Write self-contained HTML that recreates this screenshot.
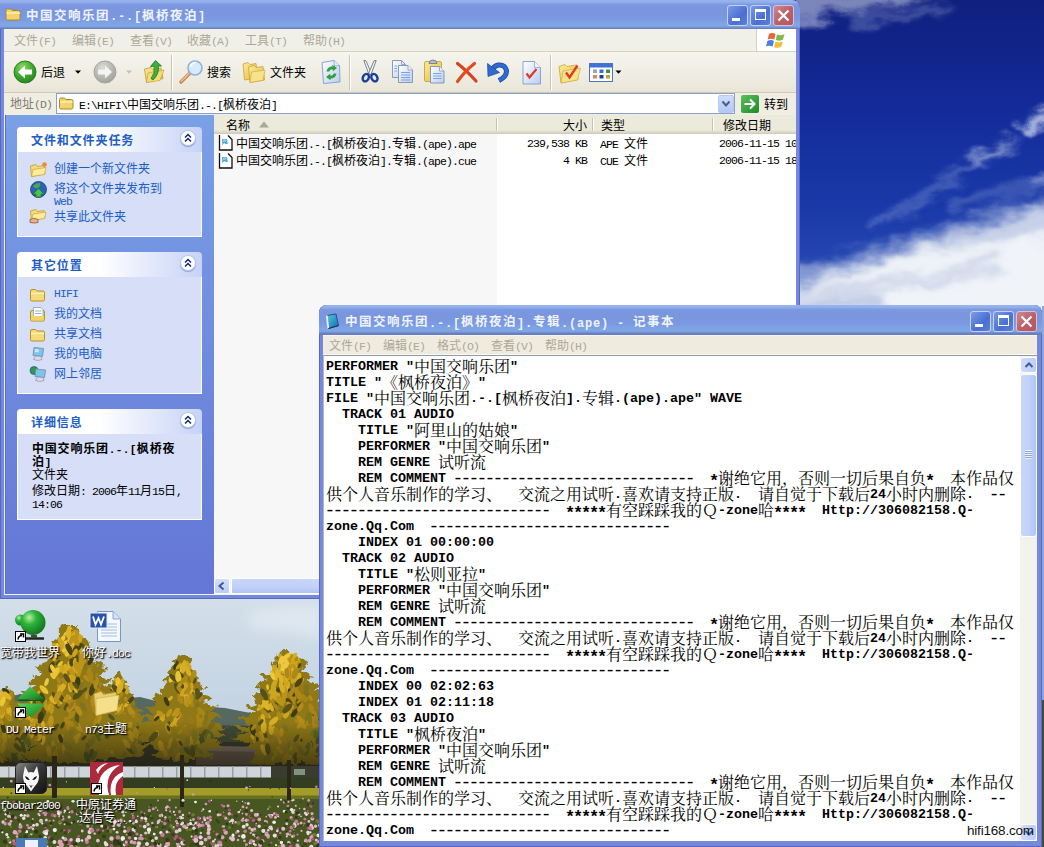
<!DOCTYPE html>
<html lang="zh-CN"><head><meta charset="utf-8"><title>desktop</title>
<style>
*{box-sizing:border-box;margin:0;padding:0}
html,body{width:1044px;height:847px;overflow:hidden;background:#1f3a9c}
body{position:relative;font:12px/16px "Liberation Sans","Noto Sans CJK SC",sans-serif;color:#000}
.abs{position:absolute}
.l{font-family:"Liberation Mono",monospace;font-size:11.500px;letter-spacing:-.9px}
.lb{font:bold 11px "Liberation Mono",monospace;letter-spacing:.4px}
.m{font:bold 12px "Liberation Mono",monospace;letter-spacing:.8px;position:relative;top:.5px}
#bg{position:absolute;left:0;top:0;width:1044px;height:847px}
/* window chrome */
.win{position:absolute;background:#7488dc;box-shadow:inset 1px 0 0 #5a66c4,inset -1px 0 0 #5a66c4,inset 0 -1px 0 #5a66c4;border-radius:8px 8px 0 0;overflow:hidden}
.tb{position:absolute;left:0;top:0;right:0;height:29px;background:linear-gradient(#98b5ef 0,#94b0ec 2px,#7d9ae0 4.500px,#7a96df 8px,#7a96df 15px,#7c9be5 20px,#80a6e3 24px,#7ca3e1 27px,#6c7ec2 28px,#6c7ec2 30px);border-radius:8px 8px 0 0}
.tt{position:absolute;top:7px;font:bold 12.500px/16px "Liberation Sans","Noto Sans CJK SC",sans-serif;color:#eef3ff;white-space:nowrap;letter-spacing:1.500px}
.cb{position:absolute;top:5px;width:21px;height:21px;border-radius:3px;border:1px solid #c5d3f3;background:linear-gradient(135deg,#7c9ae6,#4a6fd4 60%,#5b80dc)}
.cb.x{background:linear-gradient(135deg,#cc8890,#bb5f66 55%,#b8565e);border-color:#d8c0dc}
.menu{position:absolute;background:#efebde;color:#aca899;white-space:nowrap}
.menu span{position:absolute;top:4px}
.beige{background:#efebde}
</style></head><body>
<style>
.ph{position:absolute;left:17px;width:185px;height:25px;border-radius:4px 4px 0 0;background:linear-gradient(90deg,#fff 0,#fff 45%,#c6d3f7 100%);color:#215dc6;font-weight:bold;padding:6px 0 0 14px;letter-spacing:.9px;white-space:nowrap}
.pb{position:absolute;left:17px;width:185px;background:#d6dff7;border:1px solid #fff;border-top:0}
.chev{position:absolute;left:180px;width:16px;height:16px;border-radius:50%;background:#fff;border:1px solid #b9c8ee;box-shadow:0 1px 1px rgba(60,80,160,.4)}
.lk{position:absolute;left:54px;color:#215dc6;white-space:nowrap}
</style>
<style>
#nptext{position:absolute;left:7px;top:53px;width:690px;height:484px;overflow:hidden;font:bold 13.333px/16px "Liberation Mono","DejaVu Sans Mono",monospace;color:#000}
#nptext i{margin:0 1.400px 0 -1.400px;font-style:normal;font-weight:normal;font-size:18px;letter-spacing:-2.800px;color:#000;display:inline-block;vertical-align:top;height:16px;line-height:16px}
#nptext u{text-decoration:none;font-size:17px;letter-spacing:-2.200px;margin:0 1.100px 0 -1.100px;display:inline-block;vertical-align:top;height:16px;line-height:16px;position:relative;top:2.500px}
#nptext p{height:16px;line-height:16px;white-space:pre}
#nptext b{font:normal 16px/16px "Liberation Serif","Noto Serif CJK SC",serif;display:inline-block;vertical-align:top;height:16px;position:relative;top:0}
</style>
<style>
.dl{position:absolute;color:#fff;text-align:center;white-space:nowrap;text-shadow:1px 1px 1px #000,1px 1px 2px rgba(0,0,0,.8);line-height:13px}
.sc{position:absolute;width:11px;height:11px;background:#fff;border:1px solid #000}
</style>
<svg id="bg" width="1044" height="847" viewBox="0 0 1044 847">
<defs>
<linearGradient id="sky" x1="0" y1="0" x2="0" y2="1">
<stop offset="0" stop-color="#101f7e"/><stop offset=".12" stop-color="#132a98"/><stop offset=".25" stop-color="#1a3aa9"/><stop offset=".34" stop-color="#2a4db6"/><stop offset=".4" stop-color="#4a68c0"/><stop offset=".7" stop-color="#c9d8e6"/><stop offset="1" stop-color="#c9d8e6"/>
</linearGradient>
<linearGradient id="sky2" x1="0" y1="0" x2="0" y2="1"><stop offset="0" stop-color="#d3dfe9"/><stop offset="1" stop-color="#c2d2e2"/></linearGradient>
<filter id="b12" x="-30%" y="-30%" width="160%" height="160%"><feGaussianBlur stdDeviation="12"/></filter>
<filter id="b6" x="-30%" y="-30%" width="160%" height="160%"><feGaussianBlur stdDeviation="6"/></filter>
<filter id="b3" x="-30%" y="-30%" width="160%" height="160%"><feGaussianBlur stdDeviation="3"/></filter>
<filter id="b1" x="-10%" y="-10%" width="120%" height="120%"><feGaussianBlur stdDeviation="0.7"/></filter>
<filter id="leaf" x="-10%" y="-10%" width="120%" height="120%"><feTurbulence type="fractalNoise" baseFrequency="0.09" numOctaves="3" seed="4" result="n"/><feDisplacementMap in="SourceGraphic" in2="n" scale="14" xChannelSelector="R" yChannelSelector="G"/></filter>
<clipPath id="dl"><rect x="0" y="597" width="322" height="250"/></clipPath>
<clipPath id="tr"><rect x="796" y="0" width="248" height="847"/></clipPath>
</defs>
<rect width="1044" height="847" fill="url(#sky)"/>
<filter id="cl" filterUnits="userSpaceOnUse" x="700" y="-60" width="420" height="460"><feTurbulence type="fractalNoise" baseFrequency="0.018 0.03" numOctaves="4" seed="9" result="n"/><feGaussianBlur in="SourceGraphic" stdDeviation="5" result="g"/><feDisplacementMap in="g" in2="n" scale="38" xChannelSelector="R" yChannelSelector="G"/></filter>
<filter id="cl2" filterUnits="userSpaceOnUse" x="700" y="-60" width="420" height="460"><feTurbulence type="fractalNoise" baseFrequency="0.03 0.05" numOctaves="4" seed="3" result="n"/><feGaussianBlur in="SourceGraphic" stdDeviation="3.5" result="g"/><feDisplacementMap in="g" in2="n" scale="26" xChannelSelector="R" yChannelSelector="G"/></filter>
<g clip-path="url(#tr)">
<g filter="url(#cl2)">
<path d="M780 -12 L945 -12 Q920 4 890 8 Q862 16 836 13 Q812 20 780 30 Z" fill="#e6ebf6" opacity=".5"/>
<path d="M850 22 Q900 20 945 6" stroke="#9fb0dc" stroke-width="8" fill="none" opacity=".4"/>
</g>
<g filter="url(#cl)">
<path d="M760 300 Q830 268 880 256 Q940 240 990 226 Q1020 216 1080 196 L1080 360 L760 360 Z" fill="#f0f3f8"/>
<path d="M760 276 Q850 252 900 240 Q960 218 1080 190 L1080 232 Q960 246 880 264 Q830 276 760 304 Z" fill="#aebce0" opacity=".6"/>
</g>
<g filter="url(#cl)"><path d="M770 300 Q840 286 900 282 Q960 276 1000 262" stroke="#a9b8da" stroke-width="9" fill="none" opacity=".55"/><path d="M770 318 Q830 300 880 300" stroke="#8ea2d2" stroke-width="14" fill="none" opacity=".5"/><path d="M960 250 Q1010 240 1060 222" stroke="#c3cde6" stroke-width="7" fill="none" opacity=".6"/></g>
<g filter="url(#cl2)">
<path d="M872 226 Q910 208 940 186 Q970 162 1012 144" stroke="#a9b9e2" stroke-width="10" fill="none" opacity=".32"/>
<path d="M972 160 Q995 148 1018 143" stroke="#c9d3ee" stroke-width="8" fill="none" opacity=".5"/>
<path d="M1022 130 Q1036 122 1060 112" stroke="#d3dcf2" stroke-width="12" fill="none" opacity=".8"/>
<path d="M950 206 Q1000 192 1060 180" stroke="#8fa2d8" stroke-width="14" fill="none" opacity=".3"/>
<path d="M1030 184 Q1040 180 1060 176" stroke="#c3cdea" stroke-width="10" fill="none" opacity=".45"/>
</g>
</g>
<g clip-path="url(#dl)">
<rect x="0" y="598" width="322" height="130" fill="url(#sky2)"/>
<path d="M250 612 Q290 604 322 606 L322 640 Q290 630 250 628 Z" fill="#e3ebf2" opacity=".7" filter="url(#b6)"/>
<path d="M0 700 L20 694 L60 700 L110 700 L140 697 L160 702 L195 706 L225 708 L245 712 L270 716 L322 716 L322 770 L0 770 Z" fill="#56685f"/>
<path d="M0 720 L322 728 L322 770 L0 770 Z" fill="#3f4a38"/>
<rect x="0" y="742" width="322" height="55" fill="#34362a"/>
<path d="M196 754 L214 746 L258 747 L272 756 L272 765 L196 765 Z" fill="#66564f"/>
<path d="M214 746 L258 747 L266 752 L205 751 Z" fill="#7d6d66"/>
<path d="M116.5 676.0 L112.1 679.7 L114.0 683.5 L105.6 687.2 L109.3 690.9 L105.0 694.6 L108.6 698.4 L99.4 702.1 L105.0 705.8 L94.9 709.5 L102.4 713.3 L91.9 717.0 L98.3 720.7 L88.5 724.5 L97.4 728.2 L84.2 731.9 L93.8 735.6 L82.9 739.4 L98.0 743.1 L86.3 746.8 L102.2 750.5 L94.8 754.3 L105.4 758.0 L132.2 758.0 L142.9 754.3 L137.4 750.5 L149.1 746.8 L139.9 743.1 L156.6 739.4 L145.0 735.6 L156.3 731.9 L143.0 728.2 L150.8 724.5 L137.1 720.7 L147.5 717.0 L134.5 713.3 L144.2 709.5 L135.0 705.8 L137.8 702.1 L130.6 698.4 L134.8 694.6 L126.7 690.9 L131.8 687.2 L122.8 683.5 L125.8 679.7 L120.7 676.0 Z" fill="#8f7818" filter="url(#leaf)"/><ellipse cx="121.5" cy="706.6" rx="2.3" ry="5.0" fill="#cfa41f" transform="rotate(-15 121.5 706.6)"/><ellipse cx="124.3" cy="754.9" rx="1.6" ry="3.5" fill="#7a6c1c" transform="rotate(41 124.3 754.9)"/><ellipse cx="125.0" cy="729.6" rx="3.0" ry="6.5" fill="#a88416" transform="rotate(-42 125.0 729.6)"/><ellipse cx="124.0" cy="716.5" rx="2.1" ry="4.6" fill="#a88416" transform="rotate(2 124.0 716.5)"/><ellipse cx="100.0" cy="747.8" rx="2.0" ry="4.4" fill="#cfa41f" transform="rotate(-45 100.0 747.8)"/><ellipse cx="130.1" cy="725.7" rx="2.0" ry="4.2" fill="#b08c1a" transform="rotate(14 130.1 725.7)"/><ellipse cx="108.5" cy="697.9" rx="1.3" ry="2.9" fill="#4a4416" transform="rotate(-25 108.5 697.9)"/><ellipse cx="112.1" cy="753.4" rx="1.8" ry="3.8" fill="#b08c1a" transform="rotate(-10 112.1 753.4)"/><ellipse cx="108.3" cy="707.3" rx="2.8" ry="6.0" fill="#cca620" transform="rotate(32 108.3 707.3)"/><ellipse cx="126.6" cy="745.5" rx="1.5" ry="3.2" fill="#b08c1a" transform="rotate(5 126.6 745.5)"/><ellipse cx="128.5" cy="728.0" rx="2.9" ry="6.3" fill="#b08c1a" transform="rotate(16 128.5 728.0)"/><ellipse cx="114.8" cy="703.0" rx="2.6" ry="5.7" fill="#ac8818" transform="rotate(-48 114.8 703.0)"/><ellipse cx="121.7" cy="708.5" rx="1.5" ry="3.3" fill="#ac8818" transform="rotate(9 121.7 708.5)"/><ellipse cx="131.2" cy="706.7" rx="2.3" ry="5.1" fill="#7e7420" transform="rotate(-48 131.2 706.7)"/><ellipse cx="137.9" cy="724.6" rx="1.4" ry="2.9" fill="#7e7420" transform="rotate(-12 137.9 724.6)"/><ellipse cx="111.5" cy="724.8" rx="1.9" ry="4.2" fill="#ac8818" transform="rotate(26 111.5 724.8)"/><ellipse cx="126.0" cy="700.0" rx="1.5" ry="3.2" fill="#bc941a" transform="rotate(-11 126.0 700.0)"/><ellipse cx="124.7" cy="717.8" rx="1.8" ry="3.8" fill="#7e7420" transform="rotate(33 124.7 717.8)"/><ellipse cx="100.2" cy="732.8" rx="1.9" ry="4.0" fill="#bc941a" transform="rotate(6 100.2 732.8)"/><ellipse cx="140.0" cy="741.2" rx="1.5" ry="3.2" fill="#5f6420" transform="rotate(22 140.0 741.2)"/><ellipse cx="109.5" cy="714.1" rx="1.5" ry="3.3" fill="#bc941a" transform="rotate(-10 109.5 714.1)"/><ellipse cx="134.5" cy="741.0" rx="1.6" ry="3.5" fill="#7a6c1c" transform="rotate(29 134.5 741.0)"/><ellipse cx="108.4" cy="706.1" rx="1.8" ry="3.9" fill="#ecc83e" transform="rotate(9 108.4 706.1)"/><ellipse cx="116.6" cy="706.2" rx="2.0" ry="4.4" fill="#d8ae24" transform="rotate(-31 116.6 706.2)"/><ellipse cx="118.5" cy="695.2" rx="2.7" ry="5.9" fill="#d8ae24" transform="rotate(21 118.5 695.2)"/><ellipse cx="134.0" cy="751.8" rx="1.7" ry="3.7" fill="#8a7a1c" transform="rotate(19 134.0 751.8)"/><ellipse cx="111.2" cy="705.8" rx="1.4" ry="3.1" fill="#ecc83e" transform="rotate(-35 111.2 705.8)"/><ellipse cx="98.3" cy="741.2" rx="2.8" ry="6.1" fill="#bc941a" transform="rotate(5 98.3 741.2)"/><ellipse cx="99.1" cy="723.6" rx="2.6" ry="5.6" fill="#ac8818" transform="rotate(-20 99.1 723.6)"/><ellipse cx="120.1" cy="730.1" rx="2.0" ry="4.4" fill="#a88416" transform="rotate(-7 120.1 730.1)"/><ellipse cx="126.6" cy="689.6" rx="2.2" ry="4.8" fill="#cfa41f" transform="rotate(-5 126.6 689.6)"/><ellipse cx="110.8" cy="696.8" rx="2.8" ry="6.1" fill="#3e3c14" transform="rotate(-15 110.8 696.8)"/><ellipse cx="130.5" cy="749.6" rx="2.7" ry="5.9" fill="#54501c" transform="rotate(-44 130.5 749.6)"/><ellipse cx="106.9" cy="737.2" rx="2.4" ry="5.1" fill="#cfa41f" transform="rotate(10 106.9 737.2)"/><ellipse cx="127.8" cy="704.5" rx="2.8" ry="6.0" fill="#a88416" transform="rotate(-35 127.8 704.5)"/><ellipse cx="118.8" cy="683.9" rx="1.4" ry="3.0" fill="#cca620" transform="rotate(-10 118.8 683.9)"/><ellipse cx="111.3" cy="691.9" rx="2.0" ry="4.3" fill="#ecc83e" transform="rotate(-4 111.3 691.9)"/><ellipse cx="130.8" cy="700.1" rx="2.0" ry="4.4" fill="#4a4416" transform="rotate(41 130.8 700.1)"/><ellipse cx="133.3" cy="734.6" rx="2.3" ry="4.9" fill="#54501c" transform="rotate(27 133.3 734.6)"/><ellipse cx="120.8" cy="729.2" rx="2.4" ry="5.2" fill="#54501c" transform="rotate(-44 120.8 729.2)"/><ellipse cx="118.9" cy="708.2" rx="2.5" ry="5.4" fill="#d8ae24" transform="rotate(8 118.9 708.2)"/><ellipse cx="116.5" cy="681.5" rx="1.8" ry="3.8" fill="#cca620" transform="rotate(-22 116.5 681.5)"/><ellipse cx="131.6" cy="712.2" rx="2.9" ry="6.3" fill="#b08c1a" transform="rotate(-35 131.6 712.2)"/><ellipse cx="105.8" cy="715.1" rx="2.7" ry="5.8" fill="#cca620" transform="rotate(35 105.8 715.1)"/><ellipse cx="116.3" cy="688.3" rx="2.2" ry="4.8" fill="#e8c432" transform="rotate(10 116.3 688.3)"/><ellipse cx="123.7" cy="690.9" rx="1.4" ry="3.0" fill="#4a4416" transform="rotate(34 123.7 690.9)"/><ellipse cx="105.9" cy="746.5" rx="1.4" ry="2.9" fill="#a88416" transform="rotate(-47 105.9 746.5)"/><ellipse cx="126.5" cy="743.8" rx="2.7" ry="5.9" fill="#b08c1a" transform="rotate(-39 126.5 743.8)"/><ellipse cx="121.7" cy="682.8" rx="2.2" ry="4.7" fill="#cfa41f" transform="rotate(20 121.7 682.8)"/><ellipse cx="140.0" cy="736.6" rx="1.4" ry="3.1" fill="#5f6420" transform="rotate(-41 140.0 736.6)"/><ellipse cx="111.7" cy="698.4" rx="1.7" ry="3.8" fill="#cca620" transform="rotate(-18 111.7 698.4)"/><ellipse cx="115.9" cy="707.8" rx="1.9" ry="4.1" fill="#cfa41f" transform="rotate(-2 115.9 707.8)"/><ellipse cx="136.5" cy="717.8" rx="2.0" ry="4.4" fill="#98781a" transform="rotate(3 136.5 717.8)"/><ellipse cx="131.0" cy="732.2" rx="2.5" ry="5.3" fill="#7e7420" transform="rotate(-31 131.0 732.2)"/><ellipse cx="136.6" cy="728.6" rx="1.6" ry="3.4" fill="#54501c" transform="rotate(39 136.6 728.6)"/><ellipse cx="116.8" cy="719.1" rx="2.5" ry="5.5" fill="#ac8818" transform="rotate(46 116.8 719.1)"/><ellipse cx="120.8" cy="695.1" rx="1.8" ry="4.0" fill="#ac8818" transform="rotate(35 120.8 695.1)"/><ellipse cx="114.9" cy="733.3" rx="2.8" ry="6.0" fill="#b08c1a" transform="rotate(-23 114.9 733.3)"/><ellipse cx="112.8" cy="703.3" rx="2.7" ry="5.8" fill="#ecc83e" transform="rotate(-20 112.8 703.3)"/><ellipse cx="126.5" cy="704.4" rx="1.6" ry="3.4" fill="#d8ae24" transform="rotate(39 126.5 704.4)"/><ellipse cx="117.7" cy="725.3" rx="2.7" ry="5.9" fill="#cfa41f" transform="rotate(11 117.7 725.3)"/><ellipse cx="105.8" cy="755.0" rx="2.9" ry="6.3" fill="#a88416" transform="rotate(9 105.8 755.0)"/><ellipse cx="134.0" cy="748.8" rx="2.4" ry="5.2" fill="#7a6c1c" transform="rotate(-23 134.0 748.8)"/><ellipse cx="108.0" cy="744.5" rx="1.6" ry="3.6" fill="#98781a" transform="rotate(29 108.0 744.5)"/><ellipse cx="136.0" cy="733.3" rx="2.8" ry="6.1" fill="#a88416" transform="rotate(-10 136.0 733.3)"/><ellipse cx="111.0" cy="693.9" rx="2.7" ry="5.8" fill="#5a5218" transform="rotate(-13 111.0 693.9)"/><ellipse cx="118.5" cy="682.8" rx="2.6" ry="5.5" fill="#e8c432" transform="rotate(-8 118.5 682.8)"/><ellipse cx="115.6" cy="705.1" rx="1.5" ry="3.1" fill="#d8ae24" transform="rotate(0 115.6 705.1)"/><ellipse cx="116.1" cy="689.6" rx="2.8" ry="6.1" fill="#54501c" transform="rotate(-36 116.1 689.6)"/><ellipse cx="119.9" cy="713.2" rx="1.7" ry="3.8" fill="#ac8818" transform="rotate(36 119.9 713.2)"/><ellipse cx="131.2" cy="738.4" rx="1.8" ry="3.9" fill="#b08c1a" transform="rotate(-37 131.2 738.4)"/><ellipse cx="141.2" cy="737.0" rx="2.5" ry="5.3" fill="#7a6c1c" transform="rotate(35 141.2 737.0)"/><ellipse cx="113.6" cy="717.4" rx="2.5" ry="5.5" fill="#bc941a" transform="rotate(32 113.6 717.4)"/><ellipse cx="124.8" cy="728.8" rx="1.6" ry="3.5" fill="#7e7420" transform="rotate(-35 124.8 728.8)"/><ellipse cx="119.9" cy="688.3" rx="2.9" ry="6.2" fill="#d8ae24" transform="rotate(21 119.9 688.3)"/><ellipse cx="110.8" cy="702.8" rx="2.1" ry="4.6" fill="#e8c432" transform="rotate(-37 110.8 702.8)"/><ellipse cx="131.2" cy="734.1" rx="2.2" ry="4.8" fill="#b08c1a" transform="rotate(-38 131.2 734.1)"/><ellipse cx="116.2" cy="700.2" rx="2.8" ry="6.0" fill="#5a5218" transform="rotate(-19 116.2 700.2)"/><ellipse cx="119.7" cy="732.6" rx="2.8" ry="6.0" fill="#7e7420" transform="rotate(19 119.7 732.6)"/>
<path d="M65.8 624.0 L60.0 630.3 L59.8 636.5 L50.3 642.8 L52.2 649.1 L42.7 655.4 L49.3 661.6 L33.3 667.9 L42.0 674.2 L27.6 680.5 L36.1 686.7 L20.5 693.0 L32.0 699.3 L9.9 705.5 L28.1 711.8 L3.8 718.1 L23.0 724.4 L3.6 730.6 L29.6 736.9 L13.6 743.2 L37.5 749.5 L23.6 755.7 L45.6 762.0 L96.1 762.0 L114.2 755.7 L106.0 749.5 L125.7 743.2 L111.9 736.9 L133.6 730.6 L115.8 724.4 L134.1 718.1 L111.7 711.8 L127.1 705.5 L106.6 699.3 L120.7 693.0 L102.2 686.7 L112.1 680.5 L98.7 674.2 L107.4 667.9 L89.7 661.6 L98.4 655.4 L84.3 649.1 L91.5 642.8 L80.0 636.5 L80.1 630.3 L74.1 624.0 Z" fill="#8f7818" filter="url(#leaf)"/><ellipse cx="64.8" cy="749.8" rx="2.7" ry="5.9" fill="#b08c1a" transform="rotate(-14 64.8 749.8)"/><ellipse cx="99.4" cy="705.5" rx="2.7" ry="5.9" fill="#a88416" transform="rotate(11 99.4 705.5)"/><ellipse cx="82.7" cy="661.7" rx="2.0" ry="4.4" fill="#ac8818" transform="rotate(-39 82.7 661.7)"/><ellipse cx="70.5" cy="686.6" rx="2.6" ry="5.7" fill="#d8ae24" transform="rotate(-3 70.5 686.6)"/><ellipse cx="38.2" cy="693.1" rx="1.4" ry="3.0" fill="#cca620" transform="rotate(32 38.2 693.1)"/><ellipse cx="70.1" cy="652.5" rx="3.0" ry="6.4" fill="#bc941a" transform="rotate(1 70.1 652.5)"/><ellipse cx="101.6" cy="696.1" rx="2.3" ry="5.0" fill="#b08c1a" transform="rotate(34 101.6 696.1)"/><ellipse cx="103.4" cy="700.5" rx="1.3" ry="2.9" fill="#98781a" transform="rotate(16 103.4 700.5)"/><ellipse cx="44.3" cy="729.6" rx="2.9" ry="6.3" fill="#ac8818" transform="rotate(22 44.3 729.6)"/><ellipse cx="102.5" cy="701.3" rx="2.0" ry="4.4" fill="#7e7420" transform="rotate(-6 102.5 701.3)"/><ellipse cx="70.6" cy="631.1" rx="2.6" ry="5.7" fill="#e8c432" transform="rotate(-21 70.6 631.1)"/><ellipse cx="74.1" cy="711.6" rx="1.6" ry="3.5" fill="#5a5218" transform="rotate(-46 74.1 711.6)"/><ellipse cx="84.0" cy="737.8" rx="1.5" ry="3.2" fill="#4a4416" transform="rotate(46 84.0 737.8)"/><ellipse cx="47.7" cy="726.8" rx="1.5" ry="3.3" fill="#ac8818" transform="rotate(-13 47.7 726.8)"/><ellipse cx="62.2" cy="639.7" rx="2.2" ry="4.8" fill="#ecc83e" transform="rotate(32 62.2 639.7)"/><ellipse cx="66.0" cy="721.2" rx="1.9" ry="4.0" fill="#a88416" transform="rotate(-11 66.0 721.2)"/><ellipse cx="65.5" cy="680.0" rx="1.6" ry="3.5" fill="#3e3c14" transform="rotate(27 65.5 680.0)"/><ellipse cx="99.4" cy="685.7" rx="1.7" ry="3.7" fill="#a88416" transform="rotate(42 99.4 685.7)"/><ellipse cx="66.6" cy="752.8" rx="2.2" ry="4.7" fill="#98781a" transform="rotate(30 66.6 752.8)"/><ellipse cx="71.4" cy="732.2" rx="1.7" ry="3.7" fill="#7e7420" transform="rotate(36 71.4 732.2)"/><ellipse cx="56.5" cy="704.0" rx="2.4" ry="5.2" fill="#5a5218" transform="rotate(-34 56.5 704.0)"/><ellipse cx="93.2" cy="753.8" rx="1.8" ry="4.0" fill="#8a7a1c" transform="rotate(-12 93.2 753.8)"/><ellipse cx="62.5" cy="725.3" rx="1.7" ry="3.8" fill="#4a4416" transform="rotate(25 62.5 725.3)"/><ellipse cx="108.5" cy="734.9" rx="2.3" ry="4.9" fill="#7a6c1c" transform="rotate(-2 108.5 734.9)"/><ellipse cx="54.8" cy="656.3" rx="2.3" ry="4.9" fill="#deb428" transform="rotate(13 54.8 656.3)"/><ellipse cx="74.5" cy="644.2" rx="1.8" ry="3.9" fill="#ac8818" transform="rotate(28 74.5 644.2)"/><ellipse cx="100.7" cy="741.6" rx="1.4" ry="2.9" fill="#8a7a1c" transform="rotate(22 100.7 741.6)"/><ellipse cx="56.0" cy="730.3" rx="1.7" ry="3.6" fill="#7e7420" transform="rotate(20 56.0 730.3)"/><ellipse cx="90.3" cy="674.6" rx="2.5" ry="5.4" fill="#98781a" transform="rotate(-42 90.3 674.6)"/><ellipse cx="32.7" cy="723.0" rx="1.6" ry="3.5" fill="#bc941a" transform="rotate(-16 32.7 723.0)"/><ellipse cx="78.9" cy="727.3" rx="2.7" ry="5.9" fill="#b08c1a" transform="rotate(-36 78.9 727.3)"/><ellipse cx="87.5" cy="667.9" rx="2.3" ry="5.1" fill="#7e7420" transform="rotate(-33 87.5 667.9)"/><ellipse cx="90.6" cy="704.5" rx="1.9" ry="4.0" fill="#7e7420" transform="rotate(50 90.6 704.5)"/><ellipse cx="58.0" cy="649.6" rx="1.5" ry="3.3" fill="#cca620" transform="rotate(-41 58.0 649.6)"/><ellipse cx="49.2" cy="703.4" rx="1.5" ry="3.2" fill="#ac8818" transform="rotate(22 49.2 703.4)"/><ellipse cx="42.3" cy="698.7" rx="2.8" ry="6.1" fill="#4a4416" transform="rotate(-13 42.3 698.7)"/><ellipse cx="72.7" cy="632.5" rx="1.5" ry="3.2" fill="#4a4416" transform="rotate(-26 72.7 632.5)"/><ellipse cx="90.6" cy="661.3" rx="2.0" ry="4.4" fill="#3e3c14" transform="rotate(37 90.6 661.3)"/><ellipse cx="80.3" cy="661.6" rx="1.5" ry="3.2" fill="#d8ae24" transform="rotate(19 80.3 661.6)"/><ellipse cx="55.3" cy="746.3" rx="1.7" ry="3.8" fill="#a88416" transform="rotate(-24 55.3 746.3)"/><ellipse cx="31.8" cy="713.7" rx="1.3" ry="2.9" fill="#ac8818" transform="rotate(42 31.8 713.7)"/><ellipse cx="66.1" cy="706.6" rx="1.8" ry="4.0" fill="#5a5218" transform="rotate(26 66.1 706.6)"/><ellipse cx="46.2" cy="754.0" rx="1.7" ry="3.6" fill="#7e7420" transform="rotate(34 46.2 754.0)"/><ellipse cx="52.8" cy="676.1" rx="1.7" ry="3.6" fill="#ecc83e" transform="rotate(-40 52.8 676.1)"/><ellipse cx="35.8" cy="735.0" rx="2.6" ry="5.6" fill="#5a5218" transform="rotate(-21 35.8 735.0)"/><ellipse cx="58.8" cy="680.5" rx="1.9" ry="4.1" fill="#ac8818" transform="rotate(-19 58.8 680.5)"/><ellipse cx="72.3" cy="673.3" rx="2.3" ry="5.0" fill="#bc941a" transform="rotate(-22 72.3 673.3)"/><ellipse cx="65.7" cy="633.5" rx="1.4" ry="3.1" fill="#e8c432" transform="rotate(43 65.7 633.5)"/><ellipse cx="73.2" cy="640.4" rx="1.8" ry="3.9" fill="#d8ae24" transform="rotate(10 73.2 640.4)"/><ellipse cx="43.0" cy="740.4" rx="2.2" ry="4.7" fill="#cfa41f" transform="rotate(15 43.0 740.4)"/><ellipse cx="48.8" cy="751.4" rx="2.6" ry="5.7" fill="#b08c1a" transform="rotate(-11 48.8 751.4)"/><ellipse cx="70.4" cy="644.5" rx="2.9" ry="6.2" fill="#deb428" transform="rotate(-32 70.4 644.5)"/><ellipse cx="86.2" cy="700.2" rx="2.6" ry="5.7" fill="#98781a" transform="rotate(-28 86.2 700.2)"/><ellipse cx="71.8" cy="668.9" rx="1.4" ry="3.0" fill="#bc941a" transform="rotate(-18 71.8 668.9)"/><ellipse cx="85.9" cy="729.6" rx="2.1" ry="4.5" fill="#b08c1a" transform="rotate(19 85.9 729.6)"/><ellipse cx="72.4" cy="686.7" rx="1.3" ry="2.9" fill="#bc941a" transform="rotate(-17 72.4 686.7)"/><ellipse cx="89.7" cy="692.6" rx="2.9" ry="6.3" fill="#a88416" transform="rotate(-43 89.7 692.6)"/><ellipse cx="76.9" cy="718.7" rx="2.3" ry="5.0" fill="#5a5218" transform="rotate(0 76.9 718.7)"/><ellipse cx="45.5" cy="702.5" rx="1.5" ry="3.2" fill="#bc941a" transform="rotate(17 45.5 702.5)"/><ellipse cx="89.8" cy="671.2" rx="2.9" ry="6.2" fill="#98781a" transform="rotate(-20 89.8 671.2)"/><ellipse cx="79.3" cy="670.6" rx="2.9" ry="6.3" fill="#ac8818" transform="rotate(21 79.3 670.6)"/><ellipse cx="88.1" cy="708.5" rx="2.4" ry="5.2" fill="#98781a" transform="rotate(-44 88.1 708.5)"/><ellipse cx="88.3" cy="747.9" rx="2.4" ry="5.2" fill="#5f6420" transform="rotate(-11 88.3 747.9)"/><ellipse cx="60.3" cy="668.8" rx="2.2" ry="4.9" fill="#cca620" transform="rotate(26 60.3 668.8)"/><ellipse cx="60.6" cy="641.7" rx="2.3" ry="5.1" fill="#cca620" transform="rotate(-28 60.6 641.7)"/><ellipse cx="67.6" cy="650.7" rx="2.9" ry="6.3" fill="#e8c432" transform="rotate(13 67.6 650.7)"/><ellipse cx="88.6" cy="717.4" rx="1.9" ry="4.1" fill="#98781a" transform="rotate(19 88.6 717.4)"/><ellipse cx="28.7" cy="723.6" rx="3.0" ry="6.4" fill="#cfa41f" transform="rotate(-16 28.7 723.6)"/><ellipse cx="32.6" cy="724.5" rx="3.0" ry="6.4" fill="#cfa41f" transform="rotate(6 32.6 724.5)"/><ellipse cx="49.4" cy="738.9" rx="2.7" ry="6.0" fill="#7e7420" transform="rotate(0 49.4 738.9)"/><ellipse cx="64.1" cy="651.8" rx="1.5" ry="3.3" fill="#deb428" transform="rotate(-35 64.1 651.8)"/><ellipse cx="72.1" cy="685.7" rx="2.8" ry="6.2" fill="#ac8818" transform="rotate(-19 72.1 685.7)"/><ellipse cx="73.4" cy="679.0" rx="2.9" ry="6.4" fill="#cfa41f" transform="rotate(-47 73.4 679.0)"/><ellipse cx="78.5" cy="710.6" rx="2.7" ry="5.9" fill="#b08c1a" transform="rotate(-32 78.5 710.6)"/><ellipse cx="53.5" cy="699.8" rx="2.3" ry="5.0" fill="#d8ae24" transform="rotate(-29 53.5 699.8)"/><ellipse cx="69.3" cy="700.1" rx="2.8" ry="6.0" fill="#d8ae24" transform="rotate(-24 69.3 700.1)"/><ellipse cx="51.6" cy="667.0" rx="2.7" ry="5.8" fill="#4a4416" transform="rotate(19 51.6 667.0)"/><ellipse cx="78.4" cy="668.5" rx="2.5" ry="5.5" fill="#cfa41f" transform="rotate(14 78.4 668.5)"/><ellipse cx="87.1" cy="678.3" rx="2.1" ry="4.5" fill="#b08c1a" transform="rotate(-50 87.1 678.3)"/><ellipse cx="76.4" cy="646.6" rx="1.9" ry="4.1" fill="#ac8818" transform="rotate(50 76.4 646.6)"/><ellipse cx="76.4" cy="723.7" rx="1.5" ry="3.3" fill="#7e7420" transform="rotate(-24 76.4 723.7)"/><ellipse cx="106.6" cy="701.6" rx="2.4" ry="5.2" fill="#98781a" transform="rotate(9 106.6 701.6)"/><ellipse cx="71.3" cy="707.2" rx="2.9" ry="6.3" fill="#b08c1a" transform="rotate(39 71.3 707.2)"/><ellipse cx="74.2" cy="652.5" rx="2.2" ry="4.8" fill="#cfa41f" transform="rotate(36 74.2 652.5)"/><ellipse cx="65.7" cy="680.3" rx="2.0" ry="4.3" fill="#cfa41f" transform="rotate(13 65.7 680.3)"/><ellipse cx="55.3" cy="756.3" rx="2.9" ry="6.4" fill="#a88416" transform="rotate(2 55.3 756.3)"/><ellipse cx="39.3" cy="722.5" rx="2.6" ry="5.7" fill="#ac8818" transform="rotate(-28 39.3 722.5)"/><ellipse cx="97.8" cy="728.3" rx="2.3" ry="5.1" fill="#8a7a1c" transform="rotate(40 97.8 728.3)"/><ellipse cx="81.1" cy="683.1" rx="1.8" ry="4.0" fill="#ac8818" transform="rotate(12 81.1 683.1)"/><ellipse cx="70.4" cy="652.4" rx="1.8" ry="3.8" fill="#54501c" transform="rotate(-42 70.4 652.4)"/><ellipse cx="78.5" cy="676.0" rx="1.4" ry="2.9" fill="#bc941a" transform="rotate(38 78.5 676.0)"/><ellipse cx="73.5" cy="642.7" rx="1.8" ry="3.9" fill="#bc941a" transform="rotate(-20 73.5 642.7)"/><ellipse cx="52.7" cy="743.4" rx="1.4" ry="3.1" fill="#b08c1a" transform="rotate(9 52.7 743.4)"/><ellipse cx="86.5" cy="695.8" rx="1.6" ry="3.5" fill="#b08c1a" transform="rotate(-5 86.5 695.8)"/><ellipse cx="48.8" cy="708.3" rx="2.3" ry="4.9" fill="#ac8818" transform="rotate(28 48.8 708.3)"/><ellipse cx="55.7" cy="672.8" rx="2.9" ry="6.4" fill="#e8c432" transform="rotate(29 55.7 672.8)"/><ellipse cx="95.2" cy="682.0" rx="2.9" ry="6.3" fill="#b08c1a" transform="rotate(-26 95.2 682.0)"/><ellipse cx="75.4" cy="640.1" rx="2.8" ry="6.0" fill="#bc941a" transform="rotate(27 75.4 640.1)"/><ellipse cx="67.3" cy="750.9" rx="1.6" ry="3.5" fill="#7e7420" transform="rotate(-4 67.3 750.9)"/><ellipse cx="65.1" cy="670.2" rx="1.5" ry="3.3" fill="#ac8818" transform="rotate(-42 65.1 670.2)"/><ellipse cx="67.2" cy="644.4" rx="2.1" ry="4.7" fill="#3e3c14" transform="rotate(-45 67.2 644.4)"/><ellipse cx="72.1" cy="637.9" rx="2.8" ry="6.1" fill="#cfa41f" transform="rotate(13 72.1 637.9)"/><ellipse cx="97.6" cy="720.3" rx="2.9" ry="6.4" fill="#b08c1a" transform="rotate(34 97.6 720.3)"/><ellipse cx="39.0" cy="737.3" rx="2.5" ry="5.4" fill="#54501c" transform="rotate(-21 39.0 737.3)"/><ellipse cx="61.7" cy="693.7" rx="1.6" ry="3.5" fill="#ac8818" transform="rotate(9 61.7 693.7)"/><ellipse cx="61.9" cy="700.3" rx="2.1" ry="4.5" fill="#d8ae24" transform="rotate(25 61.9 700.3)"/><ellipse cx="62.0" cy="645.0" rx="1.5" ry="3.1" fill="#4a4416" transform="rotate(11 62.0 645.0)"/><ellipse cx="64.1" cy="671.5" rx="2.3" ry="5.0" fill="#d8ae24" transform="rotate(-30 64.1 671.5)"/><ellipse cx="89.6" cy="742.6" rx="1.6" ry="3.4" fill="#7a6c1c" transform="rotate(-1 89.6 742.6)"/><ellipse cx="75.3" cy="649.3" rx="1.4" ry="3.1" fill="#bc941a" transform="rotate(-40 75.3 649.3)"/><ellipse cx="92.1" cy="689.7" rx="2.8" ry="6.2" fill="#4a4416" transform="rotate(17 92.1 689.7)"/><ellipse cx="33.0" cy="737.6" rx="1.8" ry="3.9" fill="#4a4416" transform="rotate(-26 33.0 737.6)"/><ellipse cx="72.5" cy="634.4" rx="2.6" ry="5.6" fill="#bc941a" transform="rotate(34 72.5 634.4)"/><ellipse cx="59.2" cy="687.7" rx="1.8" ry="3.8" fill="#bc941a" transform="rotate(-19 59.2 687.7)"/><ellipse cx="79.5" cy="638.5" rx="2.3" ry="5.0" fill="#cfa41f" transform="rotate(-5 79.5 638.5)"/><ellipse cx="72.8" cy="700.3" rx="2.5" ry="5.5" fill="#a88416" transform="rotate(41 72.8 700.3)"/><ellipse cx="75.0" cy="664.8" rx="3.0" ry="6.4" fill="#3e3c14" transform="rotate(-38 75.0 664.8)"/><ellipse cx="83.6" cy="650.1" rx="2.8" ry="6.0" fill="#cfa41f" transform="rotate(31 83.6 650.1)"/><ellipse cx="78.0" cy="642.5" rx="2.1" ry="4.6" fill="#ac8818" transform="rotate(-45 78.0 642.5)"/><ellipse cx="56.1" cy="647.0" rx="2.4" ry="5.3" fill="#cca620" transform="rotate(-47 56.1 647.0)"/><ellipse cx="49.3" cy="724.4" rx="1.7" ry="3.8" fill="#ac8818" transform="rotate(-46 49.3 724.4)"/><ellipse cx="35.3" cy="740.0" rx="1.8" ry="3.8" fill="#ac8818" transform="rotate(-2 35.3 740.0)"/><ellipse cx="100.1" cy="733.3" rx="1.8" ry="4.0" fill="#5f6420" transform="rotate(14 100.1 733.3)"/><ellipse cx="57.4" cy="701.6" rx="1.9" ry="4.1" fill="#d8ae24" transform="rotate(-37 57.4 701.6)"/><ellipse cx="79.5" cy="647.4" rx="2.2" ry="4.8" fill="#cfa41f" transform="rotate(-13 79.5 647.4)"/><ellipse cx="43.1" cy="725.3" rx="2.0" ry="4.3" fill="#d8ae24" transform="rotate(-6 43.1 725.3)"/><ellipse cx="57.1" cy="646.9" rx="1.8" ry="4.0" fill="#ecc83e" transform="rotate(3 57.1 646.9)"/><ellipse cx="62.9" cy="668.8" rx="1.9" ry="4.0" fill="#cfa41f" transform="rotate(17 62.9 668.8)"/><ellipse cx="64.7" cy="646.4" rx="2.5" ry="5.5" fill="#e8c432" transform="rotate(7 64.7 646.4)"/><ellipse cx="68.8" cy="755.2" rx="2.9" ry="6.2" fill="#7e7420" transform="rotate(-40 68.8 755.2)"/><ellipse cx="90.9" cy="748.0" rx="1.5" ry="3.3" fill="#8a7a1c" transform="rotate(50 90.9 748.0)"/><ellipse cx="73.2" cy="662.1" rx="1.9" ry="4.1" fill="#ac8818" transform="rotate(1 73.2 662.1)"/><ellipse cx="74.8" cy="669.9" rx="1.9" ry="4.1" fill="#cfa41f" transform="rotate(-32 74.8 669.9)"/><ellipse cx="57.9" cy="662.7" rx="1.5" ry="3.3" fill="#54501c" transform="rotate(43 57.9 662.7)"/><ellipse cx="94.9" cy="709.6" rx="3.0" ry="6.4" fill="#a88416" transform="rotate(-24 94.9 709.6)"/><ellipse cx="75.9" cy="664.1" rx="2.2" ry="4.8" fill="#4a4416" transform="rotate(-23 75.9 664.1)"/><ellipse cx="43.2" cy="712.6" rx="2.8" ry="6.0" fill="#5a5218" transform="rotate(12 43.2 712.6)"/><ellipse cx="50.9" cy="721.1" rx="2.8" ry="6.1" fill="#bc941a" transform="rotate(4 50.9 721.1)"/><ellipse cx="61.5" cy="688.3" rx="2.9" ry="6.2" fill="#d8ae24" transform="rotate(42 61.5 688.3)"/><ellipse cx="78.0" cy="640.1" rx="3.0" ry="6.4" fill="#cfa41f" transform="rotate(45 78.0 640.1)"/><ellipse cx="61.5" cy="698.4" rx="2.8" ry="6.0" fill="#54501c" transform="rotate(-45 61.5 698.4)"/><ellipse cx="96.3" cy="675.6" rx="1.3" ry="2.9" fill="#a88416" transform="rotate(19 96.3 675.6)"/><ellipse cx="64.3" cy="646.1" rx="2.8" ry="6.1" fill="#ecc83e" transform="rotate(17 64.3 646.1)"/><ellipse cx="96.3" cy="683.1" rx="2.9" ry="6.2" fill="#b08c1a" transform="rotate(7 96.3 683.1)"/><ellipse cx="70.3" cy="669.2" rx="2.3" ry="5.0" fill="#bc941a" transform="rotate(-18 70.3 669.2)"/><ellipse cx="110.3" cy="711.7" rx="2.6" ry="5.5" fill="#8a7a1c" transform="rotate(3 110.3 711.7)"/><ellipse cx="95.7" cy="682.0" rx="2.8" ry="6.1" fill="#a88416" transform="rotate(-39 95.7 682.0)"/><ellipse cx="60.6" cy="738.4" rx="2.1" ry="4.6" fill="#b08c1a" transform="rotate(31 60.6 738.4)"/><ellipse cx="68.3" cy="726.0" rx="1.9" ry="4.1" fill="#a88416" transform="rotate(11 68.3 726.0)"/><ellipse cx="65.4" cy="675.9" rx="1.4" ry="2.9" fill="#ac8818" transform="rotate(-3 65.4 675.9)"/><ellipse cx="77.1" cy="739.8" rx="1.8" ry="3.9" fill="#b08c1a" transform="rotate(15 77.1 739.8)"/><ellipse cx="66.3" cy="667.4" rx="1.8" ry="3.9" fill="#d8ae24" transform="rotate(-23 66.3 667.4)"/><ellipse cx="69.2" cy="721.7" rx="3.0" ry="6.4" fill="#a88416" transform="rotate(-42 69.2 721.7)"/><ellipse cx="84.0" cy="647.3" rx="1.7" ry="3.7" fill="#5a5218" transform="rotate(-31 84.0 647.3)"/><ellipse cx="100.1" cy="691.8" rx="2.0" ry="4.3" fill="#a88416" transform="rotate(-39 100.1 691.8)"/><ellipse cx="97.9" cy="685.2" rx="1.4" ry="3.0" fill="#7e7420" transform="rotate(-6 97.9 685.2)"/><ellipse cx="73.1" cy="636.9" rx="2.9" ry="6.2" fill="#d8ae24" transform="rotate(35 73.1 636.9)"/><ellipse cx="114.4" cy="725.0" rx="2.5" ry="5.4" fill="#7a6c1c" transform="rotate(50 114.4 725.0)"/><ellipse cx="75.7" cy="658.1" rx="2.8" ry="6.0" fill="#54501c" transform="rotate(-13 75.7 658.1)"/><ellipse cx="69.8" cy="717.5" rx="2.0" ry="4.3" fill="#7e7420" transform="rotate(-37 69.8 717.5)"/><ellipse cx="73.7" cy="649.8" rx="2.5" ry="5.4" fill="#ac8818" transform="rotate(3 73.7 649.8)"/><ellipse cx="109.0" cy="725.3" rx="2.2" ry="4.8" fill="#5f6420" transform="rotate(50 109.0 725.3)"/><ellipse cx="55.6" cy="727.3" rx="2.1" ry="4.6" fill="#5a5218" transform="rotate(40 55.6 727.3)"/><ellipse cx="71.8" cy="664.9" rx="2.1" ry="4.5" fill="#cfa41f" transform="rotate(-21 71.8 664.9)"/><ellipse cx="54.1" cy="695.4" rx="1.7" ry="3.8" fill="#5a5218" transform="rotate(-26 54.1 695.4)"/><ellipse cx="77.7" cy="682.7" rx="2.8" ry="6.1" fill="#3e3c14" transform="rotate(2 77.7 682.7)"/><ellipse cx="69.1" cy="665.2" rx="1.8" ry="4.0" fill="#d8ae24" transform="rotate(-3 69.1 665.2)"/><ellipse cx="49.9" cy="706.9" rx="1.6" ry="3.5" fill="#d8ae24" transform="rotate(18 49.9 706.9)"/><ellipse cx="70.1" cy="649.9" rx="2.2" ry="4.8" fill="#3e3c14" transform="rotate(-10 70.1 649.9)"/><ellipse cx="68.4" cy="709.9" rx="1.5" ry="3.3" fill="#b08c1a" transform="rotate(-22 68.4 709.9)"/><ellipse cx="71.0" cy="642.1" rx="2.5" ry="5.4" fill="#e8c432" transform="rotate(-22 71.0 642.1)"/><ellipse cx="70.2" cy="702.4" rx="2.4" ry="5.3" fill="#ac8818" transform="rotate(-50 70.2 702.4)"/><ellipse cx="98.2" cy="729.1" rx="2.7" ry="5.9" fill="#5f6420" transform="rotate(-15 98.2 729.1)"/><ellipse cx="111.5" cy="717.3" rx="1.9" ry="4.1" fill="#4c5420" transform="rotate(-48 111.5 717.3)"/><ellipse cx="65.5" cy="646.3" rx="1.5" ry="3.3" fill="#deb428" transform="rotate(37 65.5 646.3)"/><ellipse cx="58.4" cy="703.8" rx="1.5" ry="3.2" fill="#ac8818" transform="rotate(-10 58.4 703.8)"/><ellipse cx="71.3" cy="662.5" rx="1.9" ry="4.2" fill="#54501c" transform="rotate(-3 71.3 662.5)"/><ellipse cx="79.3" cy="749.4" rx="1.7" ry="3.7" fill="#8a7a1c" transform="rotate(-49 79.3 749.4)"/><ellipse cx="57.5" cy="696.3" rx="2.9" ry="6.3" fill="#bc941a" transform="rotate(27 57.5 696.3)"/><ellipse cx="54.3" cy="748.6" rx="1.5" ry="3.2" fill="#7e7420" transform="rotate(22 54.3 748.6)"/><ellipse cx="96.3" cy="684.1" rx="1.8" ry="4.0" fill="#b08c1a" transform="rotate(20 96.3 684.1)"/><ellipse cx="73.1" cy="647.8" rx="1.5" ry="3.3" fill="#d8ae24" transform="rotate(-15 73.1 647.8)"/><ellipse cx="51.8" cy="700.2" rx="1.8" ry="3.8" fill="#d8ae24" transform="rotate(-34 51.8 700.2)"/><ellipse cx="46.6" cy="682.1" rx="1.9" ry="4.2" fill="#ecc83e" transform="rotate(19 46.6 682.1)"/><ellipse cx="92.5" cy="701.4" rx="2.2" ry="4.7" fill="#b08c1a" transform="rotate(7 92.5 701.4)"/><ellipse cx="40.5" cy="717.5" rx="2.9" ry="6.2" fill="#3e3c14" transform="rotate(11 40.5 717.5)"/><ellipse cx="98.1" cy="737.7" rx="1.9" ry="4.1" fill="#5f6420" transform="rotate(-31 98.1 737.7)"/><ellipse cx="60.6" cy="738.7" rx="2.1" ry="4.5" fill="#3e3c14" transform="rotate(-16 60.6 738.7)"/><ellipse cx="79.0" cy="668.4" rx="2.4" ry="5.2" fill="#cfa41f" transform="rotate(32 79.0 668.4)"/><ellipse cx="77.5" cy="647.7" rx="2.9" ry="6.3" fill="#4a4416" transform="rotate(49 77.5 647.7)"/><ellipse cx="81.1" cy="685.7" rx="1.8" ry="3.9" fill="#7e7420" transform="rotate(27 81.1 685.7)"/><ellipse cx="44.0" cy="689.6" rx="2.6" ry="5.7" fill="#e8c432" transform="rotate(-45 44.0 689.6)"/><ellipse cx="77.2" cy="736.5" rx="2.2" ry="4.8" fill="#b08c1a" transform="rotate(50 77.2 736.5)"/><ellipse cx="94.1" cy="755.8" rx="2.4" ry="5.2" fill="#5f6420" transform="rotate(29 94.1 755.8)"/><ellipse cx="72.6" cy="661.3" rx="1.9" ry="4.2" fill="#4a4416" transform="rotate(40 72.6 661.3)"/><ellipse cx="89.0" cy="670.7" rx="1.9" ry="4.1" fill="#a88416" transform="rotate(28 89.0 670.7)"/><ellipse cx="62.3" cy="686.1" rx="1.8" ry="3.9" fill="#d8ae24" transform="rotate(39 62.3 686.1)"/><ellipse cx="74.6" cy="661.1" rx="1.6" ry="3.4" fill="#cfa41f" transform="rotate(15 74.6 661.1)"/><ellipse cx="75.0" cy="652.8" rx="2.1" ry="4.6" fill="#cfa41f" transform="rotate(24 75.0 652.8)"/><ellipse cx="76.8" cy="633.7" rx="2.0" ry="4.3" fill="#bc941a" transform="rotate(0 76.8 633.7)"/><ellipse cx="34.4" cy="721.9" rx="1.9" ry="4.1" fill="#bc941a" transform="rotate(50 34.4 721.9)"/><ellipse cx="90.7" cy="716.8" rx="1.9" ry="4.2" fill="#98781a" transform="rotate(5 90.7 716.8)"/><ellipse cx="72.6" cy="686.8" rx="2.3" ry="4.9" fill="#bc941a" transform="rotate(-31 72.6 686.8)"/><ellipse cx="68.7" cy="632.4" rx="2.7" ry="5.8" fill="#deb428" transform="rotate(8 68.7 632.4)"/><ellipse cx="84.8" cy="728.2" rx="2.7" ry="5.8" fill="#98781a" transform="rotate(-31 84.8 728.2)"/><ellipse cx="89.9" cy="754.3" rx="2.9" ry="6.3" fill="#54501c" transform="rotate(31 89.9 754.3)"/><ellipse cx="95.7" cy="720.4" rx="1.7" ry="3.7" fill="#a88416" transform="rotate(19 95.7 720.4)"/><ellipse cx="111.0" cy="733.0" rx="2.8" ry="6.2" fill="#8a7a1c" transform="rotate(34 111.0 733.0)"/><ellipse cx="81.6" cy="661.3" rx="2.9" ry="6.3" fill="#bc941a" transform="rotate(-2 81.6 661.3)"/><ellipse cx="71.0" cy="705.2" rx="2.0" ry="4.4" fill="#98781a" transform="rotate(39 71.0 705.2)"/><ellipse cx="77.7" cy="694.9" rx="3.0" ry="6.5" fill="#54501c" transform="rotate(49 77.7 694.9)"/><ellipse cx="74.4" cy="689.9" rx="1.4" ry="3.0" fill="#4a4416" transform="rotate(32 74.4 689.9)"/><ellipse cx="31.9" cy="734.4" rx="2.2" ry="4.7" fill="#cfa41f" transform="rotate(-11 31.9 734.4)"/><ellipse cx="84.5" cy="690.1" rx="1.6" ry="3.5" fill="#5a5218" transform="rotate(48 84.5 690.1)"/><ellipse cx="66.3" cy="698.8" rx="2.2" ry="4.7" fill="#bc941a" transform="rotate(39 66.3 698.8)"/><ellipse cx="63.5" cy="681.1" rx="1.7" ry="3.6" fill="#ac8818" transform="rotate(-31 63.5 681.1)"/><ellipse cx="60.2" cy="663.8" rx="1.6" ry="3.5" fill="#e8c432" transform="rotate(43 60.2 663.8)"/><ellipse cx="93.4" cy="676.7" rx="1.8" ry="3.8" fill="#7e7420" transform="rotate(-15 93.4 676.7)"/><ellipse cx="33.6" cy="702.7" rx="2.9" ry="6.3" fill="#deb428" transform="rotate(-25 33.6 702.7)"/><ellipse cx="71.8" cy="639.8" rx="2.4" ry="5.1" fill="#bc941a" transform="rotate(23 71.8 639.8)"/><ellipse cx="68.8" cy="648.6" rx="2.5" ry="5.4" fill="#4a4416" transform="rotate(-31 68.8 648.6)"/><ellipse cx="31.7" cy="730.7" rx="2.6" ry="5.6" fill="#bc941a" transform="rotate(25 31.7 730.7)"/><ellipse cx="83.4" cy="706.7" rx="2.2" ry="4.8" fill="#7e7420" transform="rotate(-33 83.4 706.7)"/><ellipse cx="77.6" cy="667.2" rx="3.0" ry="6.5" fill="#bc941a" transform="rotate(-22 77.6 667.2)"/><ellipse cx="52.8" cy="668.7" rx="2.1" ry="4.7" fill="#ecc83e" transform="rotate(-24 52.8 668.7)"/><ellipse cx="28.0" cy="720.5" rx="2.7" ry="5.8" fill="#cfa41f" transform="rotate(28 28.0 720.5)"/><ellipse cx="66.8" cy="678.2" rx="2.4" ry="5.1" fill="#5a5218" transform="rotate(-30 66.8 678.2)"/><ellipse cx="108.4" cy="734.0" rx="2.4" ry="5.2" fill="#54501c" transform="rotate(31 108.4 734.0)"/><ellipse cx="88.8" cy="705.4" rx="2.2" ry="4.7" fill="#98781a" transform="rotate(-1 88.8 705.4)"/><ellipse cx="71.5" cy="714.8" rx="2.7" ry="5.8" fill="#a88416" transform="rotate(41 71.5 714.8)"/><ellipse cx="61.3" cy="646.2" rx="2.6" ry="5.6" fill="#cca620" transform="rotate(19 61.3 646.2)"/><ellipse cx="51.6" cy="708.8" rx="2.4" ry="5.2" fill="#bc941a" transform="rotate(2 51.6 708.8)"/><ellipse cx="86.6" cy="753.8" rx="2.0" ry="4.4" fill="#7a6c1c" transform="rotate(35 86.6 753.8)"/><ellipse cx="39.6" cy="736.4" rx="2.3" ry="4.9" fill="#cfa41f" transform="rotate(12 39.6 736.4)"/><ellipse cx="82.8" cy="658.1" rx="2.2" ry="4.8" fill="#bc941a" transform="rotate(-38 82.8 658.1)"/><ellipse cx="75.9" cy="640.7" rx="2.7" ry="5.9" fill="#bc941a" transform="rotate(-28 75.9 640.7)"/><ellipse cx="45.9" cy="706.5" rx="2.2" ry="4.7" fill="#bc941a" transform="rotate(-21 45.9 706.5)"/><ellipse cx="90.6" cy="676.6" rx="3.0" ry="6.4" fill="#a88416" transform="rotate(-7 90.6 676.6)"/><ellipse cx="67.0" cy="745.9" rx="2.7" ry="5.9" fill="#98781a" transform="rotate(-14 67.0 745.9)"/><ellipse cx="75.5" cy="690.5" rx="1.4" ry="3.1" fill="#d8ae24" transform="rotate(-39 75.5 690.5)"/><ellipse cx="86.9" cy="757.0" rx="2.7" ry="5.9" fill="#4c5420" transform="rotate(-16 86.9 757.0)"/><ellipse cx="67.9" cy="745.9" rx="2.9" ry="6.3" fill="#7e7420" transform="rotate(-48 67.9 745.9)"/><ellipse cx="75.4" cy="685.1" rx="1.9" ry="4.0" fill="#5a5218" transform="rotate(-42 75.4 685.1)"/><ellipse cx="92.3" cy="740.7" rx="2.6" ry="5.7" fill="#7a6c1c" transform="rotate(23 92.3 740.7)"/><ellipse cx="34.7" cy="704.8" rx="2.2" ry="4.8" fill="#5a5218" transform="rotate(-7 34.7 704.8)"/><ellipse cx="86.9" cy="749.3" rx="1.4" ry="3.0" fill="#7a6c1c" transform="rotate(12 86.9 749.3)"/>
<path d="M5.2 688.0 L1.4 691.4 L2.1 694.7 L-6.2 698.1 L0.0 701.5 L-6.7 704.8 L-4.5 708.2 L-11.9 711.5 L-8.9 714.9 L-16.5 718.3 L-8.3 721.6 L-17.9 725.0 L-11.2 728.4 L-24.5 731.7 L-15.2 735.1 L-23.9 738.5 L-16.9 741.8 L-25.8 745.2 L-15.2 748.5 L-21.1 751.9 L-9.0 755.3 L-16.6 758.6 L-7.6 762.0 L16.4 762.0 L26.7 758.6 L21.8 755.3 L35.7 751.9 L27.8 748.5 L38.7 745.2 L29.9 741.8 L39.3 738.5 L24.9 735.1 L36.0 731.7 L22.2 728.4 L29.7 725.0 L20.0 721.6 L29.3 718.3 L17.8 714.9 L24.3 711.5 L15.4 708.2 L18.7 704.8 L14.4 701.5 L16.1 698.1 L12.6 694.7 L13.6 691.4 L8.3 688.0 Z" fill="#8f7818" filter="url(#leaf)"/><ellipse cx="8.4" cy="712.2" rx="1.3" ry="2.9" fill="#ac8818" transform="rotate(-42 8.4 712.2)"/><ellipse cx="13.6" cy="712.8" rx="2.1" ry="4.6" fill="#7e7420" transform="rotate(10 13.6 712.8)"/><ellipse cx="-12.7" cy="739.7" rx="3.0" ry="6.4" fill="#5a5218" transform="rotate(1 -12.7 739.7)"/><ellipse cx="8.3" cy="692.9" rx="1.9" ry="4.2" fill="#cfa41f" transform="rotate(7 8.3 692.9)"/><ellipse cx="2.9" cy="694.9" rx="2.9" ry="6.3" fill="#deb428" transform="rotate(9 2.9 694.9)"/><ellipse cx="2.3" cy="715.1" rx="2.2" ry="4.8" fill="#cfa41f" transform="rotate(25 2.3 715.1)"/><ellipse cx="18.7" cy="742.7" rx="2.8" ry="6.0" fill="#4a4416" transform="rotate(-24 18.7 742.7)"/><ellipse cx="8.8" cy="714.9" rx="2.9" ry="6.2" fill="#cfa41f" transform="rotate(-11 8.8 714.9)"/><ellipse cx="-2.0" cy="738.4" rx="2.7" ry="5.8" fill="#ac8818" transform="rotate(11 -2.0 738.4)"/><ellipse cx="-1.3" cy="702.7" rx="3.0" ry="6.5" fill="#cca620" transform="rotate(-46 -1.3 702.7)"/><ellipse cx="7.9" cy="707.9" rx="2.7" ry="5.9" fill="#d8ae24" transform="rotate(-32 7.9 707.9)"/><ellipse cx="10.3" cy="695.5" rx="1.4" ry="3.0" fill="#bc941a" transform="rotate(-34 10.3 695.5)"/><ellipse cx="7.8" cy="758.5" rx="1.5" ry="3.3" fill="#4c5420" transform="rotate(-37 7.8 758.5)"/><ellipse cx="3.9" cy="703.2" rx="1.4" ry="3.1" fill="#deb428" transform="rotate(8 3.9 703.2)"/><ellipse cx="10.0" cy="754.5" rx="1.6" ry="3.5" fill="#7e7420" transform="rotate(38 10.0 754.5)"/><ellipse cx="5.1" cy="741.4" rx="1.8" ry="3.9" fill="#98781a" transform="rotate(-36 5.1 741.4)"/><ellipse cx="19.2" cy="717.4" rx="2.9" ry="6.4" fill="#7e7420" transform="rotate(-7 19.2 717.4)"/><ellipse cx="5.9" cy="704.0" rx="2.2" ry="4.7" fill="#ac8818" transform="rotate(-42 5.9 704.0)"/><ellipse cx="17.4" cy="745.2" rx="2.5" ry="5.4" fill="#8a7a1c" transform="rotate(-4 17.4 745.2)"/><ellipse cx="12.0" cy="729.8" rx="2.7" ry="5.9" fill="#b08c1a" transform="rotate(-7 12.0 729.8)"/><ellipse cx="9.2" cy="735.9" rx="1.3" ry="2.9" fill="#b08c1a" transform="rotate(-9 9.2 735.9)"/><ellipse cx="4.5" cy="737.4" rx="2.7" ry="5.8" fill="#b08c1a" transform="rotate(-6 4.5 737.4)"/><ellipse cx="2.6" cy="710.3" rx="2.9" ry="6.3" fill="#bc941a" transform="rotate(38 2.6 710.3)"/><ellipse cx="1.9" cy="722.3" rx="1.9" ry="4.1" fill="#3e3c14" transform="rotate(-25 1.9 722.3)"/><ellipse cx="23.1" cy="748.7" rx="2.1" ry="4.6" fill="#4c5420" transform="rotate(-29 23.1 748.7)"/><ellipse cx="22.7" cy="733.7" rx="2.2" ry="4.7" fill="#b08c1a" transform="rotate(29 22.7 733.7)"/><ellipse cx="19.0" cy="729.4" rx="1.8" ry="3.8" fill="#98781a" transform="rotate(-30 19.0 729.4)"/><ellipse cx="10.6" cy="731.6" rx="1.6" ry="3.5" fill="#98781a" transform="rotate(30 10.6 731.6)"/><ellipse cx="26.8" cy="740.6" rx="3.0" ry="6.4" fill="#5f6420" transform="rotate(-36 26.8 740.6)"/><ellipse cx="-1.7" cy="713.3" rx="1.6" ry="3.6" fill="#54501c" transform="rotate(-6 -1.7 713.3)"/><ellipse cx="9.0" cy="717.6" rx="2.3" ry="5.0" fill="#ac8818" transform="rotate(-50 9.0 717.6)"/><ellipse cx="17.7" cy="715.6" rx="2.8" ry="6.0" fill="#b08c1a" transform="rotate(-46 17.7 715.6)"/><ellipse cx="-1.0" cy="729.1" rx="1.8" ry="3.9" fill="#ac8818" transform="rotate(-5 -1.0 729.1)"/><ellipse cx="2.8" cy="747.4" rx="2.7" ry="5.8" fill="#b08c1a" transform="rotate(9 2.8 747.4)"/><ellipse cx="7.5" cy="701.4" rx="2.3" ry="4.9" fill="#bc941a" transform="rotate(27 7.5 701.4)"/><ellipse cx="9.9" cy="697.9" rx="2.4" ry="5.3" fill="#ac8818" transform="rotate(22 9.9 697.9)"/><ellipse cx="7.3" cy="754.1" rx="1.9" ry="4.0" fill="#7e7420" transform="rotate(4 7.3 754.1)"/><ellipse cx="-2.1" cy="721.1" rx="1.8" ry="3.9" fill="#d8ae24" transform="rotate(-1 -2.1 721.1)"/><ellipse cx="18.5" cy="757.1" rx="2.3" ry="5.0" fill="#8a7a1c" transform="rotate(13 18.5 757.1)"/><ellipse cx="-4.0" cy="708.8" rx="2.9" ry="6.3" fill="#ecc83e" transform="rotate(-32 -4.0 708.8)"/><ellipse cx="-6.0" cy="724.2" rx="2.4" ry="5.1" fill="#ac8818" transform="rotate(-45 -6.0 724.2)"/><ellipse cx="19.7" cy="744.9" rx="1.3" ry="2.9" fill="#8a7a1c" transform="rotate(-19 19.7 744.9)"/><ellipse cx="15.1" cy="755.4" rx="1.7" ry="3.8" fill="#5f6420" transform="rotate(42 15.1 755.4)"/><ellipse cx="0.3" cy="759.0" rx="2.3" ry="5.1" fill="#a88416" transform="rotate(-48 0.3 759.0)"/><ellipse cx="-2.5" cy="743.5" rx="2.2" ry="4.8" fill="#b08c1a" transform="rotate(43 -2.5 743.5)"/><ellipse cx="4.8" cy="727.8" rx="1.9" ry="4.2" fill="#bc941a" transform="rotate(-46 4.8 727.8)"/><ellipse cx="6.4" cy="691.9" rx="2.5" ry="5.4" fill="#3e3c14" transform="rotate(-49 6.4 691.9)"/><ellipse cx="15.1" cy="721.0" rx="2.3" ry="5.0" fill="#7e7420" transform="rotate(-1 15.1 721.0)"/><ellipse cx="11.8" cy="724.1" rx="2.5" ry="5.5" fill="#7e7420" transform="rotate(47 11.8 724.1)"/><ellipse cx="9.7" cy="696.2" rx="2.5" ry="5.4" fill="#ac8818" transform="rotate(32 9.7 696.2)"/><ellipse cx="23.2" cy="744.9" rx="1.6" ry="3.4" fill="#4c5420" transform="rotate(-8 23.2 744.9)"/><ellipse cx="3.4" cy="728.3" rx="2.2" ry="4.8" fill="#3e3c14" transform="rotate(-16 3.4 728.3)"/><ellipse cx="17.7" cy="747.5" rx="2.4" ry="5.3" fill="#54501c" transform="rotate(-42 17.7 747.5)"/><ellipse cx="11.4" cy="759.7" rx="1.4" ry="3.0" fill="#5f6420" transform="rotate(28 11.4 759.7)"/><ellipse cx="23.9" cy="735.7" rx="2.5" ry="5.5" fill="#5a5218" transform="rotate(40 23.9 735.7)"/><ellipse cx="-5.8" cy="754.2" rx="2.3" ry="5.1" fill="#98781a" transform="rotate(-42 -5.8 754.2)"/><ellipse cx="-11.6" cy="734.1" rx="1.5" ry="3.3" fill="#cfa41f" transform="rotate(-15 -11.6 734.1)"/><ellipse cx="6.8" cy="695.6" rx="2.6" ry="5.6" fill="#deb428" transform="rotate(-49 6.8 695.6)"/><ellipse cx="0.5" cy="721.1" rx="2.3" ry="5.0" fill="#ac8818" transform="rotate(-43 0.5 721.1)"/><ellipse cx="2.9" cy="701.1" rx="2.3" ry="4.9" fill="#ecc83e" transform="rotate(21 2.9 701.1)"/><ellipse cx="-3.8" cy="729.1" rx="1.4" ry="3.1" fill="#ac8818" transform="rotate(16 -3.8 729.1)"/><ellipse cx="14.9" cy="758.1" rx="2.8" ry="6.0" fill="#4c5420" transform="rotate(-28 14.9 758.1)"/><ellipse cx="-1.0" cy="700.6" rx="1.9" ry="4.1" fill="#e8c432" transform="rotate(-39 -1.0 700.6)"/>
<path d="M181.9 656.0 L172.2 660.7 L176.2 665.5 L168.1 670.2 L171.1 674.9 L162.0 679.6 L166.5 684.4 L157.1 689.1 L164.9 693.8 L150.7 698.5 L157.7 703.3 L145.7 708.0 L155.7 712.7 L141.0 717.5 L151.8 722.2 L135.4 726.9 L149.9 731.6 L136.5 736.4 L154.4 741.1 L142.8 745.8 L158.9 750.5 L149.7 755.3 L166.1 760.0 L198.4 760.0 L215.6 755.3 L207.3 750.5 L223.8 745.8 L212.4 741.1 L226.9 736.4 L216.1 731.6 L226.5 726.9 L209.3 722.2 L223.3 717.5 L209.4 712.7 L217.4 708.0 L202.5 703.3 L212.2 698.5 L201.0 693.8 L209.8 689.1 L196.8 684.4 L201.0 679.6 L193.8 674.9 L195.8 670.2 L190.1 665.5 L188.4 660.7 L185.7 656.0 Z" fill="#8f7818" filter="url(#leaf)"/><ellipse cx="195.4" cy="733.3" rx="2.1" ry="4.5" fill="#7e7420" transform="rotate(-15 195.4 733.3)"/><ellipse cx="182.0" cy="749.7" rx="2.7" ry="5.9" fill="#7e7420" transform="rotate(9 182.0 749.7)"/><ellipse cx="190.5" cy="694.8" rx="2.3" ry="4.9" fill="#bc941a" transform="rotate(-9 190.5 694.8)"/><ellipse cx="201.7" cy="739.1" rx="2.8" ry="6.1" fill="#4c5420" transform="rotate(-11 201.7 739.1)"/><ellipse cx="192.2" cy="690.2" rx="2.7" ry="5.9" fill="#d8ae24" transform="rotate(-11 192.2 690.2)"/><ellipse cx="181.3" cy="731.1" rx="1.9" ry="4.2" fill="#a88416" transform="rotate(50 181.3 731.1)"/><ellipse cx="195.2" cy="739.7" rx="2.8" ry="6.2" fill="#a88416" transform="rotate(-43 195.2 739.7)"/><ellipse cx="158.1" cy="716.2" rx="2.3" ry="5.0" fill="#cfa41f" transform="rotate(46 158.1 716.2)"/><ellipse cx="199.5" cy="711.2" rx="1.7" ry="3.8" fill="#a88416" transform="rotate(4 199.5 711.2)"/><ellipse cx="195.3" cy="747.1" rx="1.4" ry="3.1" fill="#5f6420" transform="rotate(36 195.3 747.1)"/><ellipse cx="177.3" cy="663.4" rx="1.4" ry="3.1" fill="#4a4416" transform="rotate(-3 177.3 663.4)"/><ellipse cx="191.6" cy="685.7" rx="1.6" ry="3.4" fill="#cfa41f" transform="rotate(-1 191.6 685.7)"/><ellipse cx="197.9" cy="717.6" rx="1.7" ry="3.8" fill="#a88416" transform="rotate(-6 197.9 717.6)"/><ellipse cx="188.0" cy="751.0" rx="2.6" ry="5.6" fill="#4c5420" transform="rotate(-47 188.0 751.0)"/><ellipse cx="183.8" cy="690.7" rx="2.3" ry="5.1" fill="#5a5218" transform="rotate(46 183.8 690.7)"/><ellipse cx="187.0" cy="699.6" rx="1.6" ry="3.4" fill="#cfa41f" transform="rotate(34 187.0 699.6)"/><ellipse cx="202.4" cy="727.0" rx="1.4" ry="2.9" fill="#98781a" transform="rotate(16 202.4 727.0)"/><ellipse cx="176.3" cy="717.2" rx="2.2" ry="4.7" fill="#5a5218" transform="rotate(-17 176.3 717.2)"/><ellipse cx="196.7" cy="686.3" rx="2.4" ry="5.2" fill="#98781a" transform="rotate(35 196.7 686.3)"/><ellipse cx="175.0" cy="666.6" rx="1.6" ry="3.4" fill="#3e3c14" transform="rotate(15 175.0 666.6)"/><ellipse cx="192.2" cy="748.9" rx="1.4" ry="3.0" fill="#4c5420" transform="rotate(-41 192.2 748.9)"/><ellipse cx="184.8" cy="685.2" rx="2.4" ry="5.1" fill="#ac8818" transform="rotate(-18 184.8 685.2)"/><ellipse cx="168.7" cy="726.7" rx="2.6" ry="5.6" fill="#54501c" transform="rotate(2 168.7 726.7)"/><ellipse cx="182.3" cy="676.5" rx="1.5" ry="3.2" fill="#4a4416" transform="rotate(-27 182.3 676.5)"/><ellipse cx="157.4" cy="733.0" rx="1.4" ry="2.9" fill="#d8ae24" transform="rotate(-11 157.4 733.0)"/><ellipse cx="176.0" cy="712.4" rx="2.5" ry="5.4" fill="#bc941a" transform="rotate(43 176.0 712.4)"/><ellipse cx="177.6" cy="738.3" rx="1.4" ry="2.9" fill="#7e7420" transform="rotate(17 177.6 738.3)"/><ellipse cx="204.5" cy="716.8" rx="2.4" ry="5.3" fill="#a88416" transform="rotate(16 204.5 716.8)"/><ellipse cx="165.2" cy="753.1" rx="1.9" ry="4.2" fill="#b08c1a" transform="rotate(-11 165.2 753.1)"/><ellipse cx="184.2" cy="663.0" rx="1.5" ry="3.2" fill="#cfa41f" transform="rotate(7 184.2 663.0)"/><ellipse cx="184.1" cy="666.9" rx="2.1" ry="4.5" fill="#cfa41f" transform="rotate(-50 184.1 666.9)"/><ellipse cx="177.8" cy="688.4" rx="2.9" ry="6.3" fill="#54501c" transform="rotate(-26 177.8 688.4)"/><ellipse cx="179.5" cy="672.3" rx="2.5" ry="5.5" fill="#5a5218" transform="rotate(0 179.5 672.3)"/><ellipse cx="169.2" cy="746.1" rx="1.5" ry="3.3" fill="#b08c1a" transform="rotate(32 169.2 746.1)"/><ellipse cx="170.3" cy="698.6" rx="1.5" ry="3.2" fill="#d8ae24" transform="rotate(49 170.3 698.6)"/><ellipse cx="184.9" cy="665.3" rx="1.8" ry="3.9" fill="#bc941a" transform="rotate(-3 184.9 665.3)"/><ellipse cx="182.8" cy="686.9" rx="2.1" ry="4.6" fill="#d8ae24" transform="rotate(12 182.8 686.9)"/><ellipse cx="170.4" cy="741.2" rx="1.7" ry="3.7" fill="#b08c1a" transform="rotate(20 170.4 741.2)"/><ellipse cx="189.7" cy="702.1" rx="2.9" ry="6.2" fill="#a88416" transform="rotate(-41 189.7 702.1)"/><ellipse cx="200.9" cy="695.3" rx="1.6" ry="3.4" fill="#a88416" transform="rotate(-39 200.9 695.3)"/><ellipse cx="191.0" cy="748.4" rx="2.7" ry="5.8" fill="#5a5218" transform="rotate(-1 191.0 748.4)"/><ellipse cx="186.9" cy="683.4" rx="2.5" ry="5.3" fill="#ac8818" transform="rotate(-36 186.9 683.4)"/><ellipse cx="193.3" cy="676.1" rx="2.9" ry="6.4" fill="#b08c1a" transform="rotate(16 193.3 676.1)"/><ellipse cx="182.4" cy="685.0" rx="1.6" ry="3.5" fill="#3e3c14" transform="rotate(1 182.4 685.0)"/><ellipse cx="174.4" cy="744.9" rx="2.6" ry="5.6" fill="#7e7420" transform="rotate(6 174.4 744.9)"/><ellipse cx="201.3" cy="730.0" rx="2.0" ry="4.3" fill="#7e7420" transform="rotate(15 201.3 730.0)"/><ellipse cx="178.7" cy="666.3" rx="1.7" ry="3.8" fill="#cca620" transform="rotate(40 178.7 666.3)"/><ellipse cx="173.9" cy="723.2" rx="2.2" ry="4.9" fill="#cfa41f" transform="rotate(47 173.9 723.2)"/><ellipse cx="195.2" cy="739.6" rx="2.2" ry="4.8" fill="#7e7420" transform="rotate(31 195.2 739.6)"/><ellipse cx="172.8" cy="748.7" rx="2.2" ry="4.8" fill="#7e7420" transform="rotate(33 172.8 748.7)"/><ellipse cx="171.9" cy="678.2" rx="2.0" ry="4.3" fill="#cca620" transform="rotate(-23 171.9 678.2)"/><ellipse cx="161.0" cy="745.8" rx="2.7" ry="5.8" fill="#bc941a" transform="rotate(-15 161.0 745.8)"/><ellipse cx="187.4" cy="732.4" rx="1.6" ry="3.6" fill="#98781a" transform="rotate(-49 187.4 732.4)"/><ellipse cx="178.4" cy="719.8" rx="1.7" ry="3.8" fill="#d8ae24" transform="rotate(41 178.4 719.8)"/><ellipse cx="194.6" cy="680.8" rx="1.4" ry="3.1" fill="#54501c" transform="rotate(18 194.6 680.8)"/><ellipse cx="191.0" cy="741.3" rx="2.6" ry="5.6" fill="#b08c1a" transform="rotate(8 191.0 741.3)"/><ellipse cx="182.1" cy="686.7" rx="1.4" ry="3.0" fill="#5a5218" transform="rotate(-28 182.1 686.7)"/><ellipse cx="209.2" cy="733.9" rx="3.0" ry="6.5" fill="#5f6420" transform="rotate(-44 209.2 733.9)"/><ellipse cx="179.2" cy="676.8" rx="2.1" ry="4.6" fill="#e8c432" transform="rotate(-14 179.2 676.8)"/><ellipse cx="206.2" cy="714.5" rx="1.9" ry="4.2" fill="#7e7420" transform="rotate(22 206.2 714.5)"/><ellipse cx="198.3" cy="703.6" rx="1.8" ry="4.0" fill="#7e7420" transform="rotate(38 198.3 703.6)"/><ellipse cx="203.0" cy="712.7" rx="1.4" ry="3.1" fill="#b08c1a" transform="rotate(-8 203.0 712.7)"/><ellipse cx="199.1" cy="723.0" rx="2.4" ry="5.2" fill="#a88416" transform="rotate(15 199.1 723.0)"/><ellipse cx="175.8" cy="721.8" rx="2.2" ry="4.8" fill="#cfa41f" transform="rotate(-11 175.8 721.8)"/><ellipse cx="188.1" cy="665.1" rx="2.3" ry="4.9" fill="#cfa41f" transform="rotate(-36 188.1 665.1)"/><ellipse cx="188.3" cy="671.9" rx="2.0" ry="4.2" fill="#ac8818" transform="rotate(-5 188.3 671.9)"/><ellipse cx="181.3" cy="668.6" rx="1.6" ry="3.5" fill="#ecc83e" transform="rotate(9 181.3 668.6)"/><ellipse cx="203.7" cy="746.8" rx="2.1" ry="4.5" fill="#8a7a1c" transform="rotate(-9 203.7 746.8)"/><ellipse cx="191.1" cy="676.4" rx="2.1" ry="4.6" fill="#ac8818" transform="rotate(-27 191.1 676.4)"/><ellipse cx="193.2" cy="695.3" rx="1.7" ry="3.7" fill="#7e7420" transform="rotate(1 193.2 695.3)"/><ellipse cx="196.8" cy="738.6" rx="1.8" ry="3.9" fill="#8a7a1c" transform="rotate(45 196.8 738.6)"/><ellipse cx="190.8" cy="699.4" rx="2.5" ry="5.4" fill="#b08c1a" transform="rotate(18 190.8 699.4)"/><ellipse cx="191.6" cy="720.8" rx="1.9" ry="4.2" fill="#98781a" transform="rotate(-17 191.6 720.8)"/><ellipse cx="175.5" cy="752.8" rx="2.1" ry="4.6" fill="#98781a" transform="rotate(-10 175.5 752.8)"/><ellipse cx="165.6" cy="753.1" rx="1.4" ry="3.0" fill="#b08c1a" transform="rotate(-41 165.6 753.1)"/><ellipse cx="200.8" cy="749.0" rx="2.6" ry="5.6" fill="#8a7a1c" transform="rotate(-20 200.8 749.0)"/><ellipse cx="187.5" cy="740.1" rx="2.2" ry="4.8" fill="#98781a" transform="rotate(-4 187.5 740.1)"/><ellipse cx="197.0" cy="691.5" rx="1.5" ry="3.2" fill="#3e3c14" transform="rotate(-8 197.0 691.5)"/><ellipse cx="179.6" cy="685.2" rx="1.7" ry="3.8" fill="#bc941a" transform="rotate(40 179.6 685.2)"/><ellipse cx="185.3" cy="684.2" rx="1.9" ry="4.1" fill="#cfa41f" transform="rotate(-32 185.3 684.2)"/><ellipse cx="171.1" cy="678.2" rx="2.1" ry="4.5" fill="#ecc83e" transform="rotate(16 171.1 678.2)"/><ellipse cx="161.6" cy="716.4" rx="2.4" ry="5.2" fill="#d8ae24" transform="rotate(-21 161.6 716.4)"/><ellipse cx="177.8" cy="756.6" rx="2.1" ry="4.6" fill="#b08c1a" transform="rotate(19 177.8 756.6)"/><ellipse cx="187.5" cy="741.3" rx="2.3" ry="5.0" fill="#7e7420" transform="rotate(1 187.5 741.3)"/><ellipse cx="179.4" cy="741.6" rx="2.0" ry="4.4" fill="#a88416" transform="rotate(-37 179.4 741.6)"/><ellipse cx="186.1" cy="704.4" rx="1.5" ry="3.3" fill="#bc941a" transform="rotate(-41 186.1 704.4)"/><ellipse cx="180.3" cy="698.8" rx="2.5" ry="5.4" fill="#ac8818" transform="rotate(-22 180.3 698.8)"/><ellipse cx="173.3" cy="677.8" rx="2.4" ry="5.3" fill="#54501c" transform="rotate(-44 173.3 677.8)"/><ellipse cx="180.6" cy="743.3" rx="1.4" ry="3.1" fill="#4a4416" transform="rotate(-33 180.6 743.3)"/><ellipse cx="184.6" cy="727.8" rx="1.4" ry="3.0" fill="#a88416" transform="rotate(16 184.6 727.8)"/><ellipse cx="183.0" cy="693.5" rx="1.7" ry="3.7" fill="#cfa41f" transform="rotate(-34 183.0 693.5)"/><ellipse cx="169.2" cy="712.9" rx="2.1" ry="4.6" fill="#bc941a" transform="rotate(30 169.2 712.9)"/><ellipse cx="186.9" cy="697.5" rx="2.8" ry="6.0" fill="#bc941a" transform="rotate(15 186.9 697.5)"/><ellipse cx="188.1" cy="671.3" rx="2.4" ry="5.1" fill="#d8ae24" transform="rotate(-25 188.1 671.3)"/><ellipse cx="179.7" cy="689.7" rx="2.0" ry="4.4" fill="#ac8818" transform="rotate(-38 179.7 689.7)"/><ellipse cx="180.6" cy="715.0" rx="1.8" ry="3.9" fill="#ac8818" transform="rotate(-21 180.6 715.0)"/><ellipse cx="166.6" cy="701.5" rx="2.2" ry="4.9" fill="#3e3c14" transform="rotate(-23 166.6 701.5)"/><ellipse cx="184.1" cy="679.8" rx="2.4" ry="5.2" fill="#ac8818" transform="rotate(39 184.1 679.8)"/><ellipse cx="184.5" cy="730.3" rx="2.6" ry="5.5" fill="#98781a" transform="rotate(-32 184.5 730.3)"/><ellipse cx="156.8" cy="718.4" rx="1.6" ry="3.6" fill="#3e3c14" transform="rotate(47 156.8 718.4)"/><ellipse cx="203.4" cy="752.7" rx="2.8" ry="6.1" fill="#8a7a1c" transform="rotate(-24 203.4 752.7)"/><ellipse cx="177.9" cy="676.3" rx="2.7" ry="5.8" fill="#e8c432" transform="rotate(2 177.9 676.3)"/><ellipse cx="190.6" cy="747.1" rx="1.4" ry="3.0" fill="#7a6c1c" transform="rotate(31 190.6 747.1)"/><ellipse cx="168.0" cy="728.4" rx="2.8" ry="6.2" fill="#ac8818" transform="rotate(-17 168.0 728.4)"/><ellipse cx="176.6" cy="712.7" rx="2.2" ry="4.8" fill="#bc941a" transform="rotate(5 176.6 712.7)"/><ellipse cx="193.9" cy="735.1" rx="2.6" ry="5.7" fill="#7e7420" transform="rotate(-6 193.9 735.1)"/><ellipse cx="186.5" cy="697.8" rx="2.4" ry="5.1" fill="#d8ae24" transform="rotate(-26 186.5 697.8)"/><ellipse cx="203.8" cy="733.5" rx="1.9" ry="4.1" fill="#5a5218" transform="rotate(27 203.8 733.5)"/><ellipse cx="180.4" cy="721.1" rx="2.6" ry="5.7" fill="#98781a" transform="rotate(37 180.4 721.1)"/><ellipse cx="199.4" cy="750.6" rx="2.2" ry="4.8" fill="#7a6c1c" transform="rotate(-49 199.4 750.6)"/><ellipse cx="153.5" cy="736.7" rx="3.0" ry="6.5" fill="#5a5218" transform="rotate(42 153.5 736.7)"/><ellipse cx="201.0" cy="724.8" rx="1.4" ry="3.1" fill="#a88416" transform="rotate(-14 201.0 724.8)"/><ellipse cx="162.4" cy="716.7" rx="1.6" ry="3.4" fill="#d8ae24" transform="rotate(42 162.4 716.7)"/><ellipse cx="183.4" cy="667.4" rx="2.9" ry="6.2" fill="#d8ae24" transform="rotate(11 183.4 667.4)"/><ellipse cx="206.8" cy="737.8" rx="1.6" ry="3.4" fill="#5f6420" transform="rotate(-25 206.8 737.8)"/><ellipse cx="205.6" cy="720.4" rx="1.9" ry="4.1" fill="#7e7420" transform="rotate(17 205.6 720.4)"/><ellipse cx="188.0" cy="700.1" rx="2.3" ry="4.9" fill="#bc941a" transform="rotate(-33 188.0 700.1)"/><ellipse cx="192.7" cy="751.4" rx="2.7" ry="5.9" fill="#54501c" transform="rotate(0 192.7 751.4)"/><ellipse cx="200.8" cy="699.0" rx="1.8" ry="3.9" fill="#a88416" transform="rotate(18 200.8 699.0)"/><ellipse cx="201.2" cy="711.4" rx="2.3" ry="5.1" fill="#a88416" transform="rotate(-44 201.2 711.4)"/><ellipse cx="179.2" cy="698.3" rx="1.7" ry="3.7" fill="#ac8818" transform="rotate(15 179.2 698.3)"/><ellipse cx="199.0" cy="695.8" rx="2.1" ry="4.7" fill="#54501c" transform="rotate(44 199.0 695.8)"/><ellipse cx="168.5" cy="728.4" rx="1.4" ry="3.0" fill="#3e3c14" transform="rotate(-24 168.5 728.4)"/><ellipse cx="183.3" cy="692.0" rx="2.4" ry="5.1" fill="#cfa41f" transform="rotate(32 183.3 692.0)"/><ellipse cx="160.6" cy="714.6" rx="2.4" ry="5.3" fill="#bc941a" transform="rotate(-46 160.6 714.6)"/><ellipse cx="187.6" cy="690.9" rx="2.1" ry="4.6" fill="#ac8818" transform="rotate(47 187.6 690.9)"/><ellipse cx="197.6" cy="693.7" rx="2.3" ry="5.1" fill="#5a5218" transform="rotate(-4 197.6 693.7)"/><ellipse cx="208.5" cy="737.3" rx="1.8" ry="3.9" fill="#8a7a1c" transform="rotate(15 208.5 737.3)"/><ellipse cx="162.9" cy="718.6" rx="1.4" ry="3.0" fill="#cfa41f" transform="rotate(-6 162.9 718.6)"/><ellipse cx="211.6" cy="725.5" rx="2.5" ry="5.5" fill="#7a6c1c" transform="rotate(38 211.6 725.5)"/>
<path d="M284.5 650.0 L277.8 655.2 L277.3 660.4 L271.7 665.5 L274.8 670.7 L262.8 675.9 L267.6 681.1 L254.6 686.3 L265.6 691.5 L250.4 696.6 L259.1 701.8 L243.7 707.0 L257.0 712.2 L237.0 717.4 L251.3 722.5 L230.4 727.7 L249.3 732.9 L230.4 738.1 L252.9 743.3 L239.3 748.5 L257.7 753.6 L248.8 758.8 L264.4 764.0 L309.5 764.0 L327.3 758.8 L318.0 753.6 L339.6 748.5 L325.0 743.3 L345.0 738.1 L329.9 732.9 L343.8 727.7 L323.4 722.5 L340.1 717.4 L318.8 712.2 L334.6 707.0 L316.7 701.8 L325.6 696.6 L312.9 691.5 L321.9 686.3 L305.5 681.1 L312.4 675.9 L301.1 670.7 L307.2 665.5 L296.6 660.4 L296.5 655.2 L288.8 650.0 Z" fill="#8f7818" filter="url(#leaf)"/><ellipse cx="254.2" cy="740.9" rx="1.4" ry="3.0" fill="#ac8818" transform="rotate(16 254.2 740.9)"/><ellipse cx="286.2" cy="711.8" rx="1.9" ry="4.1" fill="#bc941a" transform="rotate(-42 286.2 711.8)"/><ellipse cx="272.3" cy="699.0" rx="2.4" ry="5.2" fill="#ac8818" transform="rotate(5 272.3 699.0)"/><ellipse cx="273.9" cy="734.0" rx="2.3" ry="4.9" fill="#a88416" transform="rotate(-43 273.9 734.0)"/><ellipse cx="270.7" cy="730.0" rx="2.3" ry="5.0" fill="#cfa41f" transform="rotate(-8 270.7 730.0)"/><ellipse cx="275.6" cy="753.7" rx="1.4" ry="3.0" fill="#a88416" transform="rotate(-14 275.6 753.7)"/><ellipse cx="324.4" cy="732.8" rx="1.4" ry="2.9" fill="#5f6420" transform="rotate(49 324.4 732.8)"/><ellipse cx="314.4" cy="724.1" rx="2.8" ry="6.0" fill="#a88416" transform="rotate(-13 314.4 724.1)"/><ellipse cx="315.6" cy="720.5" rx="1.8" ry="3.9" fill="#98781a" transform="rotate(-8 315.6 720.5)"/><ellipse cx="278.9" cy="715.8" rx="2.1" ry="4.5" fill="#ac8818" transform="rotate(-13 278.9 715.8)"/><ellipse cx="284.0" cy="715.6" rx="1.7" ry="3.6" fill="#cfa41f" transform="rotate(-43 284.0 715.6)"/><ellipse cx="292.6" cy="662.2" rx="2.3" ry="5.0" fill="#cfa41f" transform="rotate(19 292.6 662.2)"/><ellipse cx="273.1" cy="707.2" rx="3.0" ry="6.5" fill="#5a5218" transform="rotate(49 273.1 707.2)"/><ellipse cx="295.5" cy="760.3" rx="1.7" ry="3.6" fill="#4c5420" transform="rotate(2 295.5 760.3)"/><ellipse cx="271.3" cy="707.3" rx="2.1" ry="4.5" fill="#d8ae24" transform="rotate(-23 271.3 707.3)"/><ellipse cx="259.8" cy="708.0" rx="1.7" ry="3.8" fill="#deb428" transform="rotate(48 259.8 708.0)"/><ellipse cx="301.4" cy="680.0" rx="1.6" ry="3.4" fill="#5a5218" transform="rotate(22 301.4 680.0)"/><ellipse cx="289.8" cy="668.0" rx="2.9" ry="6.4" fill="#cfa41f" transform="rotate(13 289.8 668.0)"/><ellipse cx="284.5" cy="696.3" rx="2.9" ry="6.2" fill="#bc941a" transform="rotate(-7 284.5 696.3)"/><ellipse cx="286.8" cy="686.8" rx="2.8" ry="6.1" fill="#d8ae24" transform="rotate(17 286.8 686.8)"/><ellipse cx="298.5" cy="678.3" rx="2.7" ry="5.8" fill="#d8ae24" transform="rotate(13 298.5 678.3)"/><ellipse cx="297.8" cy="663.5" rx="2.9" ry="6.4" fill="#cfa41f" transform="rotate(0 297.8 663.5)"/><ellipse cx="264.1" cy="750.0" rx="2.9" ry="6.4" fill="#cfa41f" transform="rotate(-29 264.1 750.0)"/><ellipse cx="285.3" cy="727.8" rx="2.1" ry="4.6" fill="#7e7420" transform="rotate(-23 285.3 727.8)"/><ellipse cx="266.3" cy="739.4" rx="1.6" ry="3.4" fill="#ac8818" transform="rotate(-36 266.3 739.4)"/><ellipse cx="301.8" cy="697.2" rx="2.0" ry="4.2" fill="#a88416" transform="rotate(-25 301.8 697.2)"/><ellipse cx="291.2" cy="672.7" rx="2.7" ry="5.8" fill="#d8ae24" transform="rotate(17 291.2 672.7)"/><ellipse cx="264.8" cy="701.8" rx="2.5" ry="5.4" fill="#5a5218" transform="rotate(27 264.8 701.8)"/><ellipse cx="252.6" cy="736.9" rx="1.5" ry="3.2" fill="#cfa41f" transform="rotate(-12 252.6 736.9)"/><ellipse cx="311.4" cy="743.6" rx="1.5" ry="3.2" fill="#4c5420" transform="rotate(-24 311.4 743.6)"/><ellipse cx="273.6" cy="738.3" rx="1.7" ry="3.7" fill="#7e7420" transform="rotate(-38 273.6 738.3)"/><ellipse cx="296.8" cy="663.8" rx="2.7" ry="5.8" fill="#d8ae24" transform="rotate(3 296.8 663.8)"/><ellipse cx="307.2" cy="745.7" rx="1.4" ry="3.1" fill="#5f6420" transform="rotate(31 307.2 745.7)"/><ellipse cx="302.4" cy="687.4" rx="2.0" ry="4.4" fill="#98781a" transform="rotate(-3 302.4 687.4)"/><ellipse cx="266.2" cy="747.4" rx="1.6" ry="3.4" fill="#b08c1a" transform="rotate(-17 266.2 747.4)"/><ellipse cx="313.8" cy="712.5" rx="2.5" ry="5.4" fill="#5a5218" transform="rotate(-35 313.8 712.5)"/><ellipse cx="287.1" cy="712.9" rx="2.5" ry="5.5" fill="#cfa41f" transform="rotate(16 287.1 712.9)"/><ellipse cx="301.1" cy="681.4" rx="1.9" ry="4.2" fill="#cfa41f" transform="rotate(36 301.1 681.4)"/><ellipse cx="295.5" cy="661.3" rx="2.2" ry="4.8" fill="#ac8818" transform="rotate(14 295.5 661.3)"/><ellipse cx="296.6" cy="738.2" rx="2.1" ry="4.5" fill="#5a5218" transform="rotate(34 296.6 738.2)"/><ellipse cx="284.9" cy="691.4" rx="2.3" ry="5.1" fill="#bc941a" transform="rotate(-14 284.9 691.4)"/><ellipse cx="279.8" cy="750.3" rx="2.3" ry="5.0" fill="#a88416" transform="rotate(-41 279.8 750.3)"/><ellipse cx="310.6" cy="697.9" rx="1.6" ry="3.5" fill="#b08c1a" transform="rotate(-28 310.6 697.9)"/><ellipse cx="267.6" cy="687.2" rx="1.4" ry="2.9" fill="#e8c432" transform="rotate(-5 267.6 687.2)"/><ellipse cx="321.8" cy="740.4" rx="1.6" ry="3.4" fill="#4c5420" transform="rotate(34 321.8 740.4)"/><ellipse cx="317.1" cy="715.9" rx="2.6" ry="5.6" fill="#a88416" transform="rotate(-28 317.1 715.9)"/><ellipse cx="300.8" cy="724.0" rx="2.6" ry="5.6" fill="#b08c1a" transform="rotate(38 300.8 724.0)"/><ellipse cx="293.2" cy="698.3" rx="2.8" ry="6.1" fill="#ac8818" transform="rotate(-3 293.2 698.3)"/><ellipse cx="281.7" cy="679.9" rx="2.4" ry="5.1" fill="#cca620" transform="rotate(14 281.7 679.9)"/><ellipse cx="304.4" cy="697.7" rx="1.8" ry="3.9" fill="#a88416" transform="rotate(-18 304.4 697.7)"/><ellipse cx="289.3" cy="675.0" rx="2.5" ry="5.4" fill="#ac8818" transform="rotate(1 289.3 675.0)"/><ellipse cx="295.0" cy="755.4" rx="1.6" ry="3.4" fill="#5a5218" transform="rotate(27 295.0 755.4)"/><ellipse cx="318.9" cy="739.2" rx="2.6" ry="5.6" fill="#4c5420" transform="rotate(27 318.9 739.2)"/><ellipse cx="261.0" cy="737.3" rx="1.7" ry="3.7" fill="#cfa41f" transform="rotate(-30 261.0 737.3)"/><ellipse cx="292.2" cy="697.4" rx="2.4" ry="5.1" fill="#ac8818" transform="rotate(-48 292.2 697.4)"/><ellipse cx="266.6" cy="710.7" rx="1.5" ry="3.2" fill="#5a5218" transform="rotate(-40 266.6 710.7)"/><ellipse cx="276.7" cy="668.5" rx="3.0" ry="6.5" fill="#deb428" transform="rotate(43 276.7 668.5)"/><ellipse cx="285.6" cy="671.3" rx="1.5" ry="3.3" fill="#e8c432" transform="rotate(21 285.6 671.3)"/><ellipse cx="263.9" cy="693.9" rx="2.8" ry="6.1" fill="#54501c" transform="rotate(-31 263.9 693.9)"/><ellipse cx="281.0" cy="678.3" rx="2.2" ry="4.7" fill="#deb428" transform="rotate(-18 281.0 678.3)"/><ellipse cx="290.3" cy="709.7" rx="1.8" ry="4.0" fill="#bc941a" transform="rotate(-1 290.3 709.7)"/><ellipse cx="297.4" cy="662.2" rx="1.8" ry="3.9" fill="#ac8818" transform="rotate(-31 297.4 662.2)"/><ellipse cx="279.5" cy="664.7" rx="2.3" ry="5.1" fill="#3e3c14" transform="rotate(20 279.5 664.7)"/><ellipse cx="293.5" cy="656.6" rx="2.2" ry="4.8" fill="#d8ae24" transform="rotate(43 293.5 656.6)"/><ellipse cx="320.6" cy="729.8" rx="2.9" ry="6.3" fill="#5f6420" transform="rotate(17 320.6 729.8)"/><ellipse cx="261.4" cy="717.3" rx="2.4" ry="5.1" fill="#ac8818" transform="rotate(32 261.4 717.3)"/><ellipse cx="281.8" cy="742.9" rx="2.6" ry="5.5" fill="#98781a" transform="rotate(-18 281.8 742.9)"/><ellipse cx="308.2" cy="716.4" rx="2.3" ry="5.0" fill="#7e7420" transform="rotate(30 308.2 716.4)"/><ellipse cx="310.1" cy="743.1" rx="1.5" ry="3.2" fill="#8a7a1c" transform="rotate(-37 310.1 743.1)"/><ellipse cx="302.6" cy="724.7" rx="2.3" ry="5.1" fill="#b08c1a" transform="rotate(-40 302.6 724.7)"/><ellipse cx="273.8" cy="674.3" rx="2.2" ry="4.7" fill="#deb428" transform="rotate(-46 273.8 674.3)"/><ellipse cx="273.7" cy="676.8" rx="2.6" ry="5.7" fill="#ecc83e" transform="rotate(-36 273.7 676.8)"/><ellipse cx="311.7" cy="708.9" rx="2.7" ry="5.9" fill="#a88416" transform="rotate(-22 311.7 708.9)"/><ellipse cx="296.6" cy="721.1" rx="1.4" ry="2.9" fill="#a88416" transform="rotate(-49 296.6 721.1)"/><ellipse cx="267.3" cy="705.8" rx="1.9" ry="4.2" fill="#ac8818" transform="rotate(-12 267.3 705.8)"/><ellipse cx="297.2" cy="745.7" rx="2.0" ry="4.3" fill="#7e7420" transform="rotate(-42 297.2 745.7)"/><ellipse cx="316.4" cy="734.8" rx="1.8" ry="3.9" fill="#5f6420" transform="rotate(40 316.4 734.8)"/><ellipse cx="274.2" cy="729.5" rx="1.7" ry="3.6" fill="#d8ae24" transform="rotate(-15 274.2 729.5)"/><ellipse cx="306.6" cy="690.5" rx="2.9" ry="6.3" fill="#7e7420" transform="rotate(-9 306.6 690.5)"/><ellipse cx="265.2" cy="734.4" rx="1.8" ry="3.9" fill="#54501c" transform="rotate(-17 265.2 734.4)"/><ellipse cx="300.2" cy="719.6" rx="2.4" ry="5.2" fill="#b08c1a" transform="rotate(-39 300.2 719.6)"/><ellipse cx="304.7" cy="753.8" rx="2.4" ry="5.1" fill="#8a7a1c" transform="rotate(35 304.7 753.8)"/><ellipse cx="293.0" cy="678.4" rx="2.6" ry="5.6" fill="#cfa41f" transform="rotate(8 293.0 678.4)"/><ellipse cx="268.4" cy="715.5" rx="1.5" ry="3.2" fill="#cfa41f" transform="rotate(-36 268.4 715.5)"/><ellipse cx="274.1" cy="739.3" rx="2.8" ry="6.0" fill="#98781a" transform="rotate(45 274.1 739.3)"/><ellipse cx="295.3" cy="663.6" rx="1.6" ry="3.5" fill="#cfa41f" transform="rotate(46 295.3 663.6)"/><ellipse cx="263.3" cy="736.1" rx="1.7" ry="3.6" fill="#5a5218" transform="rotate(30 263.3 736.1)"/><ellipse cx="309.9" cy="690.1" rx="2.3" ry="5.1" fill="#98781a" transform="rotate(-29 309.9 690.1)"/><ellipse cx="252.7" cy="734.9" rx="1.4" ry="3.1" fill="#cfa41f" transform="rotate(36 252.7 734.9)"/><ellipse cx="301.0" cy="750.5" rx="2.4" ry="5.3" fill="#7a6c1c" transform="rotate(-25 301.0 750.5)"/><ellipse cx="279.9" cy="739.4" rx="2.3" ry="5.0" fill="#b08c1a" transform="rotate(-4 279.9 739.4)"/><ellipse cx="282.9" cy="700.8" rx="1.4" ry="3.0" fill="#bc941a" transform="rotate(-31 282.9 700.8)"/><ellipse cx="278.3" cy="693.3" rx="1.9" ry="4.2" fill="#ac8818" transform="rotate(-1 278.3 693.3)"/><ellipse cx="298.1" cy="693.8" rx="2.9" ry="6.3" fill="#ac8818" transform="rotate(-27 298.1 693.8)"/><ellipse cx="273.0" cy="758.6" rx="1.4" ry="3.0" fill="#b08c1a" transform="rotate(19 273.0 758.6)"/><ellipse cx="260.5" cy="707.9" rx="1.8" ry="4.0" fill="#cca620" transform="rotate(-30 260.5 707.9)"/><ellipse cx="284.6" cy="670.3" rx="2.1" ry="4.5" fill="#cca620" transform="rotate(39 284.6 670.3)"/><ellipse cx="275.2" cy="670.0" rx="2.6" ry="5.7" fill="#cca620" transform="rotate(-23 275.2 670.0)"/><ellipse cx="282.9" cy="667.8" rx="2.3" ry="4.9" fill="#cca620" transform="rotate(-30 282.9 667.8)"/><ellipse cx="289.4" cy="757.8" rx="1.6" ry="3.5" fill="#b08c1a" transform="rotate(26 289.4 757.8)"/><ellipse cx="290.4" cy="657.8" rx="2.0" ry="4.3" fill="#bc941a" transform="rotate(29 290.4 657.8)"/><ellipse cx="282.5" cy="660.2" rx="1.8" ry="3.9" fill="#ecc83e" transform="rotate(19 282.5 660.2)"/><ellipse cx="264.4" cy="722.2" rx="1.9" ry="4.1" fill="#ac8818" transform="rotate(-17 264.4 722.2)"/><ellipse cx="319.8" cy="718.3" rx="1.4" ry="3.0" fill="#3e3c14" transform="rotate(13 319.8 718.3)"/><ellipse cx="266.0" cy="705.1" rx="2.8" ry="6.1" fill="#deb428" transform="rotate(-32 266.0 705.1)"/><ellipse cx="264.7" cy="713.5" rx="2.7" ry="5.9" fill="#ac8818" transform="rotate(-40 264.7 713.5)"/><ellipse cx="252.8" cy="730.1" rx="2.7" ry="5.9" fill="#3e3c14" transform="rotate(-17 252.8 730.1)"/><ellipse cx="273.5" cy="721.2" rx="2.8" ry="6.1" fill="#d8ae24" transform="rotate(47 273.5 721.2)"/><ellipse cx="295.9" cy="685.3" rx="2.9" ry="6.4" fill="#ac8818" transform="rotate(3 295.9 685.3)"/><ellipse cx="285.3" cy="660.4" rx="2.3" ry="5.1" fill="#ecc83e" transform="rotate(-41 285.3 660.4)"/><ellipse cx="293.9" cy="676.7" rx="2.7" ry="5.8" fill="#cfa41f" transform="rotate(-14 293.9 676.7)"/><ellipse cx="293.9" cy="676.6" rx="1.6" ry="3.6" fill="#cfa41f" transform="rotate(-39 293.9 676.6)"/><ellipse cx="281.2" cy="656.8" rx="1.8" ry="3.9" fill="#cca620" transform="rotate(-42 281.2 656.8)"/><ellipse cx="291.2" cy="665.4" rx="2.4" ry="5.3" fill="#cfa41f" transform="rotate(38 291.2 665.4)"/><ellipse cx="281.0" cy="662.2" rx="2.9" ry="6.4" fill="#ecc83e" transform="rotate(15 281.0 662.2)"/><ellipse cx="277.7" cy="691.3" rx="2.3" ry="5.0" fill="#4a4416" transform="rotate(27 277.7 691.3)"/><ellipse cx="268.7" cy="755.9" rx="2.6" ry="5.7" fill="#7e7420" transform="rotate(49 268.7 755.9)"/><ellipse cx="281.9" cy="687.6" rx="2.6" ry="5.6" fill="#d8ae24" transform="rotate(-19 281.9 687.6)"/><ellipse cx="285.6" cy="759.1" rx="3.0" ry="6.4" fill="#a88416" transform="rotate(24 285.6 759.1)"/><ellipse cx="318.4" cy="714.2" rx="1.8" ry="3.8" fill="#7e7420" transform="rotate(-8 318.4 714.2)"/><ellipse cx="277.9" cy="672.7" rx="2.9" ry="6.3" fill="#deb428" transform="rotate(18 277.9 672.7)"/><ellipse cx="275.7" cy="706.5" rx="1.9" ry="4.2" fill="#ac8818" transform="rotate(-38 275.7 706.5)"/><ellipse cx="308.4" cy="746.3" rx="1.9" ry="4.1" fill="#5f6420" transform="rotate(6 308.4 746.3)"/><ellipse cx="299.4" cy="665.8" rx="1.4" ry="3.0" fill="#4a4416" transform="rotate(33 299.4 665.8)"/><ellipse cx="263.7" cy="727.4" rx="2.9" ry="6.2" fill="#d8ae24" transform="rotate(-1 263.7 727.4)"/><ellipse cx="285.8" cy="681.1" rx="2.6" ry="5.5" fill="#cfa41f" transform="rotate(-7 285.8 681.1)"/><ellipse cx="257.4" cy="738.6" rx="1.4" ry="3.1" fill="#3e3c14" transform="rotate(5 257.4 738.6)"/><ellipse cx="253.6" cy="727.4" rx="1.7" ry="3.7" fill="#ac8818" transform="rotate(37 253.6 727.4)"/><ellipse cx="283.9" cy="669.6" rx="1.5" ry="3.2" fill="#deb428" transform="rotate(12 283.9 669.6)"/><ellipse cx="291.5" cy="692.6" rx="2.2" ry="4.9" fill="#3e3c14" transform="rotate(-39 291.5 692.6)"/><ellipse cx="289.4" cy="702.8" rx="2.6" ry="5.6" fill="#4a4416" transform="rotate(-34 289.4 702.8)"/><ellipse cx="286.4" cy="669.0" rx="1.9" ry="4.1" fill="#cca620" transform="rotate(-10 286.4 669.0)"/><ellipse cx="278.1" cy="697.8" rx="2.6" ry="5.7" fill="#cfa41f" transform="rotate(-7 278.1 697.8)"/><ellipse cx="319.9" cy="748.1" rx="2.7" ry="5.9" fill="#4c5420" transform="rotate(41 319.9 748.1)"/><ellipse cx="274.7" cy="694.3" rx="2.8" ry="6.0" fill="#cca620" transform="rotate(-14 274.7 694.3)"/><ellipse cx="288.9" cy="668.7" rx="2.2" ry="4.8" fill="#bc941a" transform="rotate(28 288.9 668.7)"/><ellipse cx="287.3" cy="675.1" rx="2.8" ry="6.1" fill="#d8ae24" transform="rotate(6 287.3 675.1)"/><ellipse cx="306.3" cy="699.5" rx="1.5" ry="3.3" fill="#a88416" transform="rotate(39 306.3 699.5)"/><ellipse cx="280.3" cy="700.9" rx="2.8" ry="6.1" fill="#bc941a" transform="rotate(-32 280.3 700.9)"/><ellipse cx="272.1" cy="690.6" rx="2.2" ry="4.8" fill="#cca620" transform="rotate(48 272.1 690.6)"/><ellipse cx="263.0" cy="718.6" rx="2.1" ry="4.6" fill="#d8ae24" transform="rotate(-6 263.0 718.6)"/><ellipse cx="310.5" cy="720.9" rx="2.9" ry="6.3" fill="#a88416" transform="rotate(45 310.5 720.9)"/><ellipse cx="283.1" cy="739.3" rx="2.3" ry="5.0" fill="#98781a" transform="rotate(-48 283.1 739.3)"/><ellipse cx="298.6" cy="703.9" rx="2.3" ry="4.9" fill="#4a4416" transform="rotate(-21 298.6 703.9)"/><ellipse cx="261.3" cy="736.6" rx="2.7" ry="5.8" fill="#bc941a" transform="rotate(-15 261.3 736.6)"/><ellipse cx="300.7" cy="739.0" rx="1.4" ry="3.0" fill="#3e3c14" transform="rotate(-22 300.7 739.0)"/><ellipse cx="290.1" cy="705.3" rx="2.2" ry="4.8" fill="#bc941a" transform="rotate(-50 290.1 705.3)"/><ellipse cx="288.9" cy="745.2" rx="1.6" ry="3.6" fill="#7e7420" transform="rotate(-9 288.9 745.2)"/><ellipse cx="291.5" cy="692.3" rx="2.3" ry="5.0" fill="#ac8818" transform="rotate(34 291.5 692.3)"/><ellipse cx="260.7" cy="722.3" rx="1.7" ry="3.8" fill="#5a5218" transform="rotate(40 260.7 722.3)"/><ellipse cx="293.3" cy="661.6" rx="1.4" ry="3.1" fill="#cfa41f" transform="rotate(12 293.3 661.6)"/><ellipse cx="277.5" cy="732.6" rx="2.9" ry="6.3" fill="#a88416" transform="rotate(-32 277.5 732.6)"/><ellipse cx="313.6" cy="731.8" rx="2.5" ry="5.4" fill="#7e7420" transform="rotate(39 313.6 731.8)"/><ellipse cx="279.4" cy="667.0" rx="1.6" ry="3.5" fill="#cca620" transform="rotate(6 279.4 667.0)"/><ellipse cx="291.2" cy="694.1" rx="1.7" ry="3.8" fill="#ac8818" transform="rotate(23 291.2 694.1)"/><ellipse cx="286.6" cy="656.5" rx="2.3" ry="4.9" fill="#ecc83e" transform="rotate(50 286.6 656.5)"/><ellipse cx="306.8" cy="752.9" rx="1.6" ry="3.4" fill="#5f6420" transform="rotate(38 306.8 752.9)"/><ellipse cx="300.5" cy="737.0" rx="1.5" ry="3.3" fill="#98781a" transform="rotate(21 300.5 737.0)"/><ellipse cx="290.7" cy="748.5" rx="1.4" ry="3.1" fill="#a88416" transform="rotate(14 290.7 748.5)"/><ellipse cx="264.9" cy="704.0" rx="2.2" ry="4.8" fill="#deb428" transform="rotate(48 264.9 704.0)"/><ellipse cx="258.1" cy="735.5" rx="1.7" ry="3.8" fill="#ac8818" transform="rotate(-50 258.1 735.5)"/><ellipse cx="284.7" cy="666.4" rx="2.7" ry="5.8" fill="#ecc83e" transform="rotate(40 284.7 666.4)"/><ellipse cx="315.5" cy="734.2" rx="2.1" ry="4.6" fill="#5f6420" transform="rotate(-8 315.5 734.2)"/><ellipse cx="322.2" cy="732.5" rx="1.6" ry="3.5" fill="#8a7a1c" transform="rotate(-34 322.2 732.5)"/><ellipse cx="309.9" cy="719.6" rx="2.3" ry="5.0" fill="#7e7420" transform="rotate(-4 309.9 719.6)"/><ellipse cx="306.7" cy="690.1" rx="2.5" ry="5.4" fill="#7e7420" transform="rotate(12 306.7 690.1)"/><ellipse cx="274.1" cy="684.3" rx="2.5" ry="5.4" fill="#cca620" transform="rotate(26 274.1 684.3)"/><ellipse cx="287.3" cy="708.5" rx="2.9" ry="6.4" fill="#5a5218" transform="rotate(45 287.3 708.5)"/><ellipse cx="294.5" cy="712.9" rx="2.3" ry="5.1" fill="#3e3c14" transform="rotate(36 294.5 712.9)"/><ellipse cx="271.9" cy="696.0" rx="1.9" ry="4.0" fill="#cca620" transform="rotate(18 271.9 696.0)"/><ellipse cx="287.1" cy="673.3" rx="2.4" ry="5.3" fill="#ac8818" transform="rotate(-8 287.1 673.3)"/><ellipse cx="298.7" cy="701.4" rx="1.4" ry="3.0" fill="#a88416" transform="rotate(49 298.7 701.4)"/><ellipse cx="267.8" cy="749.0" rx="2.7" ry="5.9" fill="#54501c" transform="rotate(-8 267.8 749.0)"/><ellipse cx="298.7" cy="682.6" rx="2.6" ry="5.7" fill="#4a4416" transform="rotate(40 298.7 682.6)"/><ellipse cx="281.6" cy="732.3" rx="1.9" ry="4.2" fill="#b08c1a" transform="rotate(0 281.6 732.3)"/><ellipse cx="280.5" cy="716.2" rx="1.5" ry="3.3" fill="#ac8818" transform="rotate(48 280.5 716.2)"/><ellipse cx="295.1" cy="673.4" rx="2.9" ry="6.3" fill="#ac8818" transform="rotate(22 295.1 673.4)"/><ellipse cx="294.3" cy="666.5" rx="1.6" ry="3.4" fill="#bc941a" transform="rotate(-42 294.3 666.5)"/><ellipse cx="300.4" cy="707.4" rx="2.3" ry="4.9" fill="#b08c1a" transform="rotate(29 300.4 707.4)"/>
<linearGradient id="shade" x1="0" y1="0" x2="0" y2="1"><stop offset="0" stop-color="#1c1c0c" stop-opacity="0"/><stop offset="1" stop-color="#1c1c0c" stop-opacity=".62"/></linearGradient>
<rect x="0" y="722" width="322" height="44" fill="url(#shade)"/>
<rect x="0" y="766.5" width="271" height="12" fill="#cfd4da"/>
<rect x="271" y="766" width="51" height="12" fill="#3a3c30"/>
<rect x="294" y="769" width="11" height="6" fill="#7f947f"/>
<rect x="8" y="766" width="1.5" height="12" fill="#9aa0a6"/>
<rect x="22" y="766" width="1.5" height="12" fill="#9aa0a6"/>
<rect x="36" y="766" width="1.5" height="12" fill="#9aa0a6"/>
<rect x="50" y="766" width="1.5" height="12" fill="#9aa0a6"/>
<rect x="64" y="766" width="1.5" height="12" fill="#9aa0a6"/>
<rect x="78" y="766" width="1.5" height="12" fill="#9aa0a6"/>
<rect x="92" y="766" width="1.5" height="12" fill="#9aa0a6"/>
<rect x="106" y="766" width="1.5" height="12" fill="#9aa0a6"/>
<rect x="120" y="766" width="1.5" height="12" fill="#9aa0a6"/>
<rect x="134" y="766" width="1.5" height="12" fill="#9aa0a6"/>
<rect x="148" y="766" width="1.5" height="12" fill="#9aa0a6"/>
<rect x="162" y="766" width="1.5" height="12" fill="#9aa0a6"/>
<rect x="176" y="766" width="1.5" height="12" fill="#9aa0a6"/>
<rect x="190" y="766" width="1.5" height="12" fill="#9aa0a6"/>
<rect x="204" y="766" width="1.5" height="12" fill="#9aa0a6"/>
<rect x="218" y="766" width="1.5" height="12" fill="#9aa0a6"/>
<rect x="232" y="766" width="1.5" height="12" fill="#9aa0a6"/>
<rect x="246" y="766" width="1.5" height="12" fill="#9aa0a6"/>
<rect x="260" y="766" width="1.5" height="12" fill="#9aa0a6"/>
<rect x="0" y="777.5" width="322" height="10" fill="#333d1f"/>
<rect x="0" y="788" width="322" height="8" fill="#a39c28"/>
<rect x="0" y="795.5" width="322" height="4" fill="#66701f"/>
<rect x="0" y="799" width="322" height="48" fill="#485621"/>
<rect x="52" y="756" width="5" height="42" fill="#2a2618"/>
<rect x="180" y="755" width="4" height="52" fill="#2a2618"/>
<rect x="287" y="760" width="4" height="40" fill="#2a2618"/>
<g filter="url(#b1)" opacity=".95"><circle cx="145.7" cy="818.6" r="1.8" fill="#f2e4ec"/><circle cx="145.5" cy="839.0" r="1.2" fill="#6f7c32"/><circle cx="164.8" cy="823.5" r="1.8" fill="#cf7fa4"/><circle cx="286.7" cy="823.8" r="1.5" fill="#ecc5d7"/><circle cx="310.7" cy="825.1" r="1.6" fill="#f0d8e4"/><circle cx="200.6" cy="837.4" r="1.0" fill="#e3a6c0"/><circle cx="149.4" cy="810.4" r="1.6" fill="#d99ab8"/><circle cx="27.4" cy="825.2" r="1.3" fill="#d99ab8"/><circle cx="320.6" cy="838.0" r="2.0" fill="#e2b3cb"/><circle cx="244.1" cy="815.4" r="0.8" fill="#34421a"/><circle cx="246.7" cy="807.6" r="1.0" fill="#e3a6c0"/><circle cx="293.1" cy="812.4" r="1.7" fill="#ecc5d7"/><circle cx="135.2" cy="819.1" r="1.0" fill="#2a3616"/><circle cx="310.4" cy="832.3" r="1.1" fill="#fbf6f8"/><circle cx="156.8" cy="827.1" r="1.1" fill="#d99ab8"/><circle cx="61.4" cy="830.5" r="1.1" fill="#2a3616"/><circle cx="123.6" cy="807.2" r="0.7" fill="#3b4a1c"/><circle cx="312.6" cy="835.4" r="1.4" fill="#e3a6c0"/><circle cx="67.8" cy="807.2" r="1.3" fill="#cf7fa4"/><circle cx="3.1" cy="822.1" r="1.8" fill="#ecc5d7"/><circle cx="78.3" cy="821.5" r="1.2" fill="#f2e4ec"/><circle cx="41.0" cy="820.5" r="1.8" fill="#f0d8e4"/><circle cx="292.5" cy="836.4" r="1.3" fill="#fbf6f8"/><circle cx="51.0" cy="823.4" r="1.5" fill="#2a3616"/><circle cx="305.9" cy="840.9" r="1.9" fill="#ecc5d7"/><circle cx="82.2" cy="831.0" r="1.4" fill="#ecc5d7"/><circle cx="265.2" cy="821.2" r="1.1" fill="#f0d8e4"/><circle cx="299.2" cy="847.4" r="1.2" fill="#f2e4ec"/><circle cx="180.1" cy="838.8" r="1.8" fill="#b9588a"/><circle cx="68.4" cy="843.1" r="2.1" fill="#cf7fa4"/><circle cx="86.7" cy="810.8" r="0.8" fill="#f0d8e4"/><circle cx="90.8" cy="816.6" r="1.8" fill="#cf7fa4"/><circle cx="116.6" cy="841.5" r="2.4" fill="#2a3616"/><circle cx="236.0" cy="816.0" r="1.8" fill="#34421a"/><circle cx="11.3" cy="781.2" r="1.4" fill="#e3a6c0"/><circle cx="301.5" cy="830.9" r="1.1" fill="#e2b3cb"/><circle cx="113.3" cy="827.3" r="2.0" fill="#3b4a1c"/><circle cx="276.0" cy="845.2" r="1.1" fill="#f2e4ec"/><circle cx="184.4" cy="823.1" r="1.3" fill="#34421a"/><circle cx="106.3" cy="844.5" r="2.1" fill="#f2e4ec"/><circle cx="141.8" cy="837.8" r="1.1" fill="#6f7c32"/><circle cx="7.2" cy="846.1" r="1.2" fill="#6f7c32"/><circle cx="197.9" cy="843.5" r="1.4" fill="#e3a6c0"/><circle cx="166.9" cy="832.0" r="1.4" fill="#f2e4ec"/><circle cx="80.7" cy="823.8" r="1.8" fill="#6f7c32"/><circle cx="294.4" cy="840.7" r="1.5" fill="#34421a"/><circle cx="112.9" cy="841.8" r="1.1" fill="#cf7fa4"/><circle cx="133.3" cy="823.2" r="1.4" fill="#e2b3cb"/><circle cx="230.6" cy="838.1" r="1.8" fill="#e2b3cb"/><circle cx="228.2" cy="819.4" r="1.1" fill="#6f7c32"/><circle cx="181.6" cy="824.2" r="1.3" fill="#fbf6f8"/><circle cx="8.0" cy="837.2" r="1.3" fill="#f0d8e4"/><circle cx="256.6" cy="847.9" r="1.2" fill="#cf7fa4"/><circle cx="202.8" cy="825.2" r="1.8" fill="#cf7fa4"/><circle cx="111.3" cy="828.1" r="1.5" fill="#34421a"/><circle cx="287.4" cy="806.8" r="0.8" fill="#e3a6c0"/><circle cx="121.3" cy="819.2" r="1.8" fill="#6f7c32"/><circle cx="316.3" cy="786.8" r="1.3" fill="#cf7fa4"/><circle cx="68.7" cy="842.1" r="2.5" fill="#b9588a"/><circle cx="172.9" cy="834.6" r="1.4" fill="#2f3b18"/><circle cx="142.0" cy="818.0" r="1.6" fill="#f2e4ec"/><circle cx="11.3" cy="816.8" r="1.5" fill="#f0d8e4"/><circle cx="151.5" cy="849.0" r="2.5" fill="#d99ab8"/><circle cx="270.5" cy="827.6" r="2.1" fill="#f2e4ec"/><circle cx="186.4" cy="827.5" r="1.8" fill="#f2e4ec"/><circle cx="169.6" cy="800.0" r="1.2" fill="#d99ab8"/><circle cx="165.6" cy="842.6" r="1.4" fill="#2a3616"/><circle cx="122.8" cy="838.3" r="2.2" fill="#fbf6f8"/><circle cx="87.9" cy="814.3" r="1.2" fill="#cf7fa4"/><circle cx="162.0" cy="821.8" r="0.8" fill="#e3a6c0"/><circle cx="166.2" cy="807.6" r="1.2" fill="#f2e4ec"/><circle cx="30.0" cy="791.5" r="1.3" fill="#6f7c32"/><circle cx="40.9" cy="809.9" r="1.6" fill="#f2e4ec"/><circle cx="78.7" cy="814.4" r="1.3" fill="#34421a"/><circle cx="39.5" cy="815.2" r="1.0" fill="#fbf6f8"/><circle cx="225.8" cy="840.6" r="1.0" fill="#2a3616"/><circle cx="133.1" cy="816.5" r="0.9" fill="#fbf6f8"/><circle cx="278.2" cy="816.8" r="1.0" fill="#fbf6f8"/><circle cx="274.1" cy="822.2" r="1.8" fill="#fbf6f8"/><circle cx="294.6" cy="823.3" r="1.2" fill="#f0d8e4"/><circle cx="101.7" cy="801.7" r="0.8" fill="#fbf6f8"/><circle cx="268.0" cy="809.1" r="0.8" fill="#ecc5d7"/><circle cx="202.2" cy="835.1" r="1.1" fill="#34421a"/><circle cx="219.7" cy="842.9" r="2.5" fill="#cf7fa4"/><circle cx="226.9" cy="823.8" r="1.2" fill="#2a3616"/><circle cx="268.2" cy="835.4" r="1.6" fill="#e3a6c0"/><circle cx="12.1" cy="818.1" r="1.4" fill="#34421a"/><circle cx="216.7" cy="820.0" r="0.9" fill="#2a3616"/><circle cx="148.8" cy="832.8" r="1.3" fill="#f2e4ec"/><circle cx="120.2" cy="823.7" r="0.9" fill="#fbf6f8"/><circle cx="58.4" cy="811.3" r="1.5" fill="#ecc5d7"/><circle cx="296.8" cy="821.7" r="0.9" fill="#6f7c32"/><circle cx="5.0" cy="841.6" r="2.2" fill="#2f3b18"/><circle cx="282.0" cy="842.7" r="2.4" fill="#34421a"/><circle cx="193.1" cy="814.8" r="1.8" fill="#6f7c32"/><circle cx="106.2" cy="817.2" r="1.2" fill="#ecc5d7"/><circle cx="246.4" cy="808.0" r="0.7" fill="#e2b3cb"/><circle cx="97.1" cy="787.0" r="1.3" fill="#e3a6c0"/><circle cx="74.7" cy="845.2" r="2.0" fill="#e2b3cb"/><circle cx="24.7" cy="815.5" r="1.3" fill="#fbf6f8"/><circle cx="225.8" cy="832.6" r="2.2" fill="#e3a6c0"/><circle cx="142.9" cy="814.8" r="1.6" fill="#2a3616"/><circle cx="291.6" cy="818.0" r="1.3" fill="#d99ab8"/><circle cx="182.9" cy="848.7" r="2.1" fill="#6f7c32"/><circle cx="207.6" cy="817.9" r="1.5" fill="#e3a6c0"/><circle cx="124.4" cy="844.8" r="1.6" fill="#f0d8e4"/><circle cx="275.5" cy="817.4" r="1.4" fill="#ecc5d7"/><circle cx="304.4" cy="809.0" r="1.3" fill="#e2b3cb"/><circle cx="170.8" cy="813.3" r="1.0" fill="#b9588a"/><circle cx="213.7" cy="831.6" r="0.9" fill="#6f7c32"/><circle cx="243.0" cy="806.9" r="1.4" fill="#e3a6c0"/><circle cx="187.3" cy="829.9" r="1.3" fill="#6f7c32"/><circle cx="291.6" cy="809.6" r="1.7" fill="#fbf6f8"/><circle cx="38.0" cy="839.4" r="1.5" fill="#f0d8e4"/><circle cx="40.0" cy="810.6" r="1.4" fill="#f2e4ec"/><circle cx="193.5" cy="824.1" r="1.7" fill="#e2b3cb"/><circle cx="250.5" cy="816.6" r="1.9" fill="#b9588a"/><circle cx="287.4" cy="834.1" r="1.8" fill="#e2b3cb"/><circle cx="88.5" cy="822.1" r="1.7" fill="#2f3b18"/><circle cx="190.5" cy="823.7" r="1.7" fill="#fbf6f8"/><circle cx="306.5" cy="814.6" r="1.4" fill="#fbf6f8"/><circle cx="87.2" cy="809.3" r="0.8" fill="#d99ab8"/><circle cx="89.6" cy="832.1" r="2.1" fill="#f0d8e4"/><circle cx="177.3" cy="823.5" r="1.3" fill="#f2e4ec"/><circle cx="114.0" cy="803.3" r="0.7" fill="#3b4a1c"/><circle cx="200.8" cy="833.0" r="1.2" fill="#ecc5d7"/><circle cx="49.4" cy="837.7" r="1.8" fill="#b9588a"/><circle cx="176.7" cy="831.5" r="2.1" fill="#ecc5d7"/><circle cx="210.5" cy="820.1" r="1.3" fill="#e2b3cb"/><circle cx="156.1" cy="827.3" r="1.2" fill="#6f7c32"/><circle cx="3.0" cy="801.4" r="1.1" fill="#2f3b18"/><circle cx="97.8" cy="830.0" r="1.8" fill="#b9588a"/><circle cx="105.3" cy="842.5" r="1.5" fill="#f2e4ec"/><circle cx="183.3" cy="843.4" r="2.4" fill="#b9588a"/><circle cx="141.0" cy="835.4" r="1.4" fill="#e2b3cb"/><circle cx="71.2" cy="846.8" r="2.2" fill="#d99ab8"/><circle cx="62.8" cy="818.9" r="1.7" fill="#d99ab8"/><circle cx="49.8" cy="820.8" r="1.0" fill="#cf7fa4"/><circle cx="244.4" cy="840.8" r="1.4" fill="#e3a6c0"/><circle cx="136.1" cy="820.2" r="1.1" fill="#d99ab8"/><circle cx="46.3" cy="831.5" r="1.8" fill="#fbf6f8"/><circle cx="229.3" cy="813.7" r="1.7" fill="#e2b3cb"/><circle cx="311.8" cy="826.4" r="1.5" fill="#d99ab8"/><circle cx="14.9" cy="832.2" r="2.2" fill="#e2b3cb"/><circle cx="274.8" cy="835.6" r="2.1" fill="#f2e4ec"/><circle cx="308.4" cy="824.2" r="1.5" fill="#2f3b18"/><circle cx="3.3" cy="787.6" r="0.8" fill="#f0d8e4"/><circle cx="37.0" cy="824.7" r="1.8" fill="#f0d8e4"/><circle cx="293.7" cy="832.0" r="0.9" fill="#f2e4ec"/><circle cx="231.0" cy="821.0" r="1.1" fill="#f0d8e4"/><circle cx="288.0" cy="807.8" r="1.6" fill="#2a3616"/><circle cx="176.5" cy="836.4" r="1.6" fill="#b9588a"/><circle cx="156.1" cy="807.8" r="1.3" fill="#6f7c32"/><circle cx="308.2" cy="813.3" r="1.0" fill="#e3a6c0"/><circle cx="314.3" cy="834.8" r="2.0" fill="#6f7c32"/><circle cx="318.9" cy="825.4" r="1.1" fill="#e3a6c0"/><circle cx="281.4" cy="842.5" r="1.7" fill="#fbf6f8"/><circle cx="229.7" cy="821.8" r="1.0" fill="#f0d8e4"/><circle cx="248.6" cy="790.0" r="0.7" fill="#2f3b18"/><circle cx="48.5" cy="833.2" r="0.9" fill="#3b4a1c"/><circle cx="113.3" cy="822.4" r="1.4" fill="#f2e4ec"/><circle cx="175.0" cy="814.9" r="0.8" fill="#fbf6f8"/><circle cx="134.3" cy="843.3" r="1.1" fill="#3b4a1c"/><circle cx="159.1" cy="845.3" r="2.5" fill="#e2b3cb"/><circle cx="150.4" cy="829.3" r="1.3" fill="#2a3616"/><circle cx="45.3" cy="826.1" r="1.7" fill="#2f3b18"/><circle cx="311.3" cy="837.3" r="1.9" fill="#e3a6c0"/><circle cx="278.1" cy="829.1" r="1.5" fill="#b9588a"/><circle cx="181.6" cy="811.6" r="0.7" fill="#3b4a1c"/><circle cx="93.5" cy="805.9" r="0.9" fill="#e2b3cb"/><circle cx="243.1" cy="818.3" r="0.9" fill="#fbf6f8"/><circle cx="64.4" cy="830.5" r="1.3" fill="#b9588a"/><circle cx="181.2" cy="829.9" r="1.3" fill="#3b4a1c"/><circle cx="42.3" cy="823.5" r="1.0" fill="#fbf6f8"/><circle cx="129.5" cy="837.7" r="1.8" fill="#cf7fa4"/><circle cx="248.3" cy="803.6" r="1.5" fill="#f0d8e4"/><circle cx="208.4" cy="832.9" r="2.0" fill="#ecc5d7"/><circle cx="155.4" cy="843.6" r="1.9" fill="#2f3b18"/><circle cx="129.0" cy="828.3" r="2.1" fill="#6f7c32"/><circle cx="78.9" cy="848.0" r="1.9" fill="#b9588a"/><circle cx="106.6" cy="803.6" r="0.7" fill="#ecc5d7"/><circle cx="33.1" cy="829.2" r="1.2" fill="#d99ab8"/><circle cx="290.8" cy="817.8" r="1.2" fill="#d99ab8"/><circle cx="165.3" cy="819.6" r="1.0" fill="#d99ab8"/><circle cx="321.5" cy="828.8" r="2.1" fill="#34421a"/><circle cx="304.3" cy="823.3" r="1.1" fill="#cf7fa4"/><circle cx="43.9" cy="813.0" r="1.2" fill="#e2b3cb"/><circle cx="106.0" cy="844.1" r="1.6" fill="#f2e4ec"/><circle cx="284.3" cy="811.2" r="1.5" fill="#fbf6f8"/><circle cx="291.1" cy="817.5" r="1.4" fill="#d99ab8"/><circle cx="117.1" cy="832.3" r="1.4" fill="#f0d8e4"/><circle cx="59.8" cy="817.8" r="0.8" fill="#e3a6c0"/><circle cx="129.9" cy="834.0" r="2.2" fill="#2a3616"/><circle cx="44.5" cy="832.2" r="2.0" fill="#ecc5d7"/><circle cx="198.1" cy="824.2" r="1.8" fill="#f0d8e4"/><circle cx="64.3" cy="812.3" r="0.9" fill="#ecc5d7"/><circle cx="252.4" cy="829.8" r="1.9" fill="#ecc5d7"/><circle cx="308.9" cy="821.4" r="1.4" fill="#ecc5d7"/><circle cx="288.7" cy="843.0" r="1.9" fill="#ecc5d7"/><circle cx="242.1" cy="813.5" r="1.8" fill="#3b4a1c"/><circle cx="291.5" cy="827.6" r="1.9" fill="#cf7fa4"/><circle cx="182.2" cy="842.5" r="1.8" fill="#d99ab8"/><circle cx="292.1" cy="800.4" r="1.0" fill="#ecc5d7"/><circle cx="192.4" cy="831.9" r="1.3" fill="#34421a"/><circle cx="78.0" cy="840.2" r="2.4" fill="#f2e4ec"/><circle cx="223.8" cy="816.3" r="1.0" fill="#b9588a"/><circle cx="211.5" cy="844.9" r="2.4" fill="#2f3b18"/><circle cx="311.2" cy="825.9" r="1.9" fill="#ecc5d7"/><circle cx="167.3" cy="789.0" r="0.9" fill="#b9588a"/><circle cx="20.2" cy="841.8" r="2.2" fill="#ecc5d7"/><circle cx="45.5" cy="827.8" r="1.2" fill="#b9588a"/><circle cx="10.0" cy="842.0" r="1.5" fill="#f2e4ec"/><circle cx="46.1" cy="833.6" r="2.0" fill="#fbf6f8"/><circle cx="65.3" cy="839.3" r="2.0" fill="#e3a6c0"/><circle cx="63.0" cy="837.8" r="1.5" fill="#f2e4ec"/><circle cx="5.2" cy="823.8" r="1.7" fill="#d99ab8"/><circle cx="65.0" cy="823.6" r="1.1" fill="#e3a6c0"/><circle cx="209.3" cy="801.1" r="1.5" fill="#b9588a"/><circle cx="280.0" cy="829.2" r="1.0" fill="#2f3b18"/><circle cx="308.1" cy="833.7" r="1.5" fill="#f0d8e4"/><circle cx="71.9" cy="801.2" r="0.8" fill="#f0d8e4"/><circle cx="231.9" cy="814.6" r="1.1" fill="#b9588a"/><circle cx="120.0" cy="825.7" r="1.9" fill="#34421a"/><circle cx="166.1" cy="847.4" r="2.4" fill="#f0d8e4"/><circle cx="29.0" cy="847.8" r="1.7" fill="#d99ab8"/><circle cx="23.8" cy="842.6" r="1.0" fill="#34421a"/><circle cx="60.0" cy="841.9" r="2.5" fill="#e3a6c0"/><circle cx="200.3" cy="843.2" r="1.9" fill="#e3a6c0"/><circle cx="299.2" cy="814.5" r="0.9" fill="#d99ab8"/><circle cx="250.1" cy="842.8" r="1.5" fill="#f2e4ec"/><circle cx="252.1" cy="815.7" r="1.3" fill="#3b4a1c"/><circle cx="204.4" cy="847.9" r="2.2" fill="#d99ab8"/><circle cx="56.0" cy="833.8" r="1.1" fill="#34421a"/><circle cx="140.3" cy="826.1" r="1.5" fill="#b9588a"/><circle cx="253.3" cy="834.6" r="1.2" fill="#f2e4ec"/><circle cx="175.2" cy="838.8" r="1.8" fill="#b9588a"/><circle cx="11.4" cy="821.2" r="1.6" fill="#34421a"/><circle cx="144.4" cy="840.8" r="1.5" fill="#34421a"/><circle cx="5.7" cy="814.2" r="1.2" fill="#f2e4ec"/><circle cx="232.9" cy="839.1" r="1.0" fill="#cf7fa4"/><circle cx="292.2" cy="819.3" r="1.4" fill="#6f7c32"/><circle cx="232.6" cy="823.0" r="0.9" fill="#ecc5d7"/><circle cx="13.6" cy="801.7" r="1.1" fill="#b9588a"/><circle cx="246.4" cy="814.4" r="1.4" fill="#d99ab8"/><circle cx="222.4" cy="837.3" r="2.1" fill="#e3a6c0"/><circle cx="101.7" cy="812.2" r="1.4" fill="#2f3b18"/><circle cx="245.1" cy="848.0" r="1.3" fill="#f2e4ec"/><circle cx="168.0" cy="848.0" r="1.1" fill="#ecc5d7"/><circle cx="11.0" cy="848.7" r="2.3" fill="#2f3b18"/><circle cx="73.2" cy="801.3" r="1.4" fill="#fbf6f8"/><circle cx="12.8" cy="807.8" r="0.7" fill="#e2b3cb"/><circle cx="182.7" cy="842.9" r="2.3" fill="#f0d8e4"/><circle cx="149.0" cy="807.1" r="1.0" fill="#6f7c32"/><circle cx="255.4" cy="835.5" r="1.6" fill="#ecc5d7"/><circle cx="69.1" cy="812.3" r="1.0" fill="#f2e4ec"/><circle cx="157.8" cy="823.2" r="1.0" fill="#f2e4ec"/><circle cx="126.5" cy="843.7" r="2.1" fill="#b9588a"/><circle cx="270.3" cy="788.2" r="0.9" fill="#3b4a1c"/><circle cx="284.1" cy="802.4" r="1.1" fill="#e3a6c0"/><circle cx="97.3" cy="821.9" r="1.4" fill="#fbf6f8"/><circle cx="48.6" cy="821.1" r="0.8" fill="#b9588a"/><circle cx="132.2" cy="813.0" r="1.5" fill="#d99ab8"/><circle cx="90.3" cy="829.2" r="1.4" fill="#ecc5d7"/><circle cx="119.3" cy="822.2" r="1.0" fill="#3b4a1c"/><circle cx="7.9" cy="823.5" r="1.5" fill="#6f7c32"/><circle cx="245.2" cy="831.3" r="1.8" fill="#cf7fa4"/><circle cx="214.6" cy="845.9" r="2.4" fill="#fbf6f8"/><circle cx="38.6" cy="814.0" r="1.3" fill="#e2b3cb"/><circle cx="91.6" cy="828.5" r="1.1" fill="#ecc5d7"/><circle cx="65.0" cy="833.0" r="1.4" fill="#2f3b18"/><circle cx="225.8" cy="818.2" r="1.6" fill="#e3a6c0"/><circle cx="290.6" cy="788.3" r="0.8" fill="#ecc5d7"/><circle cx="159.6" cy="820.4" r="1.3" fill="#e2b3cb"/><circle cx="262.5" cy="841.2" r="1.9" fill="#ecc5d7"/><circle cx="198.1" cy="845.9" r="1.6" fill="#34421a"/><circle cx="15.4" cy="817.5" r="1.5" fill="#cf7fa4"/><circle cx="88.9" cy="837.2" r="2.2" fill="#ecc5d7"/><circle cx="311.2" cy="806.6" r="1.3" fill="#b9588a"/><circle cx="99.4" cy="804.9" r="0.8" fill="#fbf6f8"/><circle cx="167.6" cy="843.9" r="2.5" fill="#e3a6c0"/><circle cx="77.1" cy="814.1" r="1.4" fill="#d99ab8"/><circle cx="25.5" cy="836.8" r="2.2" fill="#2f3b18"/><circle cx="285.4" cy="801.6" r="1.2" fill="#2a3616"/><circle cx="107.2" cy="827.6" r="1.9" fill="#b9588a"/><circle cx="32.9" cy="828.6" r="1.0" fill="#f2e4ec"/><circle cx="165.0" cy="826.9" r="0.9" fill="#34421a"/><circle cx="278.9" cy="840.0" r="1.1" fill="#b9588a"/><circle cx="128.0" cy="831.0" r="1.8" fill="#b9588a"/><circle cx="105.2" cy="803.0" r="1.4" fill="#3b4a1c"/><circle cx="41.7" cy="847.9" r="2.1" fill="#f0d8e4"/><circle cx="200.6" cy="837.3" r="2.1" fill="#f0d8e4"/><circle cx="64.7" cy="822.9" r="1.2" fill="#2a3616"/><circle cx="303.0" cy="847.0" r="1.2" fill="#2f3b18"/><circle cx="124.5" cy="826.9" r="1.0" fill="#f0d8e4"/><circle cx="92.1" cy="830.5" r="2.2" fill="#cf7fa4"/><circle cx="130.3" cy="842.4" r="2.2" fill="#3b4a1c"/><circle cx="257.8" cy="837.9" r="1.4" fill="#ecc5d7"/><circle cx="185.6" cy="826.6" r="1.1" fill="#b9588a"/><circle cx="34.5" cy="844.4" r="1.4" fill="#f2e4ec"/><circle cx="177.6" cy="818.6" r="0.9" fill="#e3a6c0"/><circle cx="58.8" cy="813.4" r="1.8" fill="#fbf6f8"/><circle cx="113.2" cy="818.6" r="1.4" fill="#fbf6f8"/><circle cx="177.3" cy="825.3" r="1.6" fill="#b9588a"/><circle cx="259.3" cy="819.4" r="1.9" fill="#e3a6c0"/><circle cx="242.6" cy="801.4" r="0.6" fill="#fbf6f8"/><circle cx="20.5" cy="805.2" r="0.9" fill="#fbf6f8"/><circle cx="255.1" cy="830.7" r="1.4" fill="#6f7c32"/><circle cx="171.1" cy="825.9" r="1.8" fill="#6f7c32"/><circle cx="32.5" cy="845.6" r="1.6" fill="#2f3b18"/><circle cx="131.5" cy="842.0" r="1.9" fill="#e3a6c0"/><circle cx="118.9" cy="825.3" r="1.8" fill="#e2b3cb"/><circle cx="201.9" cy="811.0" r="1.0" fill="#cf7fa4"/><circle cx="107.8" cy="831.2" r="1.2" fill="#2f3b18"/><circle cx="16.8" cy="786.5" r="1.2" fill="#e3a6c0"/><circle cx="283.5" cy="802.1" r="0.7" fill="#e2b3cb"/><circle cx="138.5" cy="846.4" r="1.4" fill="#ecc5d7"/><circle cx="251.3" cy="841.3" r="2.2" fill="#cf7fa4"/><circle cx="218.1" cy="845.4" r="1.5" fill="#f0d8e4"/><circle cx="250.4" cy="816.2" r="0.8" fill="#2f3b18"/><circle cx="204.4" cy="806.1" r="0.9" fill="#34421a"/><circle cx="111.0" cy="810.3" r="1.4" fill="#ecc5d7"/><circle cx="162.6" cy="819.2" r="0.9" fill="#3b4a1c"/><circle cx="237.9" cy="831.3" r="1.5" fill="#f2e4ec"/><circle cx="193.4" cy="819.5" r="1.4" fill="#e3a6c0"/><circle cx="170.1" cy="811.2" r="1.0" fill="#e3a6c0"/><circle cx="191.5" cy="844.3" r="1.2" fill="#f2e4ec"/><circle cx="60.6" cy="812.4" r="1.3" fill="#e3a6c0"/><circle cx="279.3" cy="788.7" r="0.8" fill="#3b4a1c"/><circle cx="297.5" cy="834.5" r="1.1" fill="#cf7fa4"/><circle cx="256.9" cy="815.3" r="1.8" fill="#cf7fa4"/><circle cx="4.6" cy="809.5" r="1.7" fill="#fbf6f8"/><circle cx="23.7" cy="818.3" r="1.7" fill="#f2e4ec"/><circle cx="18.0" cy="840.0" r="2.4" fill="#cf7fa4"/><circle cx="278.5" cy="837.5" r="1.1" fill="#f0d8e4"/><circle cx="149.9" cy="813.8" r="0.8" fill="#2a3616"/><circle cx="66.6" cy="823.4" r="1.9" fill="#2f3b18"/><circle cx="312.4" cy="818.6" r="1.9" fill="#ecc5d7"/><circle cx="223.4" cy="812.2" r="0.8" fill="#cf7fa4"/><circle cx="83.3" cy="803.7" r="0.9" fill="#e3a6c0"/><circle cx="320.3" cy="827.7" r="1.8" fill="#e2b3cb"/><circle cx="280.3" cy="833.1" r="1.2" fill="#cf7fa4"/><circle cx="203.3" cy="809.3" r="1.1" fill="#f2e4ec"/><circle cx="165.5" cy="808.8" r="0.8" fill="#cf7fa4"/><circle cx="281.0" cy="799.8" r="1.0" fill="#f2e4ec"/><circle cx="124.8" cy="831.3" r="1.7" fill="#f2e4ec"/><circle cx="188.1" cy="825.4" r="1.2" fill="#2a3616"/><circle cx="223.8" cy="826.4" r="1.2" fill="#ecc5d7"/><circle cx="120.7" cy="820.9" r="1.8" fill="#ecc5d7"/><circle cx="135.4" cy="803.6" r="1.4" fill="#34421a"/><circle cx="33.6" cy="825.4" r="1.4" fill="#fbf6f8"/><circle cx="232.8" cy="826.2" r="1.3" fill="#3b4a1c"/><circle cx="151.1" cy="805.0" r="0.9" fill="#2a3616"/><circle cx="6.8" cy="834.5" r="1.5" fill="#fbf6f8"/><circle cx="209.3" cy="828.4" r="2.1" fill="#cf7fa4"/><circle cx="321.9" cy="825.3" r="1.8" fill="#fbf6f8"/><circle cx="166.7" cy="820.3" r="1.4" fill="#3b4a1c"/><circle cx="46.0" cy="807.2" r="0.7" fill="#f0d8e4"/><circle cx="308.6" cy="828.0" r="1.9" fill="#b9588a"/><circle cx="213.6" cy="846.9" r="1.8" fill="#cf7fa4"/><circle cx="117.9" cy="837.4" r="2.2" fill="#cf7fa4"/><circle cx="113.1" cy="817.0" r="1.4" fill="#cf7fa4"/><circle cx="249.9" cy="786.5" r="0.6" fill="#fbf6f8"/><circle cx="94.7" cy="833.6" r="1.2" fill="#ecc5d7"/><circle cx="150.2" cy="848.3" r="2.0" fill="#f0d8e4"/><circle cx="179.7" cy="811.7" r="1.6" fill="#cf7fa4"/><circle cx="260.7" cy="814.8" r="0.9" fill="#34421a"/><circle cx="169.0" cy="808.0" r="1.5" fill="#cf7fa4"/><circle cx="263.5" cy="830.7" r="1.8" fill="#f0d8e4"/><circle cx="94.7" cy="822.7" r="1.3" fill="#f2e4ec"/><circle cx="96.8" cy="846.7" r="2.0" fill="#3b4a1c"/><circle cx="69.1" cy="817.0" r="1.5" fill="#ecc5d7"/><circle cx="105.9" cy="813.7" r="1.4" fill="#d99ab8"/><circle cx="304.8" cy="819.2" r="1.4" fill="#cf7fa4"/><circle cx="127.0" cy="800.7" r="0.8" fill="#e2b3cb"/><circle cx="27.2" cy="834.6" r="1.5" fill="#2a3616"/><circle cx="138.6" cy="811.1" r="0.7" fill="#3b4a1c"/><circle cx="103.9" cy="836.5" r="1.9" fill="#2f3b18"/><circle cx="119.8" cy="801.7" r="0.8" fill="#2f3b18"/><circle cx="169.6" cy="830.6" r="1.4" fill="#34421a"/><circle cx="309.4" cy="805.2" r="1.0" fill="#b9588a"/><circle cx="67.6" cy="832.6" r="1.0" fill="#f0d8e4"/><circle cx="160.2" cy="815.6" r="1.6" fill="#e3a6c0"/><circle cx="260.1" cy="845.1" r="2.0" fill="#e2b3cb"/><circle cx="27.5" cy="847.9" r="2.4" fill="#e2b3cb"/><circle cx="91.9" cy="799.5" r="0.9" fill="#cf7fa4"/><circle cx="177.8" cy="844.0" r="2.0" fill="#e3a6c0"/><circle cx="198.7" cy="827.1" r="1.1" fill="#d99ab8"/><circle cx="1.8" cy="830.8" r="1.4" fill="#2a3616"/><circle cx="201.4" cy="843.0" r="2.2" fill="#f0d8e4"/><circle cx="251.6" cy="810.4" r="1.5" fill="#ecc5d7"/><circle cx="243.7" cy="826.7" r="1.9" fill="#f2e4ec"/><circle cx="103.0" cy="830.7" r="1.0" fill="#cf7fa4"/><circle cx="308.0" cy="804.6" r="1.3" fill="#2f3b18"/><circle cx="38.1" cy="801.4" r="1.1" fill="#3b4a1c"/><circle cx="68.0" cy="808.6" r="1.5" fill="#cf7fa4"/><circle cx="288.7" cy="844.2" r="1.3" fill="#2f3b18"/><circle cx="298.9" cy="814.1" r="1.5" fill="#ecc5d7"/><circle cx="164.7" cy="813.2" r="1.3" fill="#3b4a1c"/><circle cx="53.6" cy="820.4" r="1.0" fill="#e2b3cb"/><circle cx="265.1" cy="824.9" r="1.3" fill="#6f7c32"/><circle cx="167.4" cy="806.8" r="1.5" fill="#e2b3cb"/><circle cx="14.5" cy="843.6" r="2.2" fill="#b9588a"/><circle cx="121.6" cy="829.4" r="1.4" fill="#34421a"/><circle cx="60.0" cy="822.8" r="1.6" fill="#d99ab8"/><circle cx="182.9" cy="818.1" r="1.1" fill="#f0d8e4"/><circle cx="143.8" cy="847.0" r="1.6" fill="#b9588a"/><circle cx="31.5" cy="834.1" r="1.2" fill="#fbf6f8"/><circle cx="277.3" cy="830.9" r="1.3" fill="#f0d8e4"/><circle cx="246.3" cy="820.2" r="1.8" fill="#e2b3cb"/><circle cx="221.9" cy="805.1" r="1.3" fill="#b9588a"/><circle cx="195.8" cy="837.3" r="2.3" fill="#cf7fa4"/><circle cx="42.4" cy="813.5" r="1.0" fill="#b9588a"/><circle cx="255.5" cy="845.1" r="1.3" fill="#ecc5d7"/><circle cx="51.6" cy="839.3" r="2.2" fill="#34421a"/><circle cx="28.8" cy="835.2" r="1.2" fill="#6f7c32"/><circle cx="212.5" cy="843.4" r="2.2" fill="#b9588a"/><circle cx="98.7" cy="809.5" r="1.3" fill="#d99ab8"/><circle cx="75.2" cy="811.2" r="1.1" fill="#2f3b18"/><circle cx="69.6" cy="824.2" r="1.2" fill="#2f3b18"/><circle cx="302.8" cy="825.3" r="0.9" fill="#e3a6c0"/><circle cx="32.8" cy="819.0" r="0.9" fill="#e2b3cb"/><circle cx="99.6" cy="840.2" r="1.1" fill="#2a3616"/><circle cx="46.0" cy="842.2" r="2.4" fill="#6f7c32"/><circle cx="296.2" cy="817.4" r="1.3" fill="#2a3616"/><circle cx="59.4" cy="816.3" r="1.1" fill="#f2e4ec"/><circle cx="297.9" cy="840.7" r="1.1" fill="#f0d8e4"/><circle cx="179.5" cy="847.1" r="1.9" fill="#f0d8e4"/><circle cx="255.7" cy="822.0" r="1.8" fill="#2a3616"/><circle cx="184.0" cy="842.0" r="1.5" fill="#f0d8e4"/><circle cx="27.8" cy="815.8" r="1.8" fill="#e3a6c0"/><circle cx="60.0" cy="821.7" r="1.8" fill="#6f7c32"/><circle cx="243.9" cy="835.7" r="0.9" fill="#cf7fa4"/><circle cx="126.2" cy="842.0" r="1.4" fill="#e3a6c0"/><circle cx="188.6" cy="816.3" r="1.1" fill="#2a3616"/><circle cx="113.3" cy="825.0" r="2.0" fill="#ecc5d7"/><circle cx="154.2" cy="834.1" r="1.4" fill="#fbf6f8"/><circle cx="218.3" cy="822.1" r="1.5" fill="#34421a"/><circle cx="82.1" cy="840.5" r="1.2" fill="#fbf6f8"/><circle cx="21.2" cy="815.2" r="1.5" fill="#fbf6f8"/><circle cx="217.1" cy="834.5" r="1.7" fill="#cf7fa4"/><circle cx="220.5" cy="814.8" r="1.2" fill="#e3a6c0"/><circle cx="133.4" cy="848.3" r="1.6" fill="#e2b3cb"/><circle cx="322.0" cy="808.9" r="0.9" fill="#6f7c32"/><circle cx="66.6" cy="842.6" r="1.8" fill="#2f3b18"/><circle cx="22.0" cy="847.2" r="2.5" fill="#e3a6c0"/><circle cx="282.8" cy="846.3" r="2.5" fill="#e2b3cb"/><circle cx="285.2" cy="826.1" r="1.3" fill="#2f3b18"/><circle cx="169.7" cy="817.3" r="1.4" fill="#6f7c32"/><circle cx="210.5" cy="781.1" r="1.3" fill="#2a3616"/><circle cx="183.0" cy="800.3" r="1.5" fill="#f2e4ec"/><circle cx="112.8" cy="848.8" r="1.8" fill="#e3a6c0"/><circle cx="61.4" cy="845.1" r="2.5" fill="#e3a6c0"/><circle cx="141.3" cy="820.3" r="1.4" fill="#b9588a"/><circle cx="257.3" cy="814.4" r="1.4" fill="#f2e4ec"/><circle cx="313.0" cy="803.2" r="1.1" fill="#2f3b18"/><circle cx="152.3" cy="823.0" r="1.2" fill="#e2b3cb"/><circle cx="46.3" cy="820.0" r="1.5" fill="#ecc5d7"/><circle cx="173.9" cy="811.8" r="1.1" fill="#f2e4ec"/><circle cx="75.1" cy="844.6" r="2.3" fill="#2a3616"/><circle cx="52.4" cy="815.1" r="1.8" fill="#b9588a"/><circle cx="246.4" cy="844.4" r="1.5" fill="#d99ab8"/><circle cx="31.2" cy="827.4" r="1.3" fill="#d99ab8"/><circle cx="36.1" cy="831.4" r="2.0" fill="#2a3616"/><circle cx="86.6" cy="819.6" r="1.5" fill="#f2e4ec"/><circle cx="18.1" cy="802.0" r="0.7" fill="#f0d8e4"/><circle cx="27.2" cy="835.2" r="1.3" fill="#3b4a1c"/><circle cx="101.8" cy="825.9" r="1.5" fill="#fbf6f8"/><circle cx="208.2" cy="827.6" r="1.4" fill="#b9588a"/><circle cx="315.1" cy="843.3" r="2.0" fill="#6f7c32"/><circle cx="307.9" cy="825.4" r="1.4" fill="#2a3616"/><circle cx="196.6" cy="842.9" r="2.4" fill="#2a3616"/><circle cx="278.7" cy="847.4" r="1.3" fill="#b9588a"/><circle cx="316.3" cy="840.1" r="1.4" fill="#f0d8e4"/><circle cx="196.5" cy="833.5" r="1.3" fill="#2f3b18"/><circle cx="18.9" cy="839.9" r="2.1" fill="#6f7c32"/><circle cx="159.0" cy="843.8" r="1.3" fill="#2f3b18"/><circle cx="249.6" cy="827.9" r="1.5" fill="#e2b3cb"/><circle cx="150.3" cy="827.7" r="0.9" fill="#b9588a"/><circle cx="221.0" cy="845.0" r="1.5" fill="#e3a6c0"/><circle cx="293.5" cy="800.0" r="1.1" fill="#f2e4ec"/><circle cx="168.3" cy="813.7" r="0.8" fill="#3b4a1c"/><circle cx="308.7" cy="800.4" r="1.4" fill="#d99ab8"/><circle cx="152.6" cy="846.2" r="1.2" fill="#ecc5d7"/><circle cx="153.3" cy="808.7" r="1.5" fill="#d99ab8"/><circle cx="321.1" cy="816.4" r="1.0" fill="#6f7c32"/><circle cx="317.8" cy="822.4" r="1.0" fill="#b9588a"/><circle cx="253.5" cy="820.3" r="1.9" fill="#b9588a"/><circle cx="247.0" cy="824.7" r="1.7" fill="#f2e4ec"/><circle cx="19.6" cy="847.3" r="2.5" fill="#fbf6f8"/><circle cx="307.4" cy="841.3" r="1.1" fill="#cf7fa4"/><circle cx="0.7" cy="812.1" r="1.4" fill="#3b4a1c"/><circle cx="41.2" cy="809.4" r="1.4" fill="#ecc5d7"/><circle cx="28.0" cy="818.9" r="1.1" fill="#34421a"/><circle cx="125.9" cy="812.3" r="0.8" fill="#fbf6f8"/><circle cx="274.4" cy="813.6" r="1.4" fill="#e2b3cb"/><circle cx="298.2" cy="824.0" r="1.2" fill="#e3a6c0"/><circle cx="71.1" cy="839.7" r="1.7" fill="#ecc5d7"/><circle cx="238.0" cy="840.0" r="1.3" fill="#e3a6c0"/><circle cx="254.8" cy="828.9" r="1.4" fill="#e2b3cb"/><circle cx="68.0" cy="781.6" r="0.6" fill="#2f3b18"/><circle cx="152.5" cy="840.7" r="1.6" fill="#ecc5d7"/><circle cx="218.3" cy="814.8" r="1.6" fill="#ecc5d7"/><circle cx="73.7" cy="821.7" r="1.5" fill="#2a3616"/><circle cx="234.1" cy="818.9" r="1.2" fill="#3b4a1c"/><circle cx="134.0" cy="832.9" r="1.3" fill="#34421a"/><circle cx="122.3" cy="839.6" r="1.4" fill="#fbf6f8"/><circle cx="240.7" cy="809.9" r="0.7" fill="#fbf6f8"/><circle cx="269.6" cy="807.0" r="1.4" fill="#6f7c32"/><circle cx="109.4" cy="805.2" r="0.9" fill="#2a3616"/><circle cx="180.7" cy="817.6" r="1.9" fill="#f0d8e4"/><circle cx="242.4" cy="820.3" r="1.7" fill="#d99ab8"/><circle cx="170.1" cy="814.2" r="0.9" fill="#2a3616"/><circle cx="255.5" cy="814.1" r="1.3" fill="#6f7c32"/><circle cx="311.4" cy="826.6" r="1.0" fill="#e3a6c0"/><circle cx="148.2" cy="816.6" r="1.9" fill="#34421a"/><circle cx="165.4" cy="817.2" r="1.2" fill="#ecc5d7"/><circle cx="47.8" cy="801.5" r="1.4" fill="#fbf6f8"/><circle cx="66.5" cy="781.8" r="0.6" fill="#fbf6f8"/><circle cx="85.1" cy="813.7" r="1.5" fill="#e3a6c0"/><circle cx="261.3" cy="842.4" r="2.3" fill="#2f3b18"/><circle cx="101.0" cy="810.5" r="1.5" fill="#34421a"/><circle cx="90.6" cy="814.9" r="1.1" fill="#d99ab8"/><circle cx="71.7" cy="822.8" r="1.0" fill="#e2b3cb"/><circle cx="253.7" cy="841.2" r="1.2" fill="#f0d8e4"/><circle cx="294.7" cy="826.7" r="1.1" fill="#e2b3cb"/><circle cx="194.7" cy="804.0" r="0.9" fill="#3b4a1c"/><circle cx="20.2" cy="838.0" r="1.7" fill="#34421a"/><circle cx="7.9" cy="802.4" r="1.3" fill="#f2e4ec"/><circle cx="193.2" cy="839.5" r="1.1" fill="#cf7fa4"/><circle cx="134.5" cy="842.7" r="1.9" fill="#d99ab8"/><circle cx="87.8" cy="826.0" r="1.7" fill="#e2b3cb"/><circle cx="17.3" cy="833.8" r="1.2" fill="#e3a6c0"/><circle cx="100.0" cy="820.8" r="1.1" fill="#cf7fa4"/><circle cx="61.2" cy="817.6" r="1.8" fill="#3b4a1c"/><circle cx="200.5" cy="825.5" r="1.7" fill="#d99ab8"/><circle cx="78.6" cy="836.4" r="1.4" fill="#b9588a"/><circle cx="150.9" cy="816.5" r="1.3" fill="#6f7c32"/><circle cx="258.6" cy="838.3" r="1.4" fill="#b9588a"/><circle cx="279.7" cy="837.7" r="1.9" fill="#2f3b18"/><circle cx="119.6" cy="845.1" r="1.2" fill="#d99ab8"/><circle cx="178.0" cy="840.8" r="2.4" fill="#3b4a1c"/><circle cx="312.7" cy="817.5" r="1.3" fill="#b9588a"/><circle cx="307.5" cy="816.7" r="0.9" fill="#3b4a1c"/><circle cx="47.7" cy="806.9" r="0.8" fill="#d99ab8"/><circle cx="318.7" cy="841.8" r="1.9" fill="#d99ab8"/><circle cx="190.6" cy="820.2" r="1.0" fill="#f2e4ec"/><circle cx="301.3" cy="825.0" r="1.8" fill="#34421a"/><circle cx="296.8" cy="822.4" r="0.8" fill="#2f3b18"/><circle cx="245.3" cy="803.0" r="1.1" fill="#cf7fa4"/><circle cx="110.7" cy="830.1" r="1.8" fill="#6f7c32"/><circle cx="152.5" cy="846.1" r="1.5" fill="#b9588a"/><circle cx="290.2" cy="831.2" r="1.3" fill="#cf7fa4"/><circle cx="198.1" cy="844.5" r="1.1" fill="#34421a"/><circle cx="97.9" cy="840.6" r="1.9" fill="#ecc5d7"/><circle cx="295.4" cy="826.5" r="0.9" fill="#f0d8e4"/><circle cx="223.8" cy="806.3" r="1.3" fill="#cf7fa4"/><circle cx="315.5" cy="826.2" r="1.6" fill="#ecc5d7"/><circle cx="132.1" cy="820.6" r="0.9" fill="#b9588a"/><circle cx="160.9" cy="832.8" r="1.7" fill="#fbf6f8"/><circle cx="144.4" cy="813.4" r="0.8" fill="#d99ab8"/><circle cx="150.6" cy="838.2" r="1.8" fill="#2f3b18"/><circle cx="52.6" cy="805.1" r="1.0" fill="#cf7fa4"/><circle cx="9.1" cy="840.5" r="1.5" fill="#cf7fa4"/><circle cx="318.3" cy="835.4" r="1.8" fill="#fbf6f8"/><circle cx="64.6" cy="824.2" r="1.0" fill="#f0d8e4"/><circle cx="266.1" cy="834.6" r="1.5" fill="#ecc5d7"/><circle cx="182.9" cy="815.0" r="1.2" fill="#f2e4ec"/><circle cx="99.0" cy="848.1" r="1.1" fill="#6f7c32"/><circle cx="108.1" cy="780.6" r="0.9" fill="#d99ab8"/><circle cx="92.1" cy="825.9" r="1.0" fill="#6f7c32"/><circle cx="228.0" cy="805.7" r="1.5" fill="#e3a6c0"/><circle cx="207.0" cy="823.3" r="1.9" fill="#e2b3cb"/><circle cx="246.5" cy="787.8" r="1.3" fill="#e2b3cb"/><circle cx="190.2" cy="826.7" r="1.6" fill="#34421a"/><circle cx="83.6" cy="814.3" r="0.8" fill="#6f7c32"/><circle cx="90.1" cy="802.3" r="0.8" fill="#f2e4ec"/><circle cx="215.1" cy="839.5" r="1.0" fill="#f0d8e4"/><circle cx="117.7" cy="827.9" r="1.1" fill="#3b4a1c"/><circle cx="84.6" cy="806.2" r="1.4" fill="#cf7fa4"/><circle cx="88.6" cy="848.4" r="2.1" fill="#cf7fa4"/><circle cx="138.9" cy="843.4" r="2.2" fill="#f0d8e4"/><circle cx="232.7" cy="839.1" r="2.3" fill="#ecc5d7"/><circle cx="86.4" cy="818.8" r="1.0" fill="#2f3b18"/><circle cx="238.8" cy="811.9" r="1.4" fill="#f0d8e4"/><circle cx="294.6" cy="825.2" r="2.0" fill="#f0d8e4"/><circle cx="184.3" cy="826.5" r="2.1" fill="#e3a6c0"/><circle cx="118.9" cy="844.4" r="1.2" fill="#2a3616"/><circle cx="265.5" cy="827.2" r="1.5" fill="#3b4a1c"/><circle cx="269.3" cy="844.9" r="1.1" fill="#2a3616"/><circle cx="41.2" cy="821.6" r="1.8" fill="#e2b3cb"/><circle cx="295.8" cy="805.7" r="1.0" fill="#ecc5d7"/><circle cx="178.4" cy="820.2" r="1.8" fill="#2a3616"/><circle cx="142.1" cy="838.8" r="1.7" fill="#d99ab8"/><circle cx="308.8" cy="830.3" r="1.0" fill="#34421a"/><circle cx="162.8" cy="835.5" r="1.5" fill="#2a3616"/><circle cx="155.8" cy="807.5" r="1.0" fill="#cf7fa4"/><circle cx="136.3" cy="821.5" r="1.7" fill="#f2e4ec"/><circle cx="293.6" cy="830.3" r="0.9" fill="#f0d8e4"/><circle cx="286.7" cy="831.7" r="1.0" fill="#2a3616"/><circle cx="178.0" cy="847.3" r="1.6" fill="#ecc5d7"/><circle cx="290.0" cy="834.6" r="1.2" fill="#e3a6c0"/><circle cx="98.8" cy="808.8" r="1.6" fill="#ecc5d7"/><circle cx="297.4" cy="845.5" r="2.0" fill="#e2b3cb"/><circle cx="19.5" cy="808.8" r="1.7" fill="#3b4a1c"/><circle cx="305.9" cy="839.7" r="1.3" fill="#d99ab8"/><circle cx="166.5" cy="840.4" r="1.8" fill="#b9588a"/><circle cx="224.3" cy="830.2" r="1.5" fill="#cf7fa4"/><circle cx="135.6" cy="838.4" r="1.7" fill="#fbf6f8"/><circle cx="118.8" cy="792.1" r="0.7" fill="#2f3b18"/><circle cx="162.8" cy="815.8" r="1.8" fill="#3b4a1c"/><circle cx="195.9" cy="840.5" r="2.4" fill="#ecc5d7"/><circle cx="76.1" cy="847.6" r="2.5" fill="#6f7c32"/><circle cx="117.9" cy="824.7" r="1.3" fill="#e2b3cb"/><circle cx="14.4" cy="806.5" r="1.6" fill="#f0d8e4"/><circle cx="9.7" cy="824.1" r="1.8" fill="#e2b3cb"/><circle cx="26.6" cy="831.7" r="1.6" fill="#fbf6f8"/><circle cx="146.0" cy="821.3" r="1.2" fill="#e3a6c0"/><circle cx="166.2" cy="810.2" r="1.0" fill="#f0d8e4"/><circle cx="115.8" cy="843.7" r="2.3" fill="#34421a"/><circle cx="39.7" cy="803.6" r="0.8" fill="#2a3616"/><circle cx="50.3" cy="848.4" r="2.0" fill="#b9588a"/><circle cx="308.0" cy="832.3" r="1.8" fill="#f2e4ec"/><circle cx="167.1" cy="840.1" r="2.2" fill="#2f3b18"/><circle cx="229.6" cy="827.5" r="1.6" fill="#6f7c32"/><circle cx="246.3" cy="810.7" r="1.5" fill="#2f3b18"/><circle cx="141.4" cy="812.1" r="1.3" fill="#b9588a"/><circle cx="202.4" cy="822.1" r="0.9" fill="#e2b3cb"/><circle cx="30.0" cy="841.0" r="1.1" fill="#b9588a"/><circle cx="208.7" cy="826.0" r="1.8" fill="#f0d8e4"/><circle cx="133.0" cy="815.9" r="1.0" fill="#f2e4ec"/><circle cx="176.4" cy="821.2" r="1.5" fill="#d99ab8"/><circle cx="187.3" cy="780.2" r="0.9" fill="#f0d8e4"/><circle cx="153.3" cy="825.6" r="1.4" fill="#2f3b18"/><circle cx="243.4" cy="836.4" r="2.3" fill="#fbf6f8"/><circle cx="271.3" cy="842.7" r="1.1" fill="#b9588a"/><circle cx="208.8" cy="829.7" r="1.9" fill="#ecc5d7"/><circle cx="255.6" cy="814.9" r="1.8" fill="#e2b3cb"/><circle cx="312.9" cy="828.1" r="1.1" fill="#d99ab8"/><circle cx="25.6" cy="809.4" r="1.5" fill="#e3a6c0"/><circle cx="109.9" cy="810.6" r="1.5" fill="#f0d8e4"/><circle cx="233.1" cy="834.6" r="1.0" fill="#fbf6f8"/><circle cx="121.8" cy="812.4" r="0.8" fill="#3b4a1c"/><circle cx="97.5" cy="811.2" r="1.1" fill="#f2e4ec"/><circle cx="32.3" cy="846.8" r="2.5" fill="#cf7fa4"/><circle cx="296.2" cy="821.5" r="1.9" fill="#cf7fa4"/><circle cx="55.1" cy="848.4" r="1.4" fill="#6f7c32"/><circle cx="72.0" cy="811.7" r="1.7" fill="#cf7fa4"/><circle cx="270.2" cy="827.0" r="1.1" fill="#ecc5d7"/><circle cx="278.7" cy="815.2" r="0.8" fill="#b9588a"/><circle cx="293.8" cy="835.7" r="1.5" fill="#cf7fa4"/><circle cx="191.6" cy="836.6" r="1.0" fill="#fbf6f8"/><circle cx="130.0" cy="821.3" r="1.3" fill="#f2e4ec"/><circle cx="175.9" cy="807.6" r="1.0" fill="#e3a6c0"/><circle cx="2.4" cy="832.3" r="1.1" fill="#fbf6f8"/><circle cx="9.5" cy="813.2" r="0.7" fill="#e3a6c0"/><circle cx="116.0" cy="810.6" r="1.2" fill="#e3a6c0"/><circle cx="135.0" cy="807.7" r="1.3" fill="#cf7fa4"/><circle cx="110.7" cy="831.8" r="1.6" fill="#6f7c32"/><circle cx="311.9" cy="828.1" r="1.9" fill="#f0d8e4"/><circle cx="217.0" cy="811.8" r="1.3" fill="#34421a"/><circle cx="269.3" cy="815.6" r="1.8" fill="#e3a6c0"/><circle cx="268.2" cy="837.0" r="1.7" fill="#d99ab8"/><circle cx="120.9" cy="845.4" r="1.3" fill="#34421a"/><circle cx="86.9" cy="841.9" r="2.1" fill="#cf7fa4"/><circle cx="236.8" cy="801.2" r="0.6" fill="#fbf6f8"/><circle cx="287.9" cy="806.1" r="1.4" fill="#cf7fa4"/><circle cx="131.8" cy="811.9" r="1.7" fill="#34421a"/><circle cx="301.0" cy="816.4" r="0.8" fill="#f2e4ec"/><circle cx="122.8" cy="811.9" r="1.6" fill="#f0d8e4"/><circle cx="88.0" cy="826.4" r="1.0" fill="#e2b3cb"/><circle cx="123.8" cy="815.5" r="1.3" fill="#f0d8e4"/><circle cx="191.9" cy="844.9" r="2.4" fill="#3b4a1c"/><circle cx="148.0" cy="824.4" r="1.6" fill="#e2b3cb"/><circle cx="211.4" cy="800.3" r="0.7" fill="#fbf6f8"/><circle cx="318.9" cy="845.7" r="2.5" fill="#2a3616"/><circle cx="311.3" cy="847.0" r="2.2" fill="#f2e4ec"/><circle cx="41.2" cy="804.2" r="1.3" fill="#d99ab8"/><circle cx="194.0" cy="828.3" r="1.8" fill="#f0d8e4"/><circle cx="47.2" cy="847.0" r="1.4" fill="#fbf6f8"/><circle cx="225.8" cy="808.3" r="1.0" fill="#2a3616"/><circle cx="23.9" cy="830.5" r="2.0" fill="#3b4a1c"/><circle cx="19.0" cy="807.1" r="1.4" fill="#e3a6c0"/><circle cx="287.8" cy="848.4" r="1.8" fill="#2a3616"/><circle cx="19.0" cy="848.0" r="2.2" fill="#ecc5d7"/><circle cx="233.0" cy="835.4" r="1.6" fill="#fbf6f8"/><circle cx="48.3" cy="810.5" r="1.5" fill="#2f3b18"/><circle cx="133.9" cy="828.0" r="2.0" fill="#2a3616"/><circle cx="259.2" cy="826.2" r="1.7" fill="#f0d8e4"/><circle cx="235.6" cy="822.3" r="1.2" fill="#e2b3cb"/><circle cx="205.9" cy="804.1" r="1.4" fill="#d99ab8"/><circle cx="293.4" cy="826.1" r="1.6" fill="#6f7c32"/><circle cx="23.7" cy="843.6" r="2.2" fill="#f2e4ec"/><circle cx="205.6" cy="839.6" r="1.9" fill="#e2b3cb"/><circle cx="20.1" cy="824.5" r="1.2" fill="#f2e4ec"/><circle cx="317.3" cy="820.9" r="1.8" fill="#6f7c32"/><circle cx="193.2" cy="794.5" r="1.2" fill="#d99ab8"/><circle cx="104.9" cy="804.2" r="1.0" fill="#b9588a"/><circle cx="20.8" cy="840.4" r="1.8" fill="#2f3b18"/><circle cx="136.2" cy="835.3" r="1.4" fill="#2a3616"/><circle cx="63.0" cy="816.6" r="1.0" fill="#e3a6c0"/><circle cx="168.6" cy="808.7" r="1.0" fill="#3b4a1c"/><circle cx="262.6" cy="833.1" r="1.9" fill="#34421a"/><circle cx="267.5" cy="816.9" r="1.4" fill="#3b4a1c"/><circle cx="182.6" cy="823.1" r="1.5" fill="#f0d8e4"/><circle cx="123.4" cy="801.6" r="0.7" fill="#f2e4ec"/><circle cx="195.5" cy="802.1" r="1.4" fill="#fbf6f8"/><circle cx="286.2" cy="843.6" r="1.4" fill="#3b4a1c"/><circle cx="115.2" cy="821.4" r="1.8" fill="#f2e4ec"/><circle cx="31.9" cy="845.5" r="1.2" fill="#2f3b18"/><circle cx="232.4" cy="820.4" r="1.8" fill="#f0d8e4"/><circle cx="19.6" cy="841.2" r="2.2" fill="#f2e4ec"/><circle cx="276.0" cy="814.2" r="1.2" fill="#b9588a"/><circle cx="12.6" cy="816.3" r="1.8" fill="#2a3616"/><circle cx="133.5" cy="829.6" r="2.0" fill="#f0d8e4"/><circle cx="133.2" cy="816.3" r="1.1" fill="#b9588a"/><circle cx="29.3" cy="848.5" r="2.3" fill="#f2e4ec"/><circle cx="197.2" cy="822.9" r="2.0" fill="#b9588a"/><circle cx="133.3" cy="817.8" r="1.8" fill="#b9588a"/><circle cx="266.3" cy="816.7" r="0.9" fill="#e3a6c0"/><circle cx="114.5" cy="822.7" r="1.4" fill="#fbf6f8"/><circle cx="268.2" cy="830.2" r="1.2" fill="#f0d8e4"/><circle cx="162.0" cy="814.3" r="0.8" fill="#fbf6f8"/><circle cx="13.6" cy="840.7" r="1.5" fill="#cf7fa4"/><circle cx="238.1" cy="810.4" r="0.8" fill="#34421a"/><circle cx="126.6" cy="834.7" r="0.9" fill="#d99ab8"/><circle cx="45.7" cy="813.5" r="1.8" fill="#cf7fa4"/><circle cx="28.9" cy="827.9" r="1.4" fill="#e3a6c0"/><circle cx="149.0" cy="829.7" r="2.2" fill="#fbf6f8"/><circle cx="54.8" cy="830.1" r="2.1" fill="#fbf6f8"/><circle cx="111.5" cy="838.5" r="2.2" fill="#ecc5d7"/><circle cx="36.9" cy="824.3" r="1.0" fill="#f0d8e4"/><circle cx="7.8" cy="797.6" r="1.1" fill="#34421a"/><circle cx="9.1" cy="839.9" r="2.0" fill="#6f7c32"/><circle cx="213.4" cy="841.2" r="1.3" fill="#f2e4ec"/><circle cx="267.0" cy="835.6" r="1.2" fill="#e2b3cb"/><circle cx="64.9" cy="810.7" r="1.2" fill="#f2e4ec"/><circle cx="279.0" cy="846.9" r="2.2" fill="#6f7c32"/><circle cx="20.5" cy="826.7" r="2.1" fill="#d99ab8"/><circle cx="199.6" cy="818.3" r="1.4" fill="#e2b3cb"/><circle cx="263.3" cy="831.0" r="2.0" fill="#f2e4ec"/><circle cx="162.5" cy="834.9" r="2.2" fill="#cf7fa4"/><circle cx="266.4" cy="822.1" r="1.8" fill="#d99ab8"/><circle cx="219.1" cy="836.7" r="2.2" fill="#34421a"/><circle cx="188.3" cy="824.6" r="1.6" fill="#e3a6c0"/><circle cx="272.0" cy="815.3" r="1.3" fill="#fbf6f8"/><circle cx="293.6" cy="831.6" r="1.3" fill="#34421a"/><circle cx="239.3" cy="835.9" r="1.2" fill="#d99ab8"/><circle cx="111.3" cy="845.8" r="1.9" fill="#b9588a"/><circle cx="248.3" cy="820.2" r="1.1" fill="#cf7fa4"/><circle cx="32.2" cy="833.6" r="1.1" fill="#6f7c32"/><circle cx="202.2" cy="830.1" r="1.1" fill="#34421a"/><circle cx="301.1" cy="823.0" r="1.5" fill="#e2b3cb"/><circle cx="32.2" cy="821.7" r="1.1" fill="#2a3616"/><circle cx="126.4" cy="791.5" r="0.8" fill="#cf7fa4"/><circle cx="139.8" cy="838.4" r="1.7" fill="#d99ab8"/><circle cx="286.8" cy="836.6" r="1.0" fill="#f0d8e4"/><circle cx="179.6" cy="818.1" r="1.0" fill="#cf7fa4"/><circle cx="298.4" cy="812.5" r="1.7" fill="#34421a"/><circle cx="193.3" cy="823.1" r="1.4" fill="#34421a"/><circle cx="45.3" cy="815.0" r="1.3" fill="#d99ab8"/><circle cx="69.3" cy="830.6" r="1.7" fill="#b9588a"/><circle cx="198.4" cy="817.9" r="1.6" fill="#b9588a"/><circle cx="99.3" cy="832.6" r="1.6" fill="#2f3b18"/><circle cx="162.3" cy="815.8" r="1.1" fill="#f0d8e4"/><circle cx="190.4" cy="829.6" r="1.7" fill="#6f7c32"/><circle cx="246.8" cy="848.5" r="1.8" fill="#3b4a1c"/><circle cx="204.2" cy="817.8" r="1.5" fill="#d99ab8"/><circle cx="86.5" cy="839.4" r="1.8" fill="#e3a6c0"/><circle cx="137.8" cy="846.9" r="1.8" fill="#f0d8e4"/><circle cx="126.1" cy="822.8" r="1.2" fill="#e3a6c0"/><circle cx="54.8" cy="815.7" r="1.8" fill="#cf7fa4"/><circle cx="209.7" cy="811.2" r="1.3" fill="#fbf6f8"/><circle cx="292.5" cy="810.9" r="1.4" fill="#f2e4ec"/><circle cx="312.9" cy="839.0" r="1.5" fill="#b9588a"/><circle cx="151.8" cy="818.1" r="1.7" fill="#34421a"/><circle cx="136.8" cy="793.0" r="0.8" fill="#d99ab8"/><circle cx="74.6" cy="810.2" r="1.1" fill="#34421a"/><circle cx="286.0" cy="812.2" r="1.4" fill="#2a3616"/><circle cx="256.2" cy="835.5" r="1.3" fill="#2a3616"/><circle cx="229.5" cy="810.1" r="1.4" fill="#b9588a"/><circle cx="195.7" cy="823.0" r="1.3" fill="#f2e4ec"/><circle cx="294.4" cy="810.0" r="0.9" fill="#f0d8e4"/><circle cx="17.0" cy="836.5" r="1.3" fill="#e3a6c0"/><circle cx="254.0" cy="843.9" r="1.2" fill="#f2e4ec"/><circle cx="17.2" cy="801.7" r="1.5" fill="#2a3616"/><circle cx="11.0" cy="821.3" r="1.4" fill="#e2b3cb"/><circle cx="154.4" cy="787.6" r="0.7" fill="#f2e4ec"/><circle cx="242.4" cy="813.5" r="1.0" fill="#e3a6c0"/><circle cx="162.8" cy="827.4" r="1.1" fill="#2f3b18"/><circle cx="77.7" cy="813.3" r="0.9" fill="#2a3616"/><circle cx="247.0" cy="810.8" r="0.8" fill="#2a3616"/><circle cx="277.9" cy="818.3" r="1.0" fill="#2f3b18"/><circle cx="173.3" cy="828.5" r="1.9" fill="#6f7c32"/><circle cx="119.4" cy="843.5" r="2.1" fill="#2a3616"/><circle cx="145.7" cy="833.0" r="1.6" fill="#ecc5d7"/><circle cx="84.9" cy="808.0" r="1.0" fill="#ecc5d7"/><circle cx="102.1" cy="816.2" r="1.1" fill="#ecc5d7"/><circle cx="70.5" cy="804.4" r="0.9" fill="#3b4a1c"/><circle cx="47.4" cy="830.5" r="1.2" fill="#ecc5d7"/><circle cx="5.7" cy="802.0" r="1.3" fill="#d99ab8"/><circle cx="136.9" cy="834.1" r="1.7" fill="#cf7fa4"/><circle cx="158.4" cy="821.7" r="1.7" fill="#ecc5d7"/><circle cx="305.3" cy="813.1" r="1.5" fill="#f0d8e4"/><circle cx="184.6" cy="842.4" r="1.6" fill="#3b4a1c"/><circle cx="41.0" cy="781.7" r="0.9" fill="#e3a6c0"/><circle cx="246.3" cy="814.2" r="0.9" fill="#d99ab8"/><circle cx="250.7" cy="832.9" r="1.2" fill="#d99ab8"/><circle cx="5.6" cy="819.3" r="1.0" fill="#d99ab8"/><circle cx="168.9" cy="821.1" r="1.3" fill="#2a3616"/><circle cx="204.8" cy="819.9" r="1.3" fill="#f2e4ec"/><circle cx="271.1" cy="816.7" r="1.7" fill="#cf7fa4"/><circle cx="266.6" cy="833.3" r="1.8" fill="#d99ab8"/><circle cx="170.0" cy="820.4" r="0.9" fill="#b9588a"/><circle cx="79.9" cy="822.3" r="1.5" fill="#34421a"/><circle cx="113.7" cy="842.1" r="1.3" fill="#2f3b18"/><circle cx="286.7" cy="820.3" r="1.3" fill="#2a3616"/><circle cx="143.8" cy="824.9" r="1.2" fill="#3b4a1c"/><circle cx="210.1" cy="817.2" r="1.6" fill="#cf7fa4"/><circle cx="290.7" cy="847.1" r="2.3" fill="#b9588a"/><circle cx="256.0" cy="825.2" r="1.0" fill="#b9588a"/><circle cx="111.8" cy="824.3" r="1.5" fill="#34421a"/><circle cx="30.4" cy="806.1" r="1.4" fill="#b9588a"/><circle cx="213.7" cy="844.2" r="1.7" fill="#6f7c32"/><circle cx="18.9" cy="820.1" r="1.5" fill="#2f3b18"/><circle cx="189.4" cy="813.1" r="1.1" fill="#cf7fa4"/><circle cx="183.0" cy="840.3" r="1.2" fill="#b9588a"/><circle cx="159.2" cy="848.6" r="1.6" fill="#fbf6f8"/><circle cx="66.2" cy="832.6" r="1.8" fill="#3b4a1c"/><circle cx="134.8" cy="831.6" r="1.1" fill="#ecc5d7"/><circle cx="8.7" cy="816.2" r="1.6" fill="#ecc5d7"/><circle cx="105.2" cy="827.0" r="2.1" fill="#2f3b18"/><circle cx="272.1" cy="796.8" r="0.7" fill="#2f3b18"/><circle cx="50.8" cy="825.6" r="1.2" fill="#6f7c32"/><circle cx="113.9" cy="829.1" r="1.4" fill="#fbf6f8"/><circle cx="283.2" cy="828.7" r="2.0" fill="#ecc5d7"/><circle cx="299.6" cy="808.5" r="0.7" fill="#e2b3cb"/><circle cx="312.0" cy="813.7" r="1.6" fill="#e3a6c0"/><circle cx="156.2" cy="838.1" r="1.9" fill="#f0d8e4"/><circle cx="301.1" cy="802.0" r="0.8" fill="#34421a"/><circle cx="307.8" cy="811.0" r="1.0" fill="#b9588a"/><circle cx="19.6" cy="831.2" r="1.8" fill="#cf7fa4"/><circle cx="265.3" cy="823.7" r="1.8" fill="#3b4a1c"/><circle cx="222.5" cy="826.5" r="1.0" fill="#e3a6c0"/><circle cx="135.0" cy="828.0" r="1.3" fill="#2a3616"/><circle cx="168.9" cy="832.3" r="1.1" fill="#cf7fa4"/><circle cx="296.9" cy="813.4" r="1.3" fill="#2a3616"/><circle cx="158.0" cy="800.5" r="1.0" fill="#d99ab8"/><circle cx="11.3" cy="793.3" r="1.0" fill="#3b4a1c"/><circle cx="49.8" cy="785.1" r="1.4" fill="#d99ab8"/><circle cx="33.5" cy="844.8" r="1.7" fill="#2a3616"/><circle cx="77.3" cy="801.8" r="0.9" fill="#f2e4ec"/><circle cx="309.7" cy="840.6" r="1.8" fill="#e3a6c0"/><circle cx="173.7" cy="827.0" r="1.0" fill="#ecc5d7"/><circle cx="256.2" cy="823.3" r="0.9" fill="#e2b3cb"/><circle cx="144.7" cy="826.6" r="1.9" fill="#f2e4ec"/><circle cx="137.8" cy="816.3" r="0.8" fill="#fbf6f8"/><circle cx="238.6" cy="823.0" r="2.0" fill="#6f7c32"/><circle cx="196.3" cy="830.6" r="1.9" fill="#2f3b18"/><circle cx="124.8" cy="807.3" r="0.7" fill="#f2e4ec"/><circle cx="54.4" cy="842.1" r="2.0" fill="#f0d8e4"/><circle cx="277.3" cy="815.0" r="1.5" fill="#cf7fa4"/><circle cx="288.5" cy="801.8" r="1.1" fill="#e3a6c0"/><circle cx="271.7" cy="829.0" r="1.4" fill="#f0d8e4"/><circle cx="67.9" cy="811.6" r="1.2" fill="#3b4a1c"/><circle cx="147.0" cy="844.0" r="2.0" fill="#f2e4ec"/><circle cx="310.3" cy="828.2" r="1.9" fill="#cf7fa4"/><circle cx="11.0" cy="827.1" r="1.1" fill="#6f7c32"/><circle cx="24.2" cy="805.2" r="0.7" fill="#e3a6c0"/><circle cx="278.1" cy="806.6" r="1.0" fill="#f2e4ec"/><circle cx="236.3" cy="832.6" r="1.3" fill="#cf7fa4"/><circle cx="40.2" cy="836.3" r="1.7" fill="#2f3b18"/><circle cx="209.1" cy="837.4" r="2.0" fill="#d99ab8"/><circle cx="57.7" cy="847.4" r="1.6" fill="#f2e4ec"/><circle cx="303.0" cy="798.7" r="0.9" fill="#e3a6c0"/><circle cx="95.8" cy="811.9" r="1.7" fill="#2a3616"/><circle cx="179.7" cy="830.0" r="1.9" fill="#f0d8e4"/><circle cx="319.1" cy="829.0" r="2.1" fill="#3b4a1c"/><circle cx="88.5" cy="805.0" r="1.2" fill="#e2b3cb"/><circle cx="305.0" cy="843.9" r="2.0" fill="#3b4a1c"/><circle cx="45.2" cy="838.0" r="1.9" fill="#f2e4ec"/><circle cx="7.7" cy="812.9" r="1.6" fill="#2a3616"/><circle cx="4.7" cy="811.1" r="0.7" fill="#e3a6c0"/><circle cx="208.5" cy="822.3" r="1.5" fill="#cf7fa4"/><circle cx="157.7" cy="810.3" r="0.8" fill="#f0d8e4"/><circle cx="118.1" cy="820.4" r="1.6" fill="#b9588a"/></g>
</g>
<rect x="1042" y="306" width="2" height="400" fill="#8ea6d8"/><rect x="1042" y="700" width="2" height="147" fill="#4a4a34"/>
</svg>
<!-- ================= Explorer window ================= -->
<div class="win" id="exp" style="left:0;top:0;width:800px;height:599px;border-radius:0 8px 0 0">
 <div class="tb" style="border-radius:0 8px 0 0"></div>
 <svg class="abs" style="left:5px;top:6px" width="18" height="16" viewBox="0 0 18 16"><path d="M1 4.5Q1 3 2.5 3H6L7.5 4.5H13.5Q15 4.5 15 6V12.5Q15 14 13.5 14H2.5Q1 14 1 12.5Z" fill="#f3d46b" stroke="#a8862a" stroke-width="1"/><path d="M1.5 7H15" stroke="#fff3b8" stroke-width="1.4"/></svg>
 <div class="tt" style="left:26px;top:7.500px">中国交响乐团<span class="m">.-.[</span>枫桥夜泊<span class="m">]</span></div>
 <div class="cb" style="left:727px"><i class="abs" style="left:4px;top:12px;width:8px;height:3px;background:#fff"></i></div>
 <div class="cb" style="left:750px"><i class="abs" style="left:4px;top:3px;width:11px;height:11px;border:1px solid #fff;border-top-width:3px"></i></div>
 <div class="cb x" style="left:773px"><svg class="abs" style="left:3px;top:3px" width="13" height="13"><path d="M1.5 1.5L11.5 11.5M11.5 1.5L1.5 11.5" stroke="#fff" stroke-width="2.2"/></svg></div>
 <!-- menu bar -->
 <div class="menu" style="left:4px;top:29px;width:792px;height:22px;background:#f1f0e8">
  <span style="left:10px">文件<span class="l" style="position:static">(F)</span></span>
  <span style="left:68px">编辑<span class="l" style="position:static">(E)</span></span>
  <span style="left:126px">查看<span class="l" style="position:static">(V)</span></span>
  <span style="left:183px">收藏<span class="l" style="position:static">(A)</span></span>
  <span style="left:241px">工具<span class="l" style="position:static">(T)</span></span>
  <span style="left:299px">帮助<span class="l" style="position:static">(H)</span></span>
  <div class="abs" style="left:752px;top:0;width:40px;height:22px;background:#fff;border-left:1px solid #d8d2bd"></div>
  <svg class="abs" style="left:762px;top:2px" width="22" height="19" viewBox="0 0 22 19"><path d="M3 3Q6 1 9.5 3L8.3 8.5Q5 6.8 1.7 8.6Z" fill="#e8623a"/><path d="M11 3.3Q14.5 5.2 18.5 3L17 8.6Q13.5 10.6 9.8 8.8Z" fill="#7cba4a"/><path d="M1.4 10Q4.8 8.2 8 10L6.6 15.6Q3.5 13.8 0 15.6Z" fill="#4a82d8"/><path d="M9.5 10.4Q13 12.3 16.8 10.2L15.3 15.8Q11.8 17.8 8.1 16Z" fill="#f2bf3a"/></svg>
 </div>
 <div class="abs" style="left:4px;top:51px;width:792px;height:1px;background:#d8d2bd"></div>
 <!-- toolbar -->
 <div class="abs" id="tbar" style="left:4px;top:52px;width:792px;height:40px;background:linear-gradient(#f5f4ee,#efede2 60%,#e9e6d8)">
 </div>
 <!-- toolbar icons (page coords) -->
 <svg class="abs" style="left:0;top:52px" width="800" height="40" viewBox="0 52 800 40">
  <defs>
   <radialGradient id="gback" cx=".4" cy=".3" r=".8"><stop offset="0" stop-color="#8edb6a"/><stop offset=".55" stop-color="#3fa62e"/><stop offset="1" stop-color="#1f7a1c"/></radialGradient>
   <radialGradient id="gfwd" cx=".4" cy=".3" r=".8"><stop offset="0" stop-color="#dcdcd8"/><stop offset=".6" stop-color="#b4b4ae"/><stop offset="1" stop-color="#9a9a94"/></radialGradient>
   <linearGradient id="gfold" x1="0" y1="0" x2="1" y2="1"><stop offset="0" stop-color="#fbeb9c"/><stop offset="1" stop-color="#e4b93e"/></linearGradient>
   <linearGradient id="gpage" x1="0" y1="0" x2="1" y2="1"><stop offset="0" stop-color="#ffffff"/><stop offset="1" stop-color="#b9cdf0"/></linearGradient>
  </defs>
  <!-- back -->
  <circle cx="25" cy="72" r="11" fill="url(#gback)" stroke="#2a7d22" stroke-width="1"/>
  <path d="M18 72L25 65.5V69.5H32V74.5H25V78.5Z" fill="#fff"/>
  <path d="M75 70.5H81L78 73.8Z" fill="#000"/>
  <!-- forward -->
  <circle cx="105" cy="72" r="11" fill="url(#gfwd)" stroke="#a6a6a0" stroke-width="1"/>
  <path d="M112 72L105 65.5V69.5H98V74.5H105V78.5Z" fill="#f4f4f2"/>
  <path d="M126 70.5H132L129 73.8Z" fill="#c4c2b6"/>
  <!-- up folder -->
  <path d="M144.5 69L151 67.5L153 69.5L161 68L163 78.5L146.5 82.5Z" fill="url(#gfold)" stroke="#c49a2c" stroke-width=".8"/>
  <path d="M148 73L164 70L160 80.5L146.5 82.5Z" fill="#f6dc78" stroke="#c49a2c" stroke-width=".6"/>
  <path d="M150.5 66.5L155.5 60.5L161.5 66H158.3Q159.5 74 153 80L151 78.5Q155.5 73 154 66.3Z" fill="#3fae3a" stroke="#1c7a1e" stroke-width=".8"/>
  <!-- sep -->
  <path d="M171.5 55V90" stroke="#c9c5b2" stroke-width="1"/><path d="M172.5 55V90" stroke="#fff" stroke-width="1"/>
  <!-- search -->
  <path d="M181 82L190 73" stroke="#c88a52" stroke-width="3.6" stroke-linecap="round"/>
  <path d="M181.3 81.3L189.5 73" stroke="#f1c9a0" stroke-width="1.2" stroke-linecap="round"/>
  <circle cx="195" cy="68" r="7" fill="#d6ecfa" stroke="#8fb0dc" stroke-width="1.6"/>
  <path d="M190.5 66.5Q192 62.5 196 62.3" stroke="#fff" stroke-width="1.6" fill="none"/>
  <!-- folders -->
  <path d="M243 64L248 62.5L250 64.5L256 63.5L257.5 78L244.5 80Z" fill="url(#gfold)" stroke="#c9a436" stroke-width=".8"/>
  <path d="M248.5 67L254 65.5L256 67.5L263 66.5L264.5 80L250 82.5Z" fill="url(#gfold)" stroke="#c9a436" stroke-width=".8"/>
  <path d="M251.5 72L265 70L263 80.3L250 82.5Z" fill="#f8e38a" stroke="#c9a436" stroke-width=".6"/>
  <!-- refresh -->
  <path d="M322 62.5L334 60.5L339.5 65.5L340 82L323.5 83.5Z" fill="url(#gpage)" stroke="#7f9ccf" stroke-width=".9"/>
  <path d="M334 60.5L334.5 66L339.5 65.5" fill="#e4ecfa" stroke="#7f9ccf" stroke-width=".7"/>
  <path d="M326.5 71.5Q327.5 66.5 332.5 66.5L332.3 64.8L337 68L332.8 71.2L332.6 69.3Q329.8 69.3 329.3 71.6Z" fill="#2fa03a"/>
  <path d="M336.5 73.5Q335.5 78.5 330.5 78.5L330.7 80.2L326 77L330.2 73.8L330.4 75.7Q333.2 75.7 333.7 73.4Z" fill="#2fa03a"/>
  <!-- sep -->
  <path d="M349.5 55V90" stroke="#c9c5b2" stroke-width="1"/><path d="M350.5 55V90" stroke="#fff" stroke-width="1"/>
  <!-- scissors -->
  <path d="M363.800 60.500L366 60.800L371.500 73.500L369 74.500Z" fill="#f4f6fa" stroke="#5a6478" stroke-width=".8"/>
  <path d="M376.200 60.500L374 60.800L368.500 73.500L371 74.500Z" fill="#f4f6fa" stroke="#5a6478" stroke-width=".8"/>
  <ellipse cx="365.800" cy="77.700" rx="2.900" ry="3.900" fill="#dfe8fa" stroke="#1c3f94" stroke-width="2.400" transform="rotate(28 365.800 77.700)"/>
  <ellipse cx="374.400" cy="77.700" rx="2.900" ry="3.900" fill="#dfe8fa" stroke="#1c3f94" stroke-width="2.400" transform="rotate(-28 374.400 77.700)"/>
  <!-- copy -->
  <path d="M392.500 60.500H401.500L405.500 64.500V77.500H392.500Z" fill="url(#gpage)" stroke="#7f8fb4" stroke-width=".9"/>
  <path d="M401.500 60.500V64.500H405.500" fill="none" stroke="#7f8fb4" stroke-width=".7"/>
  <path d="M398.500 65.500H408L412.500 70V82.500H398.500Z" fill="url(#gpage)" stroke="#7f8fb4" stroke-width=".9"/>
  <path d="M408 65.500V70H412.500" fill="#eef3fc" stroke="#7f8fb4" stroke-width=".7"/>
  <path d="M401 72.500H410M401 75H410M401 77.500H410M401 80H410M394.500 66H397M394.500 68.500H397M394.500 71H397" stroke="#7aa4e0" stroke-width="1.100"/>
  <!-- paste -->
  <path d="M424.500 63Q424.500 61.500 426 61.500H440Q441.500 61.500 441.500 63V80Q441.500 81.500 440 81.500H426Q424.500 81.500 424.500 80Z" fill="url(#gfold)" stroke="#c8a43c" stroke-width=".9"/>
  <path d="M429 63.500Q429 60 433 60Q437 60 437 63.500Z" fill="#b8bcc8" stroke="#6a7080" stroke-width=".8"/>
  <path d="M430.500 66.500H439.500L444 71V83H430.500Z" fill="url(#gpage)" stroke="#7f8fb4" stroke-width=".9"/>
  <path d="M439.500 66.500V71H444" fill="#eef3fc" stroke="#7f8fb4" stroke-width=".7"/>
  <path d="M433 73.500H441.500M433 76H441.500M433 78.500H441.500" stroke="#7aa4e0" stroke-width="1.100"/>
  <!-- delete X -->
  <path d="M457.500 63.500Q466 70 476 81" stroke="#d8421e" stroke-width="3.200" stroke-linecap="round" fill="none"/>
  <path d="M474.500 63.500Q465 71 457.500 81.500" stroke="#e04e20" stroke-width="3.200" stroke-linecap="round" fill="none"/>
  <!-- undo -->
  <path d="M499 80.500Q507.500 76 506.300 70Q504.800 64.500 498.500 65Q495 65.500 492.500 69" stroke="#1c469c" stroke-width="5" fill="none"/>
  <path d="M499 80.500Q507.500 76 506.300 70Q504.800 64.500 498.500 65Q495 65.500 492.500 69" stroke="#2f6ad2" stroke-width="3.600" fill="none"/>
  <path d="M487.500 63.500L488 76.500L499.500 72.500Z" fill="#2f6ad2" stroke="#1c469c" stroke-width=".7"/>
  <!-- properties -->
  <path d="M523 61.500H534.500L540.500 67.500V84H523Z" fill="url(#gpage)" stroke="#7f9ccf" stroke-width=".9"/>
  <path d="M534.500 61.500V67.500H540.500" fill="#eef3fc" stroke="#7f9ccf" stroke-width=".7"/>
  <path d="M526.500 73.500L529.500 77.500L536.500 69" stroke="#de3a24" stroke-width="2.200" fill="none"/>
  <!-- sep -->
  <path d="M550.500 55V90" stroke="#c9c5b2" stroke-width="1"/><path d="M551.500 55V90" stroke="#fff" stroke-width="1"/>
  <!-- folder options -->
  <path d="M559 66.500L565 64.500L567 66.500L576.500 65L578 79.500L561 83Z" fill="url(#gfold)" stroke="#c9a436" stroke-width=".8"/>
  <path d="M563 71L580.500 68L577.500 80L561 83Z" fill="#f8e38a" stroke="#c9a436" stroke-width=".6"/>
  <path d="M566 72.500L569.500 77.500L577.500 65.500" stroke="#de3a24" stroke-width="2.300" fill="none"/>
  <!-- views -->
  <rect x="589.500" y="63.500" width="23" height="18" fill="#fff" stroke="#4a74c8" stroke-width="1"/>
  <rect x="590" y="64" width="22" height="3.500" fill="#3f72d4"/>
  <g><rect x="593" y="69.500" width="4" height="3.500" fill="#9aa4b2"/><rect x="599.500" y="69.500" width="4" height="3.500" fill="#3f6ed0"/><rect x="606" y="69.500" width="4" height="3.500" fill="#2f9a3a"/>
  <rect x="593" y="75" width="4" height="3.500" fill="#d88a5a"/><rect x="599.500" y="75" width="4" height="3.500" fill="#1c3f9a"/><rect x="606" y="75" width="4" height="3.500" fill="#b8a83a"/></g>
  <path d="M615.500 70.500H621.500L618.500 73.800Z" fill="#000"/>
 </svg>
 <div class="abs" style="left:41px;top:65px">后退</div>
 <div class="abs" style="left:207px;top:65px">搜索</div>
 <div class="abs" style="left:270px;top:65px">文件夹</div>
 <!-- address bar -->
 <div class="abs" style="left:4px;top:92px;width:792px;height:1px;background:#cfcab4"></div>
 <div class="abs" style="left:4px;top:93px;width:792px;height:22px;background:#f0eee3"></div>
 <div class="abs" style="left:10px;top:96px;color:#7f7c70">地址<span class="l">(D)</span></div>
 <div class="abs" style="left:56px;top:93px;width:679px;height:21px;background:#fff;border:1px solid #8aa0c8"></div>
 <svg class="abs" style="left:58px;top:96px" width="18" height="15" viewBox="0 0 18 15"><path d="M1.5 3.500Q1.5 2 3 2H6.500L8 3.500H13.500Q15 3.500 15 5V11.500Q15 13 13.500 13H3Q1.500 13 1.500 11.500Z" fill="#f3d46b" stroke="#a8862a" stroke-width="1"/><path d="M2 6H14.500" stroke="#fff3b8" stroke-width="1.400"/></svg>
 <div class="abs" style="left:79px;top:97px;white-space:nowrap"><span class="l">E:\HIFI\</span>中国交响乐团<span class="l">.-.[</span>枫桥夜泊<span class="l">]</span></div>
 <div class="abs" style="left:718px;top:95px;width:16px;height:18px;background:linear-gradient(#d0dcfa,#b4c8f4);border:1px solid #b8c8f0;border-radius:2px"></div>
 <svg class="abs" style="left:721px;top:100px" width="10" height="8"><path d="M1.500 1.500L5 5.500L8.500 1.500" stroke="#4a608c" stroke-width="2" fill="none"/></svg>
 <div class="abs" style="left:741px;top:95px;width:18px;height:18px;border-radius:2px;background:linear-gradient(135deg,#5cc05a,#1f8a2a)"></div>
 <svg class="abs" style="left:743px;top:98px" width="14" height="12"><path d="M1.500 6H11M7 1.500L11.500 6L7 10.500" stroke="#fff" stroke-width="2" fill="none"/></svg>
 <div class="abs" style="left:764px;top:97px">转到</div>
 <!-- left pane -->
 <div class="abs" style="left:4px;top:115px;width:210px;height:480px;background:linear-gradient(#7aa0e6,#6476d6)"></div>
 <div class="abs" style="left:4px;top:115px;width:1px;height:480px;background:#e8f0fc"></div><div class="abs" style="left:5px;top:115px;width:1px;height:479px;background:#5f72b8"></div><div class="abs" style="left:4px;top:594px;width:792px;height:1px;background:#eef3fc"></div>
 <!-- panel 1 -->
 <div class="ph" style="top:127px">文件和文件夹任务</div>
 <div class="chev" style="top:130px"><svg width="14" height="14" style="display:block"><path d="M4 6.500L7 3.500L10 6.500M4 10.500L7 7.500L10 10.500" stroke="#14296e" stroke-width="1.500" fill="none"/></svg></div>
 <div class="pb" style="top:152px;height:85px"></div>
 <svg class="abs" style="left:29px;top:161px" width="19" height="17" viewBox="0 0 19 17"><path d="M1.500 5L7 3.500L8.500 5.500L15 4.500L16 13L2.500 15.500Z" fill="#f6dc78" stroke="#c49a2c" stroke-width=".8"/><path d="M4 8.500L17 6.500L15.500 13.500L2.500 15.500Z" fill="#fbeb9c" stroke="#c49a2c" stroke-width=".6"/><circle cx="15.500" cy="3.500" r="2.300" fill="#f08a2a"/></svg>
 <div class="lk" style="top:161px">创建一个新文件夹</div>
 <svg class="abs" style="left:29px;top:180px" width="19" height="19" viewBox="0 0 19 19"><circle cx="9.500" cy="9.500" r="8" fill="#2a62b8" stroke="#1c3f7a" stroke-width=".8"/><path d="M4 6Q7 2.500 11 3Q12 6 9 8Q5.500 9 4 6Z" fill="#4aa84a"/><path d="M9.500 8.500L15 14H12V17H7V14H4Z" fill="#4fc24a" stroke="#1f7a22" stroke-width=".7"/></svg>
 <div class="lk" style="top:181px">将这个文件夹发布到</div>
 <div class="lk l" style="top:194px">Web</div>
 <svg class="abs" style="left:29px;top:207px" width="19" height="17" viewBox="0 0 19 17"><path d="M1.500 4L7 2.500L8.500 4.500L15 3.500L16 11L2.500 13.500Z" fill="#f6dc78" stroke="#c49a2c" stroke-width=".8"/><path d="M4 7L17 5L15.500 11.500L2.500 13.500Z" fill="#fbeb9c" stroke="#c49a2c" stroke-width=".6"/><path d="M1 12.500Q5 10 9 12.500L9 15.500Q5 16.500 1 15.500Z" fill="#e9b48a" stroke="#7a4a2a" stroke-width=".7"/></svg>
 <div class="lk" style="top:209px">共享此文件夹</div>
 <!-- panel 2 -->
 <div class="ph" style="top:252px">其它位置</div>
 <div class="chev" style="top:255px"><svg width="14" height="14" style="display:block"><path d="M4 6.500L7 3.500L10 6.500M4 10.500L7 7.500L10 10.500" stroke="#14296e" stroke-width="1.500" fill="none"/></svg></div>
 <div class="pb" style="top:277px;height:117px"></div>
 <svg class="abs" style="left:29px;top:287px" width="19" height="16" viewBox="0 0 19 16"><path d="M1.500 4Q1.500 2.500 3 2.500H6.500L8 4H14Q15.500 4 15.500 5.500V12.500Q15.500 14 14 14H3Q1.500 14 1.500 12.500Z" fill="#f6dc78" stroke="#b8902a" stroke-width="1"/><path d="M2 6.500H15" stroke="#fff3b8" stroke-width="1.400"/></svg>
 <div class="lk l" style="top:286px">HIFI</div>
 <svg class="abs" style="left:29px;top:306px" width="19" height="17" viewBox="0 0 19 17"><path d="M1.500 6Q1.500 4.500 3 4.500H14Q15.500 4.500 15.500 6V13.500Q15.500 15 14 15H3Q1.500 15 1.500 13.500Z" fill="#f6dc78" stroke="#b8902a" stroke-width="1"/><path d="M4.500 1.500H12L14 3.500V11.500H4.500Z" fill="#fff" stroke="#7f9ccf" stroke-width=".8"/><path d="M6 5H12.500M6 7.500H12.500" stroke="#9ab4e4" stroke-width="1"/><path d="M2 10H15V13.500Q15 14.500 14 14.500H3Q2 14.500 2 13.500Z" fill="#f3d46b"/></svg>
 <div class="lk" style="top:306px">我的文档</div>
 <svg class="abs" style="left:29px;top:327px" width="19" height="16" viewBox="0 0 19 16"><path d="M1.500 4Q1.500 2.500 3 2.500H6.500L8 4H14Q15.500 4 15.500 5.500V12.500Q15.500 14 14 14H3Q1.500 14 1.500 12.500Z" fill="#f6dc78" stroke="#b8902a" stroke-width="1"/><path d="M2 6.500H15" stroke="#fff3b8" stroke-width="1.400"/></svg>
 <div class="lk" style="top:326px">共享文档</div>
 <svg class="abs" style="left:29px;top:346px" width="19" height="17" viewBox="0 0 19 17"><path d="M5 1.500L14.500 2.500L13.500 10.500L4 9.500Z" fill="#7cc4f0" stroke="#7a8fb0" stroke-width=".9"/><path d="M6.500 10L12 10.500L13 13.500Q9 15.500 4.500 13.500Z" fill="#d8dce8" stroke="#8a92a8" stroke-width=".7"/><path d="M6 3L10 3.400L9.500 6.500L5.700 6Z" fill="#c8ecff"/></svg>
 <div class="lk" style="top:346px">我的电脑</div>
 <svg class="abs" style="left:29px;top:365px" width="19" height="19" viewBox="0 0 19 19"><circle cx="5" cy="5.500" r="4" fill="#2f9a4a" stroke="#1c5a8a" stroke-width=".7"/><path d="M7 4L16.500 5L15.500 12.500L6 11.500Z" fill="#7cc4f0" stroke="#7a8fb0" stroke-width=".9"/><path d="M8.500 12L14 12.500L15 15.500Q11 17.500 6.500 15.500Z" fill="#d8dce8" stroke="#8a92a8" stroke-width=".7"/></svg>
 <div class="lk" style="top:366px">网上邻居</div>
 <!-- panel 3 -->
 <div class="ph" style="top:409px">详细信息</div>
 <div class="chev" style="top:412px"><svg width="14" height="14" style="display:block"><path d="M4 6.500L7 3.500L10 6.500M4 10.500L7 7.500L10 10.500" stroke="#14296e" stroke-width="1.500" fill="none"/></svg></div>
 <div class="pb" style="top:434px;height:86px"></div>
 <div class="abs" style="left:32px;top:443px;width:160px;font-weight:bold;line-height:12px;letter-spacing:.8px;white-space:nowrap">中国交响乐团<span class="lb">.-.[</span>枫桥夜<br>泊<span class="lb">]</span></div>
 <div class="abs" style="left:32px;top:467px">文件夹</div>
 <div class="abs" style="left:32px;top:485px;white-space:nowrap;line-height:12px">修改日期<span class="l">: 2006</span>年<span class="l">11</span>月<span class="l">15</span>日<span class="l">,</span><br><span class="l">14:06</span></div>
 <!-- file list -->
 <div class="abs" style="left:214px;top:115px;width:582px;height:463px;background:#fff"></div>
 <div class="abs" style="left:214px;top:134px;width:283px;height:444px;background:#f7f7f7"></div>
 <div class="abs" style="left:214px;top:115px;width:582px;height:19px;background:linear-gradient(#ebeadb 0,#ebeadb 15px,#d6d2c2 18px,#cbc7b8 19px)"></div>
 <div class="abs" style="left:496px;top:118px;width:1px;height:13px;background:#c5c2b2"></div><div class="abs" style="left:497px;top:118px;width:1px;height:13px;background:#fff"></div>
 <div class="abs" style="left:592px;top:118px;width:1px;height:13px;background:#c5c2b2"></div><div class="abs" style="left:593px;top:118px;width:1px;height:13px;background:#fff"></div>
 <div class="abs" style="left:712px;top:118px;width:1px;height:13px;background:#c5c2b2"></div><div class="abs" style="left:713px;top:118px;width:1px;height:13px;background:#fff"></div>
 <div class="abs" style="left:226px;top:118px">名称</div>
 <svg class="abs" style="left:259px;top:121px" width="10" height="7"><path d="M0 6.500L5 .500L10 6.500Z" fill="#aca899"/></svg>
 <div class="abs" style="left:563px;top:118px">大小</div>
 <div class="abs" style="left:601px;top:118px">类型</div>
 <div class="abs" style="left:723px;top:118px;white-space:nowrap">修改日期</div>
 <!-- rows -->
 <svg class="abs" style="left:218px;top:134px" width="17" height="18" viewBox="0 0 17 18"><path d="M1.500 1V16H14V5.500L10 1.500" fill="#fff" stroke="#111" stroke-width="1.300"/><path d="M4 5H8.500Q10.500 6.500 9 8L10.500 9.500L8 10L6 9L4.500 11.500Z" fill="#4aa4dc"/><path d="M5 5.500H8Q9 6.500 8 7.500L5 8Z" fill="#8fd0f0"/></svg>
 <svg class="abs" style="left:218px;top:152px" width="17" height="18" viewBox="0 0 17 18"><path d="M1.500 1V16H14V5.500L10 1.500" fill="#fff" stroke="#111" stroke-width="1.300"/><path d="M4 5H8.500Q10.500 6.500 9 8L10.500 9.500L8 10L6 9L4.500 11.500Z" fill="#4aa4dc"/><path d="M5 5.500H8Q9 6.500 8 7.500L5 8Z" fill="#8fd0f0"/></svg>
 <div class="abs" style="left:236px;top:136px;white-space:nowrap">中国交响乐团<span class="l">.-.[</span>枫桥夜泊<span class="l">].</span>专辑<span class="l">.(ape).ape</span></div>
 <div class="abs" style="left:236px;top:153px;white-space:nowrap">中国交响乐团<span class="l">.-.[</span>枫桥夜泊<span class="l">].</span>专辑<span class="l">.(ape).cue</span></div>
 <div class="abs l" style="left:500px;top:136px;width:87px;text-align:right;white-space:nowrap">239,538 KB</div>
 <div class="abs l" style="left:500px;top:153px;width:87px;text-align:right;white-space:nowrap">4 KB</div>
 <div class="abs" style="left:600px;top:136px;white-space:nowrap"><span class="l">APE </span>文件</div>
 <div class="abs" style="left:600px;top:153px;white-space:nowrap"><span class="l">CUE </span>文件</div>
 <div class="abs l" style="left:719px;top:136px;white-space:nowrap;width:77px;overflow:hidden">2006-11-15 10:</div>
 <div class="abs l" style="left:719px;top:153px;white-space:nowrap;width:77px;overflow:hidden">2006-11-15 18:</div>
 <!-- h scrollbar -->
 <div class="abs" style="left:214px;top:578px;width:582px;height:17px;background:#f6f5f0"></div>
 <div class="abs" style="left:214px;top:578px;width:16px;height:16px;background:linear-gradient(#d2defb,#bccdf6);border:1px solid #fff;border-radius:2px"></div>
 <svg class="abs" style="left:217px;top:581px" width="9" height="10"><path d="M6.500 1.500L2.500 5L6.500 8.500" stroke="#3f5a94" stroke-width="2" fill="none"/></svg>
 <div class="abs" style="left:231px;top:578px;width:565px;height:16px;background:linear-gradient(#c8d6fb 0,#c1d0f8 60%,#b0c2f0 100%);border:1px solid #fff;border-right:0;border-radius:2px 0 0 2px"></div>
</div>
<!-- ================= desktop icons ================= -->
<svg class="abs" style="left:12px;top:608px" width="36" height="36" viewBox="0 0 36 36">
 <defs><radialGradient id="gball" cx=".35" cy=".3" r=".8"><stop offset="0" stop-color="#b8f0a0"/><stop offset=".35" stop-color="#2fb43a"/><stop offset="1" stop-color="#0c6a1c"/></radialGradient></defs>
 <circle cx="8.500" cy="12" r="5.500" fill="url(#gball)"/><circle cx="21" cy="14.500" r="12.500" fill="url(#gball)"/>
 <path d="M12 30.500H32" stroke="#1c2a1c" stroke-width="2.500"/><path d="M19 27H25V30H19Z" fill="#3a4a3a"/>
</svg>
<div class="sc" style="left:15px;top:631px"></div><svg class="abs" style="left:16px;top:632px" width="9" height="9"><path d="M2 7.500Q2.500 3.500 6 3.500M4 2H7.500V5.500" stroke="#000" stroke-width="1.500" fill="none"/></svg>
<div class="dl" style="left:-10px;top:647px;width:80px">宽带我世界</div>
<svg class="abs" style="left:88px;top:610px" width="36" height="34" viewBox="0 0 36 34">
 <path d="M9.500 1.500H25L32.500 9V31.500H9.500Z" fill="#f4f8ff" stroke="#7a96c8" stroke-width="1"/><path d="M25 1.500V9H32.500" fill="#d4e0f4" stroke="#7a96c8" stroke-width=".8"/>
 <path d="M13 14H29M13 17H29M13 20H29M13 23H29M13 26H29" stroke="#a8bce0" stroke-width="1"/>
 <rect x="2" y="3" width="17" height="15" fill="#2a52a8" stroke="#dfe8f8" stroke-width="1"/><path d="M5 6.500L7.500 14.500L10.500 8L13 14.500L16 6.500" stroke="#fff" stroke-width="1.800" fill="none"/>
</svg>
<div class="dl" style="left:66px;top:647px;width:80px">你好<span class="l">.doc</span></div>
<svg class="abs" style="left:13px;top:685px" width="36" height="34" viewBox="13 685 36 34"><defs><linearGradient id="gdu" x1="0" y1="0" x2="1" y2="1"><stop offset="0" stop-color="#5cd45a"/><stop offset=".6" stop-color="#2aa436"/><stop offset="1" stop-color="#136a20"/></linearGradient></defs><path d="M30 686.500L45 699.500H17Z" fill="url(#gdu)"/><path d="M17 703.500H45L31 717.500Z" fill="url(#gdu)"/><path d="M17 699.500H45L43 701H19Z" fill="#0f5a1a"/></svg>
<div class="sc" style="left:15px;top:707px"></div><svg class="abs" style="left:16px;top:708px" width="9" height="9"><path d="M2 7.500Q2.500 3.500 6 3.500M4 2H7.500V5.500" stroke="#000" stroke-width="1.500" fill="none"/></svg>
<div class="dl l" style="left:-10px;top:723px;width:80px">DU Meter</div>
<svg class="abs" style="left:92px;top:688px" width="30" height="30" viewBox="0 0 30 30"><path d="M2 6L9 3.500L11.500 6.500L24 4.500L26 22L4 27.500Z" fill="#e9cf72" stroke="#c9a84a" stroke-width=".8"/><path d="M4 10.500L27 7L25 22.500L4 27.500Z" fill="#f4e08a" stroke="#c9a84a" stroke-width=".6"/></svg>
<div class="dl" style="left:66px;top:723px;width:80px"><span class="l">n73</span>主题</div>
<svg class="abs" style="left:15px;top:762px" width="32" height="32" viewBox="0 0 32 32"><defs><linearGradient id="gfb" x1="0" y1="0" x2="1" y2="1"><stop offset="0" stop-color="#8a8a8a"/><stop offset=".45" stop-color="#3a3a3a"/><stop offset="1" stop-color="#101010"/></linearGradient></defs><rect x=".5" y=".5" width="31" height="31" rx="5" fill="url(#gfb)" stroke="#222" stroke-width="1"/><path d="M10 4L13.300 10.500Q16 9.300 18.700 10.500L22 4L24 14Q24 20 20 24L16 29.500L12 24Q8 20 8 14Z" fill="#f6f6f6"/><path d="M10 14Q13 14.500 14.800 18Q11 18.500 10 14ZM22 14Q19 14.500 17.200 18Q21 18.500 22 14Z" fill="#111"/><path d="M14.800 23L16 25.500L17.200 23" stroke="#333" stroke-width=".8" fill="none"/></svg>
<div class="sc" style="left:15px;top:783px"></div><svg class="abs" style="left:16px;top:784px" width="9" height="9"><path d="M2 7.500Q2.500 3.500 6 3.500M4 2H7.500V5.500" stroke="#000" stroke-width="1.500" fill="none"/></svg>
<div class="dl l" style="left:-10px;top:799px;width:80px">foobar2000</div>
<svg class="abs" style="left:90px;top:762px" width="33" height="33" viewBox="0 0 33 33"><rect width="33" height="33" fill="#ac2a3c"/><path d="M9 33Q6 18 14 10Q20 4 30 3Q22 8 19 15Q16 23 19 33Z" fill="#fff"/><path d="M21 33Q19 22 25 15Q29 11 33 10V14Q28 17 26 23Q25 28 26 33Z" fill="#fff"/><path d="M6 8Q10 2 18 1Q10 5 8 12Z" fill="#fff"/></svg>
<div class="sc" style="left:91px;top:783px"></div><svg class="abs" style="left:92px;top:784px" width="9" height="9"><path d="M2 7.500Q2.500 3.500 6 3.500M4 2H7.500V5.500" stroke="#000" stroke-width="1.500" fill="none"/></svg>
<div class="dl" style="left:66px;top:799px;width:80px">中原证券通<br>达信专<span class="l">...</span></div>
<div class="abs" style="left:16px;top:838px;width:31px;height:9px;background:#4a7ab4"></div><div class="abs" style="left:25px;top:840px;width:13px;height:7px;background:#eef2f8"></div>
<!-- ================= Notepad window ================= -->
<div class="win" id="np" style="left:319px;top:305px;width:723px;height:542px">
 <div class="tb" style="height:30px"></div>
 <div class="abs" style="left:0;top:1px;width:723px;height:541px">
 <svg class="abs" style="left:6px;top:7px" width="16" height="17" viewBox="0 0 16 17"><defs><linearGradient id="gnp" x1="0" y1="0" x2="1" y2="1"><stop offset="0" stop-color="#58c8dc"/><stop offset=".5" stop-color="#2f9cc8"/><stop offset="1" stop-color="#2468b0"/></linearGradient></defs><path d="M2 2.500L11 1L13.500 12.500L3.500 15.500Z" fill="url(#gnp)" stroke="#1c4a84" stroke-width=".9"/><path d="M1.800 2.500L3.300 15.300" stroke="#e8f4fa" stroke-width="1.800"/><path d="M3.500 15.500L13.500 12.500" stroke="#123a6a" stroke-width="1.200"/></svg>
 <div class="tt" style="left:26px;top:8px">中国交响乐团<span class="m">.-.[</span>枫桥夜泊<span class="m">].</span>专辑<span class="m">.(ape) - </span>记事本</div>
 <div class="cb" style="left:651px"><i class="abs" style="left:4px;top:12px;width:8px;height:3px;background:#fff"></i></div>
 <div class="cb" style="left:674px"><i class="abs" style="left:4px;top:3px;width:11px;height:11px;border:1px solid #fff;border-top-width:3px"></i></div>
 <div class="cb x" style="left:697px"><svg class="abs" style="left:3px;top:3px" width="13" height="13"><path d="M1.500 1.500L11.500 11.500M11.500 1.500L1.500 11.500" stroke="#fff" stroke-width="2.200"/></svg></div>
 <div class="menu" style="left:4px;top:29px;width:714px;height:20px;border-top:1px solid #f8f6ee">
  <span style="left:6px;top:2px">文件<span class="l" style="position:static">(F)</span></span>
  <span style="left:60px;top:2px">编辑<span class="l" style="position:static">(E)</span></span>
  <span style="left:114px;top:2px">格式<span class="l" style="position:static">(O)</span></span>
  <span style="left:168px;top:2px">查看<span class="l" style="position:static">(V)</span></span>
  <span style="left:222px;top:2px">帮助<span class="l" style="position:static">(H)</span></span>
 </div>
 <div class="abs" style="left:4px;top:49px;width:714px;height:486px;background:#fff;border-top:1px solid #8c9bb0;border-left:1px solid #aeb9c9"></div>
 <div class="abs" style="left:4px;top:48px;width:714px;height:1px;background:#fbfaf4"></div>
 <!-- v scrollbar -->
 <div class="abs" style="left:701px;top:50px;width:17px;height:485px;background:#f4f2ec"></div>
 <div class="abs" style="left:701px;top:51px;width:17px;height:16px;background:linear-gradient(90deg,#cfdcfb,#bccdf6);border:1px solid #fff;border-radius:3px"></div>
 <svg class="abs" style="left:705px;top:55px" width="10" height="8"><path d="M1.500 6L5 2.500L8.500 6" stroke="#3f5a94" stroke-width="2" fill="none"/></svg>
 <div class="abs" style="left:701px;top:68px;width:17px;height:163px;background:linear-gradient(90deg,#c9d7fb,#bfcff8 60%,#b2c4f2);border:1px solid #fff;border-radius:3px"></div>
 <div class="abs" style="left:706px;top:144px;width:7px;height:9px;background:repeating-linear-gradient(#eef3ff 0,#eef3ff 1px,#8ea6e0 1px,#8ea6e0 2px)"></div>
 <div class="abs" style="left:701px;top:518px;width:17px;height:17px;background:linear-gradient(90deg,#cfdcfb,#bccdf6);border:1px solid #fff;border-radius:3px"></div>
 <svg class="abs" style="left:705px;top:523px" width="10" height="8"><path d="M1.500 2L5 5.500L8.500 2" stroke="#3f5a94" stroke-width="2" fill="none"/></svg>
<div id="nptext">
<p>PERFORMER &quot;<b>中国交响乐团</b>&quot;</p>
<p>TITLE &quot;<b>《枫桥夜泊》</b>&quot;</p>
<p>FILE &quot;<b>中国交响乐团</b>.-.[<b>枫桥夜泊</b>].<b>专辑</b>.(ape).ape&quot; WAVE</p>
<p>  TRACK 01 AUDIO</p>
<p>    TITLE &quot;<b>阿里山的姑娘</b>&quot;</p>
<p>    PERFORMER &quot;<b>中国交响乐团</b>&quot;</p>
<p>    REM GENRE <b>试听流</b></p>
<p>    REM COMMENT <i>------------------------------</i>  <u>*</u><b>谢绝它用，否则一切后果自负</b><u>*</u>  <b>本作品仅</b></p>
<p><b>供个人音乐制作的学习、</b>  <b>交流之用试听</b>.<b>喜欢请支持正版</b>.  <b>请自觉于下载后</b>24<b>小时内删除</b>.  <i>--</i></p>
<p><i>----------------------------</i>  <u>*****</u><b>有空踩踩我的Ｑ</b>-zone<b>哈</b><u>****</u>  Http://306082158.Q-</p>
<p>zone.Qq.Com  <i>------------------------------</i></p>
<p>    INDEX 01 00:00:00</p>
<p>  TRACK 02 AUDIO</p>
<p>    TITLE &quot;<b>松则亚拉</b>&quot;</p>
<p>    PERFORMER &quot;<b>中国交响乐团</b>&quot;</p>
<p>    REM GENRE <b>试听流</b></p>
<p>    REM COMMENT <i>------------------------------</i>  <u>*</u><b>谢绝它用，否则一切后果自负</b><u>*</u>  <b>本作品仅</b></p>
<p><b>供个人音乐制作的学习、</b>  <b>交流之用试听</b>.<b>喜欢请支持正版</b>.  <b>请自觉于下载后</b>24<b>小时内删除</b>.  <i>--</i></p>
<p><i>----------------------------</i>  <u>*****</u><b>有空踩踩我的Ｑ</b>-zone<b>哈</b><u>****</u>  Http://306082158.Q-</p>
<p>zone.Qq.Com  <i>------------------------------</i></p>
<p>    INDEX 00 02:02:63</p>
<p>    INDEX 01 02:11:18</p>
<p>  TRACK 03 AUDIO</p>
<p>    TITLE &quot;<b>枫桥夜泊</b>&quot;</p>
<p>    PERFORMER &quot;<b>中国交响乐团</b>&quot;</p>
<p>    REM GENRE <b>试听流</b></p>
<p>    REM COMMENT <i>------------------------------</i>  <u>*</u><b>谢绝它用，否则一切后果自负</b><u>*</u>  <b>本作品仅</b></p>
<p><b>供个人音乐制作的学习、</b>  <b>交流之用试听</b>.<b>喜欢请支持正版</b>.  <b>请自觉于下载后</b>24<b>小时内删除</b>.  <i>--</i></p>
<p><i>----------------------------</i>  <u>*****</u><b>有空踩踩我的Ｑ</b>-zone<b>哈</b><u>****</u>  Http://306082158.Q-</p>
<p>zone.Qq.Com  <i>------------------------------</i></p>
</div>
 <div class="abs" style="left:648px;top:517px;font:13.500px/16px 'Liberation Sans',sans-serif;color:#111;letter-spacing:-.2px">hifi168.com</div>
</div>
</div>
</body></html>
